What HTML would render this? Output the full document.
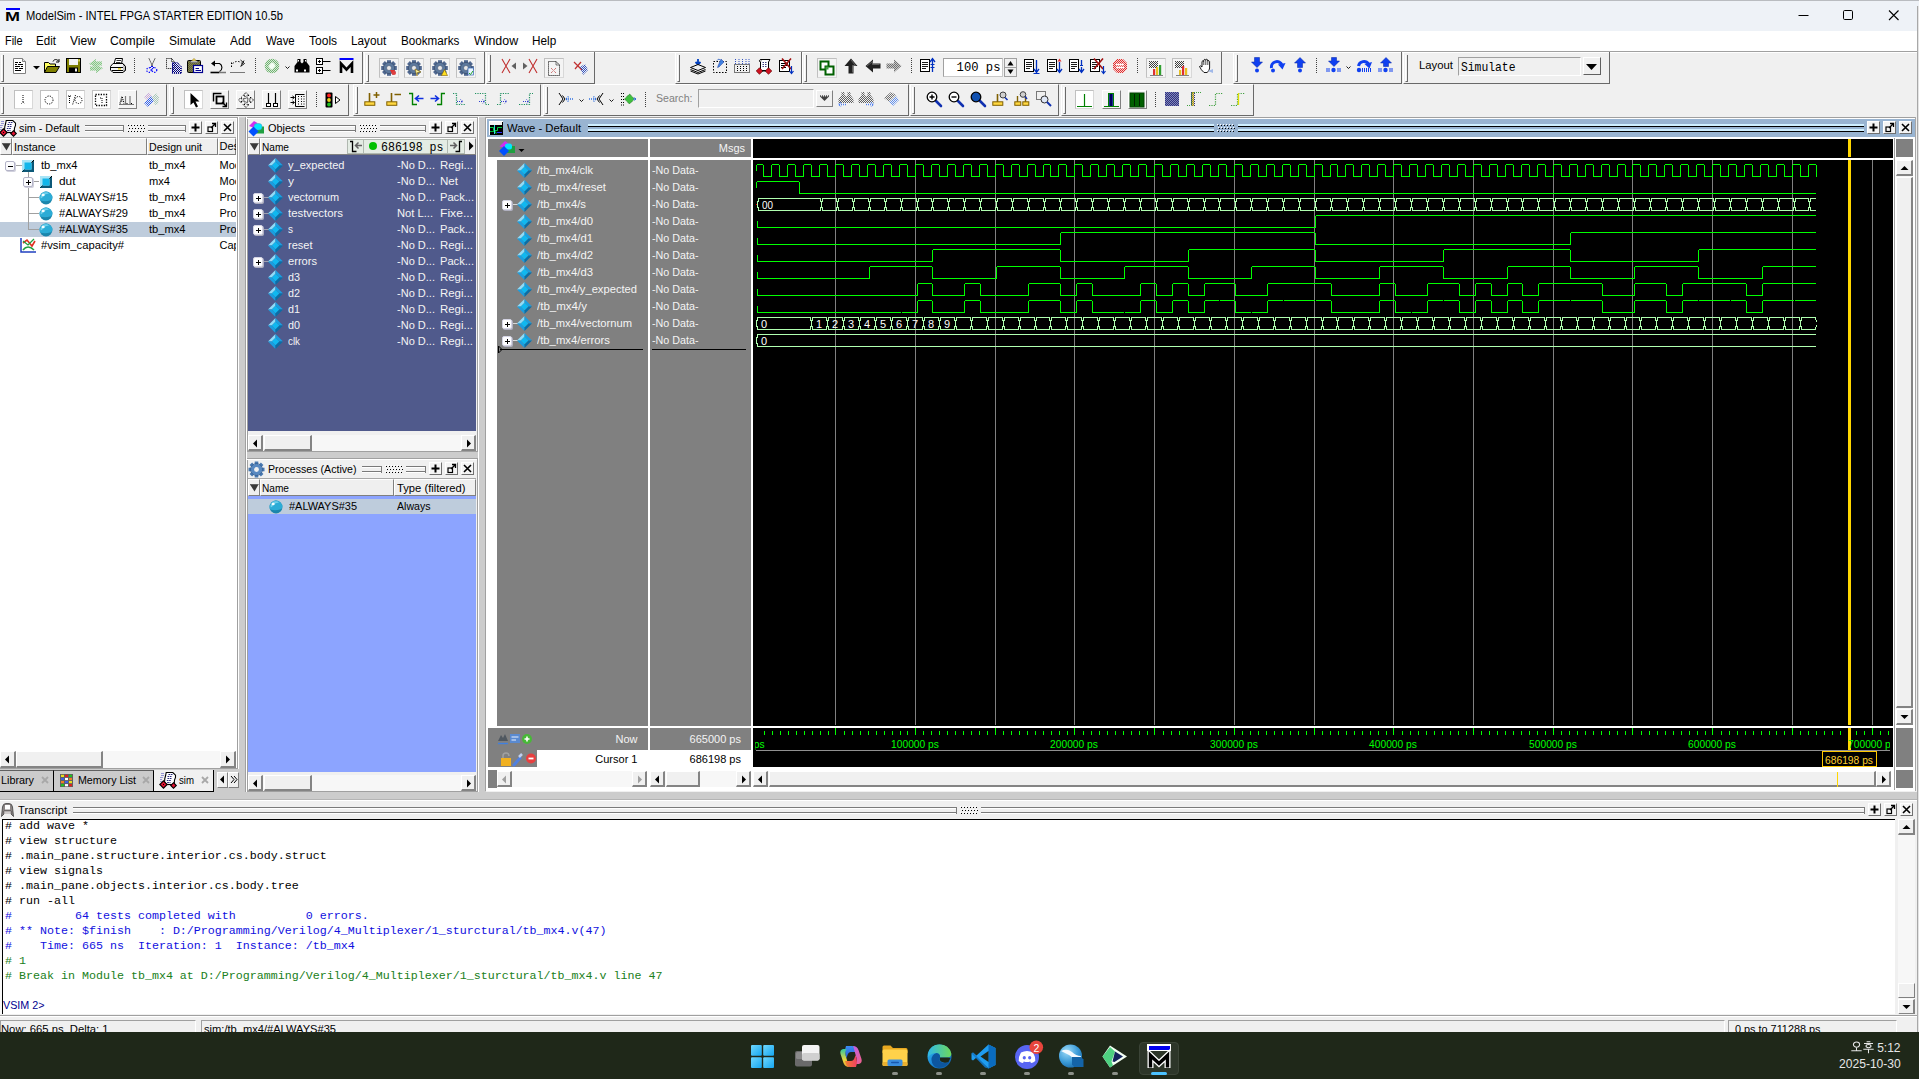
<!DOCTYPE html>
<html><head><meta charset="utf-8"><title>ModelSim</title>
<style>
html,body{margin:0;padding:0;}
body{width:1919px;height:1079px;overflow:hidden;position:relative;background:#f0f0f0;font-family:"Liberation Sans",sans-serif;font-size:11px;}
body div,body span,body svg{position:absolute;box-sizing:border-box;}
span{display:block;}
svg{overflow:visible;}
</style></head><body>
<div style="left:0px;top:0px;width:1919px;height:31px;background:#eef2f7;"></div>
<div style="left:0px;top:0px;width:1919px;height:1px;background:#b9bcc0;"></div>
<div style="left:6px;top:8px;width:14px;height:2px;background:#0000ff;"></div>
<span style="left:5px;top:10px;height:14px;line-height:14px;font-size:13px;color:#000;white-space:pre;font-weight:bold;transform-origin:0 50%;transform:scaleX(1.3852);">M</span>
<span style="left:26px;top:8px;height:16px;line-height:16px;font-size:12px;color:#000;white-space:pre;transform-origin:0 50%;transform:scaleX(0.9294);">ModelSim - INTEL FPGA STARTER EDITION 10.5b</span>
<svg style="left:1790px;top:8px;" width="120" height="16" viewBox="0 0 120 16"><path d="M8.5 7.5H18.5" stroke="#000" stroke-width="1" fill="none"/><rect x="53.5" y="2.5" width="9" height="9" rx="1.2" stroke="#000" stroke-width="1" fill="none"/><path d="M99 2.5L108.5 12M108.5 2.5L99 12" stroke="#000" stroke-width="1.1" fill="none"/></svg>
<div style="left:0px;top:31px;width:1919px;height:20px;background:#ffffff;"></div>
<span style="left:4.5px;top:32px;height:18px;line-height:18px;font-size:12.5px;color:#000;white-space:pre;transform-origin:0 50%;transform:scaleX(0.8689);">File</span>
<span style="left:36.3px;top:32px;height:18px;line-height:18px;font-size:12.5px;color:#000;white-space:pre;transform-origin:0 50%;transform:scaleX(0.9239);">Edit</span>
<span style="left:70px;top:32px;height:18px;line-height:18px;font-size:12.5px;color:#000;white-space:pre;transform-origin:0 50%;transform:scaleX(0.9677);">View</span>
<span style="left:110.3px;top:32px;height:18px;line-height:18px;font-size:12.5px;color:#000;white-space:pre;transform-origin:0 50%;transform:scaleX(0.9750);">Compile</span>
<span style="left:169.2px;top:32px;height:18px;line-height:18px;font-size:12.5px;color:#000;white-space:pre;transform-origin:0 50%;transform:scaleX(0.9624);">Simulate</span>
<span style="left:230.2px;top:32px;height:18px;line-height:18px;font-size:12.5px;color:#000;white-space:pre;transform-origin:0 50%;transform:scaleX(0.9532);">Add</span>
<span style="left:265.9px;top:32px;height:18px;line-height:18px;font-size:12.5px;color:#000;white-space:pre;transform-origin:0 50%;transform:scaleX(0.9115);">Wave</span>
<span style="left:308.8px;top:32px;height:18px;line-height:18px;font-size:12.5px;color:#000;white-space:pre;transform-origin:0 50%;transform:scaleX(0.9630);">Tools</span>
<span style="left:351.4px;top:32px;height:18px;line-height:18px;font-size:12.5px;color:#000;white-space:pre;transform-origin:0 50%;transform:scaleX(0.9406);">Layout</span>
<span style="left:401.2px;top:32px;height:18px;line-height:18px;font-size:12.5px;color:#000;white-space:pre;transform-origin:0 50%;transform:scaleX(0.9326);">Bookmarks</span>
<span style="left:473.7px;top:32px;height:18px;line-height:18px;font-size:12.5px;color:#000;white-space:pre;transform-origin:0 50%;transform:scaleX(0.9920);">Window</span>
<span style="left:532.3px;top:32px;height:18px;line-height:18px;font-size:12.5px;color:#000;white-space:pre;transform-origin:0 50%;transform:scaleX(0.9414);">Help</span>
<div style="left:0px;top:51px;width:1919px;height:65px;background:#f0f0f0;"></div>
<div style="left:0px;top:51px;width:1919px;height:1px;background:#a0a0a0;"></div>
<div style="left:0px;top:52px;width:1919px;height:1px;background:#ffffff;"></div>
<div style="left:-1px;top:52px;width:364px;height:32px;border-right:1px solid #696969;border-bottom:1px solid #696969;border-left:1px solid #fff;"></div>
<div style="left:1px;top:55px;width:3px;height:27px;border-right:1px solid #696969;border-left:1px solid #fff;border-bottom:1px solid #696969;"></div>
<svg style="left:12px;top:58px;" width="16" height="16" viewBox="0 0 16 16"><path d="M1.5 0.5H10.5L13.5 3.5V15.5H1.5Z" fill="#fff" stroke="#808080"/><path d="M10.5 0.5V3.5H13.5" fill="#e0e0e0" stroke="#808080"/><path d="M3 4.5H6M7 4.5H9M3 6.5H5M6 6.5H11M3 8.5H8M9 8.5H11M3 10.5H6M7 10.5H11M3 12.5H9" stroke="#000" shape-rendering="crispEdges"/></svg>
<svg style="left:44px;top:58px;" width="16" height="16" viewBox="0 0 16 16"><path d="M9 3.5C10 1 13 1 14.5 3" stroke="#000" fill="none"/><path d="M15 1V4H12" stroke="#000" fill="none"/><path d="M0.5 14.5V4.5H4.5L6 6H11.5V8.5" fill="#ffff60" stroke="#000"/><path d="M0.5 14.5L3.5 8.5H15.5L12 14.5Z" fill="#808000" stroke="#000"/></svg>
<svg style="left:66px;top:58px;" width="16" height="16" viewBox="0 0 16 16"><rect x="0.5" y="0.5" width="14" height="14" fill="#808000" stroke="#000"/><rect x="3" y="1" width="9" height="6" fill="#f4f4f4"/><rect x="3" y="9.5" width="9" height="5" fill="#000"/><rect x="9" y="10.5" width="2" height="3" fill="#f4f4f4"/><rect x="12.5" y="1.5" width="1.2" height="2" fill="#ffff80"/></svg>
<svg style="left:88px;top:58px;" width="16" height="16" viewBox="0 0 16 16"><defs><pattern id="u4dg" width="2" height="2" patternUnits="userSpaceOnUse"><rect width="2" height="2" fill="none"/><rect width="1" height="1" fill="#80c080"/><rect x="1" y="1" width="1" height="1" fill="#80c080"/></pattern></defs><path d="M1 6L8 1V3.5H14V7.5H8V9Z" fill="url(#u4dg)"/><path d="M15 10L8 15V12.5H2V8.5H8V7Z" fill="url(#u4dg)"/><path d="M1 6L8 1V3.5H14V7.5H8V9ZM15 10L8 15V12.5H2V8.5H8V7Z" fill="#90d090" opacity=".35"/></svg>
<svg style="left:110px;top:58px;" width="16" height="16" viewBox="0 0 16 16"><path d="M4 6L5.5 0.5H12.5L11.5 6" fill="#fff" stroke="#000"/><path d="M6.5 2.5H11M6 4.5H10.5" stroke="#000" stroke-width=".8"/><path d="M0.5 8.5L3 5.5H13L15.5 8.5V12L13 14.5H3L0.5 12Z" fill="#f4f4f4" stroke="#000"/><path d="M0.5 9.5H15.5" stroke="#000"/><path d="M2 12.5H13" stroke="#000"/><rect x="8" y="10.2" width="3" height="1.3" fill="#e8d000"/><path d="M13 6L15.5 8.5V12L13 14.5" fill="#c0c0c0" stroke="#000"/></svg>
<svg style="left:144px;top:58px;" width="16" height="16" viewBox="0 0 16 16"><path d="M5 0.5L8.5 8M11 0.5L7.5 8" stroke="#000" stroke-dasharray="1.2 1" fill="none"/><circle cx="5" cy="12" r="2.3" fill="none" stroke="#0000ff" stroke-dasharray="1.2 1.2" stroke-width="1.2"/><circle cx="10.5" cy="12" r="2.3" fill="none" stroke="#0000ff" stroke-dasharray="1.2 1.2" stroke-width="1.2"/><path d="M8 8L6 10M8 8L10 10" stroke="#0000ff"/></svg>
<svg style="left:166px;top:58px;" width="16" height="16" viewBox="0 0 16 16"><defs><pattern id="u7db" width="2" height="2" patternUnits="userSpaceOnUse"><rect width="2" height="2" fill="none"/><rect width="1" height="1" fill="#000080"/><rect x="1" y="1" width="1" height="1" fill="#000080"/></pattern></defs><path d="M0.5 0.5H5.5L8.5 3.5V10.5H0.5Z" fill="none" stroke="#000" stroke-dasharray="1 1"/><path d="M5.5 0.5V3.5H8.5" fill="none" stroke="#000" stroke-dasharray="1 1"/><path d="M6 5H11L15 9V15H6Z" fill="url(#u7db)"/><path d="M6.5 4.5H11.5L15.5 8.5V15.5H6.5Z" fill="none" stroke="#000080" stroke-dasharray="1 1"/></svg>
<svg style="left:187px;top:58px;" width="16" height="16" viewBox="0 0 16 16"><rect x="0.5" y="2.5" width="13" height="12" rx="1" fill="#808050" stroke="#000"/><defs><pattern id="u8dp" width="2" height="2" patternUnits="userSpaceOnUse"><rect width="2" height="2" fill="none"/><rect width="1" height="1" fill="#606030"/><rect x="1" y="1" width="1" height="1" fill="#606030"/></pattern></defs><rect x="1" y="3" width="12" height="11" fill="url(#u8dp)"/><path d="M4 3.5L7 0.5L10 3.5Z" fill="#ffe860" stroke="#806000" stroke-width=".6"/><rect x="3.5" y="3" width="7" height="1.6" fill="#e0e0e0" stroke="#404040" stroke-width=".5"/><rect x="6.5" y="7.5" width="9" height="7" fill="#fff" stroke="#000090" stroke-width="1.2"/><path d="M8.5 10.5H12M8.5 12.5H14" stroke="#000090"/></svg>
<svg style="left:210px;top:58px;" width="16" height="16" viewBox="0 0 16 16"><path d="M3.5 5.5H9.5A4.5 4.5 0 0 1 9.5 13.5" fill="none" stroke="#000" stroke-width="1.1"/><path d="M1 5.5L5 2.5V8.5Z" fill="#000"/><path d="M0.5 14.5H9.5" stroke="#000" stroke-width="1.6"/><path d="M10.5 14.5H15.5" stroke="#000" stroke-width="1.6" stroke-dasharray="1 1"/></svg>
<svg style="left:230px;top:58px;" width="16" height="16" viewBox="0 0 16 16"><path d="M12 5.5A5.5 4.5 0 0 0 2 7" fill="none" stroke="#000" stroke-dasharray="1.5 1.5"/><path d="M10.5 2L14.5 5.5L10.5 8.5M14 2.5L11 8" stroke="#000" fill="none" stroke-width=".9"/><path d="M0.5 14.5H15" stroke="#000" stroke-dasharray="1 1"/><path d="M1.5 4.5V6M1.5 7.5V9" stroke="#000"/></svg>
<svg style="left:264px;top:58px;" width="16" height="16" viewBox="0 0 16 16"><defs><pattern id="u11dgc" width="2" height="2" patternUnits="userSpaceOnUse"><rect width="2" height="2" fill="#d8ecd8"/><rect width="1" height="1" fill="#70b070"/><rect x="1" y="1" width="1" height="1" fill="#70b070"/></pattern></defs><circle cx="8" cy="8" r="7.3" fill="url(#u11dgc)"/><rect x="5" y="5.5" width="6" height="5" rx="1" fill="#f4fff4" transform="rotate(-45 8 8)"/></svg>
<svg style="left:294px;top:58px;" width="16" height="16" viewBox="0 0 16 16"><path d="M3.5 1H6.5V4L8 5.5V14.5H0.5V8L3.5 4Z" fill="#000"/><path d="M12.5 1H9.5V4L8 5.5V14.5H15.5V8L12.5 4Z" fill="#000"/><rect x="6.5" y="6" width="3" height="3" fill="#000"/><rect x="2" y="11.5" width="2" height="2" fill="#fff"/><rect x="10" y="11.5" width="2" height="2" fill="#fff"/><rect x="4" y="2" width="1" height="1.5" fill="#fff"/><rect x="11" y="2" width="1" height="1.5" fill="#fff"/></svg>
<svg style="left:316px;top:58px;" width="16" height="16" viewBox="0 0 16 16"><rect x="0.5" y="0.5" width="6" height="6" fill="#fff" stroke="#000"/><rect x="0.5" y="9.5" width="6" height="6" fill="#fff" stroke="#000"/><path d="M2 3.5H5M3.5 2V5M2 12.5H5M3.5 11V14" stroke="#000"/><path d="M6.5 3.5H14.5M6.5 12.5H14.5" stroke="#000"/></svg>
<svg style="left:339px;top:58px;" width="16" height="16" viewBox="0 0 16 16"><rect x="0.5" y="0" width="14" height="2" fill="#0000ff"/><path d="M2 15V5.5L7.5 11.5L13 5.5V15" stroke="#000" stroke-width="2.6" fill="none" stroke-linejoin="miter"/></svg>
<svg style="left:32.5px;top:66px;" width="7" height="4" viewBox="0 0 7 4"><path d="M0 0H7L3.5 3.5Z" fill="#000"/></svg>
<div style="left:134px;top:58px;width:1px;height:16px;background-image:linear-gradient(#404040 50%,transparent 50%);background-size:1px 2px;"></div>
<div style="left:255px;top:58px;width:1px;height:16px;background-image:linear-gradient(#404040 50%,transparent 50%);background-size:1px 2px;"></div>
<svg style="left:284.5px;top:66px;" width="5" height="4" viewBox="0 0 5 4"><path d="M0.5 0.5L2.5 2.5L4.5 0.5" stroke="#000" fill="none" stroke-width=".9"/></svg>
<div style="left:364px;top:52px;width:121px;height:32px;border-right:1px solid #696969;border-bottom:1px solid #696969;border-left:1px solid #fff;"></div>
<div style="left:366px;top:55px;width:3px;height:27px;border-right:1px solid #696969;border-left:1px solid #fff;border-bottom:1px solid #696969;"></div>
<div style="left:379px;top:58px;width:20px;height:20px;background:#f4f4f4;border:1px solid #d8d8d8;border-top-color:#c0c0c0;border-left-color:#c0c0c0;"></div>
<svg style="left:381px;top:60px;" width="16" height="16" viewBox="0 0 16 16"><rect x="-2" y="-7.8" width="4" height="4" fill="#506890" transform="translate(8 8) rotate(0)"/><rect x="-2" y="-7.8" width="4" height="4" fill="#506890" transform="translate(8 8) rotate(45)"/><rect x="-2" y="-7.8" width="4" height="4" fill="#506890" transform="translate(8 8) rotate(90)"/><rect x="-2" y="-7.8" width="4" height="4" fill="#506890" transform="translate(8 8) rotate(135)"/><rect x="-2" y="-7.8" width="4" height="4" fill="#506890" transform="translate(8 8) rotate(180)"/><rect x="-2" y="-7.8" width="4" height="4" fill="#506890" transform="translate(8 8) rotate(225)"/><rect x="-2" y="-7.8" width="4" height="4" fill="#506890" transform="translate(8 8) rotate(270)"/><rect x="-2" y="-7.8" width="4" height="4" fill="#506890" transform="translate(8 8) rotate(315)"/><circle cx="8" cy="8" r="5.6" fill="#5c789c" stroke="#3c5070" stroke-width=".8"/><circle cx="8" cy="8" r="2.5" fill="#e8e8e8" stroke="#3c5070" stroke-width=".6"/><path d="M9 10L14 10L11.5 15Z" fill="#e03030"/><circle cx="13" cy="13" r="2" fill="#e04040"/></svg>
<div style="left:404px;top:58px;width:20px;height:20px;background:#f4f4f4;border:1px solid #d8d8d8;border-top-color:#c0c0c0;border-left-color:#c0c0c0;"></div>
<svg style="left:406px;top:60px;" width="16" height="16" viewBox="0 0 16 16"><rect x="-2" y="-7.8" width="4" height="4" fill="#506890" transform="translate(8 8) rotate(0)"/><rect x="-2" y="-7.8" width="4" height="4" fill="#506890" transform="translate(8 8) rotate(45)"/><rect x="-2" y="-7.8" width="4" height="4" fill="#506890" transform="translate(8 8) rotate(90)"/><rect x="-2" y="-7.8" width="4" height="4" fill="#506890" transform="translate(8 8) rotate(135)"/><rect x="-2" y="-7.8" width="4" height="4" fill="#506890" transform="translate(8 8) rotate(180)"/><rect x="-2" y="-7.8" width="4" height="4" fill="#506890" transform="translate(8 8) rotate(225)"/><rect x="-2" y="-7.8" width="4" height="4" fill="#506890" transform="translate(8 8) rotate(270)"/><rect x="-2" y="-7.8" width="4" height="4" fill="#506890" transform="translate(8 8) rotate(315)"/><circle cx="8" cy="8" r="5.6" fill="#5c789c" stroke="#3c5070" stroke-width=".8"/><circle cx="8" cy="8" r="2.5" fill="#e8e8e8" stroke="#3c5070" stroke-width=".6"/><path d="M9 9L15 12L11.5 12.5L11 16Z" fill="#fff8a0" stroke="#806000" stroke-width=".6"/></svg>
<div style="left:430px;top:58px;width:20px;height:20px;background:#f4f4f4;border:1px solid #d8d8d8;border-top-color:#c0c0c0;border-left-color:#c0c0c0;"></div>
<svg style="left:432px;top:60px;" width="16" height="16" viewBox="0 0 16 16"><rect x="-2" y="-7.8" width="4" height="4" fill="#506890" transform="translate(8 8) rotate(0)"/><rect x="-2" y="-7.8" width="4" height="4" fill="#506890" transform="translate(8 8) rotate(45)"/><rect x="-2" y="-7.8" width="4" height="4" fill="#506890" transform="translate(8 8) rotate(90)"/><rect x="-2" y="-7.8" width="4" height="4" fill="#506890" transform="translate(8 8) rotate(135)"/><rect x="-2" y="-7.8" width="4" height="4" fill="#506890" transform="translate(8 8) rotate(180)"/><rect x="-2" y="-7.8" width="4" height="4" fill="#506890" transform="translate(8 8) rotate(225)"/><rect x="-2" y="-7.8" width="4" height="4" fill="#506890" transform="translate(8 8) rotate(270)"/><rect x="-2" y="-7.8" width="4" height="4" fill="#506890" transform="translate(8 8) rotate(315)"/><circle cx="8" cy="8" r="5.6" fill="#5c789c" stroke="#3c5070" stroke-width=".8"/><circle cx="8" cy="8" r="2.5" fill="#e8e8e8" stroke="#3c5070" stroke-width=".6"/><path d="M9.5 15.5L12.5 9.5L15.5 15.5Z" fill="#ffe020" stroke="#806000" stroke-width=".6"/></svg>
<div style="left:456px;top:58px;width:20px;height:20px;background:#f4f4f4;border:1px solid #d8d8d8;border-top-color:#c0c0c0;border-left-color:#c0c0c0;"></div>
<svg style="left:458px;top:60px;" width="16" height="16" viewBox="0 0 16 16"><rect x="-2" y="-7.8" width="4" height="4" fill="#506890" transform="translate(8 8) rotate(0)"/><rect x="-2" y="-7.8" width="4" height="4" fill="#506890" transform="translate(8 8) rotate(45)"/><rect x="-2" y="-7.8" width="4" height="4" fill="#506890" transform="translate(8 8) rotate(90)"/><rect x="-2" y="-7.8" width="4" height="4" fill="#506890" transform="translate(8 8) rotate(135)"/><rect x="-2" y="-7.8" width="4" height="4" fill="#506890" transform="translate(8 8) rotate(180)"/><rect x="-2" y="-7.8" width="4" height="4" fill="#506890" transform="translate(8 8) rotate(225)"/><rect x="-2" y="-7.8" width="4" height="4" fill="#506890" transform="translate(8 8) rotate(270)"/><rect x="-2" y="-7.8" width="4" height="4" fill="#506890" transform="translate(8 8) rotate(315)"/><circle cx="8" cy="8" r="5.6" fill="#5c789c" stroke="#3c5070" stroke-width=".8"/><circle cx="8" cy="8" r="2.5" fill="#e8e8e8" stroke="#3c5070" stroke-width=".6"/><rect x="10" y="8" width="5.5" height="7" fill="#e8f4ff" stroke="#3060b0" stroke-width=".7"/><path d="M11 13L12.5 14.5L15 11" stroke="#20a020" fill="none"/></svg>
<div style="left:486px;top:52px;width:109px;height:32px;border-right:1px solid #696969;border-bottom:1px solid #696969;border-left:1px solid #fff;"></div>
<div style="left:488px;top:55px;width:3px;height:27px;border-right:1px solid #696969;border-left:1px solid #fff;border-bottom:1px solid #696969;"></div>
<svg style="left:501px;top:58px;" width="16" height="16" viewBox="0 0 16 16"><path d="M1 1L9 15M9 1L1 15" stroke="#c03030" stroke-width="1.1"/><path d="M15 4.5V11.5L10.5 8Z" fill="#606060"/></svg>
<svg style="left:522px;top:58px;" width="16" height="16" viewBox="0 0 16 16"><path d="M7 1L15 15M15 1L7 15" stroke="#c03030" stroke-width="1.1"/><path d="M1 4.5V11.5L5.5 8Z" fill="#606060"/></svg>
<div style="left:544px;top:58px;width:20px;height:20px;background:#f4f4f4;border:1px solid #d8d8d8;border-top-color:#c0c0c0;border-left-color:#c0c0c0;"></div>
<svg style="left:546px;top:60px;" width="16" height="16" viewBox="0 0 16 16"><path d="M2.5 1.5H10L13.5 5V15.5H2.5Z" fill="none" stroke="#000" stroke-dasharray="1 1"/><path d="M10 1.5V5H13.5" fill="none" stroke="#000" stroke-dasharray="1 1"/><path d="M5 8L10 13M10 8L5 13" stroke="#c04040" stroke-dasharray="1 1"/></svg>
<svg style="left:573px;top:60px;" width="16" height="16" viewBox="0 0 16 16"><defs><pattern id="u22dpx" width="2" height="2" patternUnits="userSpaceOnUse"><rect width="2" height="2" fill="none"/><rect width="1" height="1" fill="#3050c0"/><rect x="1" y="1" width="1" height="1" fill="#3050c0"/></pattern></defs><path d="M1 2L9 10M8 2L2 9" stroke="#c03030" stroke-width="1.2"/><path d="M7 7L12 4L15 10L10 15Z" fill="url(#u22dpx)"/></svg>
<div style="left:675px;top:52px;width:127px;height:32px;border-right:1px solid #696969;border-bottom:1px solid #696969;border-left:1px solid #fff;"></div>
<div style="left:677px;top:55px;width:3px;height:27px;border-right:1px solid #696969;border-left:1px solid #fff;border-bottom:1px solid #696969;"></div>
<svg style="left:690px;top:58px;" width="16" height="16" viewBox="0 0 16 16"><path d="M8 1V6M5.5 4L8 6.5L10.5 4" stroke="#0040c0" stroke-width="1.8" fill="none"/><path d="M0.5 9.5L8 6.5L15.5 9.5L8 12.5Z" fill="#f0f0f0" stroke="#000"/><path d="M0.5 11.5L8 14.5L15.5 11.5" fill="none" stroke="#000"/><path d="M0.5 13L8 16L15.5 13" fill="none" stroke="#000"/></svg>
<svg style="left:712px;top:58px;" width="16" height="16" viewBox="0 0 16 16"><rect x="1.5" y="3.5" width="13" height="11" fill="none" stroke="#000" stroke-dasharray="1.5 1.5"/><path d="M9 1L12 4L7 9L5.5 9.5L6 8Z" fill="#4080e0" stroke="#2040a0" stroke-width=".5"/><path d="M5 2.5C6 1 7.5 1 8 2" stroke="#3060c0" fill="none"/></svg>
<svg style="left:734px;top:58px;" width="16" height="16" viewBox="0 0 16 16"><path d="M1.5 1V6M5 1V6M8.5 1V6M12 1V6M15 1V6" stroke="#3050c0" stroke-dasharray="1 1"/><rect x="0.5" y="6.5" width="15" height="8" fill="none" stroke="#000" stroke-dasharray="1 1"/><path d="M3.5 8V14M6.5 8V14M9.5 8V14M12.5 8V14" stroke="#000" stroke-dasharray="1 1"/></svg>
<svg style="left:756px;top:58px;" width="16" height="16" viewBox="0 0 16 16"><path d="M5 1.5H14L12.5 4V12.5H4.5V4Z" fill="#fff" stroke="#000"/><path d="M6.5 4.5H11M6.5 6.5H11M6.5 8.5H11" stroke="#404080" stroke-dasharray="1.5 1"/><path d="M5 1.5C3 1.5 3 4 4.5 4" fill="#fff" stroke="#000"/><rect x="1.2" y="10.7" width="4.6" height="4.6" transform="rotate(45 3.5 13)" fill="#d01020" stroke="#600" stroke-width=".7"/><rect x="10.2" y="10.7" width="4.6" height="4.6" transform="rotate(45 12.5 13)" fill="#d01020" stroke="#600" stroke-width=".7"/><path d="M6 13H10" stroke="#000"/></svg>
<svg style="left:778px;top:58px;" width="16" height="16" viewBox="0 0 16 16"><rect x="1.5" y="2.5" width="10" height="11" fill="#fff" stroke="#000"/><path d="M3 5.5H10M3 7.5H10M3 9.5H8" stroke="#000"/><path d="M4 0.5L13 11M13 0.5L4 11" stroke="#a01010" stroke-width="1.6"/><path d="M13.5 8V15M11.5 13L13.5 15.5L15.5 13" stroke="#0030c0" fill="none" stroke-width="1.2"/></svg>
<div style="left:802px;top:52px;width:420px;height:32px;border-right:1px solid #696969;border-bottom:1px solid #696969;border-left:1px solid #fff;"></div>
<div style="left:804px;top:55px;width:3px;height:27px;border-right:1px solid #696969;border-left:1px solid #fff;border-bottom:1px solid #696969;"></div>
<div style="left:817px;top:58px;width:20px;height:20px;background:#f4f4f4;border:1px solid #d8d8d8;border-top-color:#c0c0c0;border-left-color:#c0c0c0;"></div>
<svg style="left:819px;top:60px;" width="16" height="16" viewBox="0 0 16 16"><rect x="1.5" y="1.5" width="8" height="8" fill="#fff" stroke="#006000" stroke-width="2"/><rect x="6.5" y="6.5" width="8" height="8" fill="#fff" stroke="#006000" stroke-width="2"/><rect x="6.5" y="6.5" width="3" height="3" fill="#40a040"/></svg>
<svg style="left:843px;top:58px;" width="16" height="16" viewBox="0 0 16 16"><path d="M8 0.5L14.5 8H10.5V15.5H5.5V8H1.5Z" fill="#202020"/><path d="M8 2L12.5 7.5H9.5V14.5" fill="none" stroke="#707070" stroke-width=".8"/></svg>
<svg style="left:865px;top:58px;" width="16" height="16" viewBox="0 0 16 16"><path d="M0.5 8L8 1.5V5.5H15.5V10.5H8V14.5Z" fill="#202020"/><path d="M2 8L7.5 3.5V6.5H14.5" fill="none" stroke="#707070" stroke-width=".8"/></svg>
<svg style="left:886px;top:58px;" width="16" height="16" viewBox="0 0 16 16"><defs><pattern id="u31dar" width="2" height="2" patternUnits="userSpaceOnUse"><rect width="2" height="2" fill="#c8c8c8"/><rect width="1" height="1" fill="#707070"/><rect x="1" y="1" width="1" height="1" fill="#707070"/></pattern></defs><path d="M15.5 8L8 1.5V5.5H0.5V10.5H8V14.5Z" fill="url(#u31dar)"/></svg>
<div style="left:911px;top:58px;width:1px;height:16px;background-image:linear-gradient(#404040 50%,transparent 50%);background-size:1px 2px;"></div>
<svg style="left:920px;top:58px;" width="16" height="16" viewBox="0 0 16 16"><rect x="0.5" y="1.5" width="9" height="12" fill="#fff" stroke="#000"/><path d="M2 4.5H8M2 6.5H8M2 8.5H8M2 10.5H6" stroke="#000" stroke-width=".9"/><path d="M12.5 14V1M10 4L12.5 0.5L15 4" stroke="#0030c0" fill="none" stroke-width="1.3"/><path d="M10.5 6.5H14.5M10.5 9.5H14.5" stroke="#0030c0"/></svg>
<div style="left:943px;top:58px;width:60px;height:19px;background:#fff;border:1px solid #c8c8c8;border-top-color:#a0a0a0;border-left-color:#a0a0a0;"></div>
<span style="right:918.5px;top:60px;height:17px;line-height:17px;font-size:12.2px;color:#000;white-space:pre;font-family:'Liberation Mono',monospace;">100 ps</span>
<div style="left:1004px;top:58px;width:13px;height:19px;background:#f0f0f0;border:1px solid #a0a0a0;"></div>
<div style="left:1004px;top:67px;width:13px;height:1px;background:#a0a0a0;"></div>
<svg style="left:1004px;top:58px;" width="13" height="19" viewBox="0 0 13 19"><path d="M3.5 7.5H9.5L6.5 3Z" fill="#000"/><path d="M3.5 11.5H9.5L6.5 16Z" fill="#000"/></svg>
<svg style="left:1024px;top:58px;" width="16" height="16" viewBox="0 0 16 16"><rect x="0.5" y="1.5" width="9" height="12" fill="#fff" stroke="#000"/><path d="M2 4.5H8M2 6.5H8M2 8.5H8M2 10.5H6" stroke="#000" stroke-width=".9"/><path d="M12.5 2V14M10 11L12.5 14.5L15 11" stroke="#0030c0" fill="none" stroke-width="1.3"/><path d="M9.5 15.5H15.5" stroke="#0030c0"/></svg>
<svg style="left:1047px;top:58px;" width="16" height="16" viewBox="0 0 16 16"><rect x="0.5" y="1.5" width="9" height="12" fill="#fff" stroke="#000"/><path d="M2 4.5H8M2 6.5H8M2 8.5H8M2 10.5H6" stroke="#000" stroke-width=".9"/><path d="M12.5 4V14M10 11L12.5 14.5L15 11" stroke="#0030c0" fill="none" stroke-width="1.3"/><path d="M12.5 0.5L14.5 3.5H10.5Z" fill="#e03030"/></svg>
<svg style="left:1069px;top:58px;" width="16" height="16" viewBox="0 0 16 16"><rect x="0.5" y="1.5" width="9" height="12" fill="#fff" stroke="#000"/><path d="M2 4.5H8M2 6.5H8M2 8.5H8M2 10.5H6" stroke="#000" stroke-width=".9"/><path d="M12.5 2V8M12.5 9V14M10 11L12.5 14.5L15 11" stroke="#0030c0" fill="none" stroke-width="1.3"/><path d="M11 7.5H14" stroke="#0030c0"/></svg>
<svg style="left:1090px;top:58px;" width="16" height="16" viewBox="0 0 16 16"><rect x="0.5" y="1.5" width="9" height="12" fill="#fff" stroke="#000"/><path d="M2 4.5H8M2 6.5H8M2 8.5H8M2 10.5H6" stroke="#000" stroke-width=".9"/><path d="M4 0.5L13 11M13 0.5L4 11" stroke="#a01010" stroke-width="1.6"/><path d="M13.5 8V15M11.5 13L13.5 15.5L15.5 13" stroke="#0030c0" fill="none" stroke-width="1.2"/></svg>
<svg style="left:1112px;top:58px;" width="16" height="16" viewBox="0 0 16 16"><defs><pattern id="u37dst" width="2" height="2" patternUnits="userSpaceOnUse"><rect width="2" height="2" fill="#f8d0d0"/><rect width="1" height="1" fill="#e03030"/><rect x="1" y="1" width="1" height="1" fill="#e03030"/></pattern></defs><path d="M5 1H11L15 5V11L11 15H5L1 11V5Z" fill="url(#u37dst)"/><path d="M4 6.5H12M4 9.5H12" stroke="#fff" stroke-width="1.5"/></svg>
<div style="left:1137px;top:58px;width:1px;height:16px;background-image:linear-gradient(#404040 50%,transparent 50%);background-size:1px 2px;"></div>
<div style="left:1146px;top:58px;width:20px;height:20px;background:#f4f4f4;border:1px solid #d8d8d8;border-top-color:#c0c0c0;border-left-color:#c0c0c0;"></div>
<svg style="left:1148px;top:60px;" width="16" height="16" viewBox="0 0 16 16"><defs><pattern id="u38dpf" width="2" height="2" patternUnits="userSpaceOnUse"><rect width="2" height="2" fill="none"/><rect width="1" height="1" fill="#404040"/><rect x="1" y="1" width="1" height="1" fill="#404040"/></pattern></defs><rect x="1" y="1" width="9" height="7" fill="url(#u38dpf)"/><rect x="5" y="9" width="2.2" height="6" fill="#e03030"/><rect x="8" y="7" width="2.2" height="8" fill="#e8c020"/><rect x="11" y="5" width="2.2" height="10" fill="#30a030"/><path d="M2 15.5H15" stroke="#808080"/></svg>
<div style="left:1172px;top:58px;width:20px;height:20px;background:#f4f4f4;border:1px solid #d8d8d8;border-top-color:#c0c0c0;border-left-color:#c0c0c0;"></div>
<svg style="left:1174px;top:60px;" width="16" height="16" viewBox="0 0 16 16"><defs><pattern id="u39dpf2" width="2" height="2" patternUnits="userSpaceOnUse"><rect width="2" height="2" fill="none"/><rect width="1" height="1" fill="#404040"/><rect x="1" y="1" width="1" height="1" fill="#404040"/></pattern></defs><rect x="1" y="1" width="9" height="7" fill="url(#u39dpf2)"/><rect x="5" y="10" width="2.2" height="5" fill="#e8c020"/><rect x="8" y="6" width="2.2" height="9" fill="#e03030"/><rect x="11" y="8" width="2.2" height="7" fill="#e8c020"/><path d="M2 15.5H15" stroke="#808080"/></svg>
<svg style="left:1198px;top:58px;" width="16" height="16" viewBox="0 0 16 16"><path d="M4 8V3.5Q4.8 2.2 5.8 3.5V2Q6.8 0.6 7.8 2V1.8Q8.8 0.5 9.8 2V3Q11 2 11.6 3.5V10Q11.5 13 9 14.5H6Q3 12 1.5 8.5Q2.5 7 4 9Z" fill="#fff" stroke="#000" stroke-width=".9"/><path d="M5.8 3.5V7M7.8 2V7M9.8 2.5V7" stroke="#000" stroke-width=".7"/><path d="M10 13L15 11V15Z" fill="#a0b8e8"/></svg>
<div style="left:1233px;top:52px;width:169px;height:32px;border-right:1px solid #696969;border-bottom:1px solid #696969;border-left:1px solid #fff;"></div>
<div style="left:1235px;top:55px;width:3px;height:27px;border-right:1px solid #696969;border-left:1px solid #fff;border-bottom:1px solid #696969;"></div>
<svg style="left:1249px;top:57px;" width="16" height="16" viewBox="0 0 16 16"><path d="M5.5 0.5H10.5V5H13.5L8 10.5L2.5 5H5.5Z" fill="#1040f0" stroke="#0020a0" stroke-width=".5"/><circle cx="8" cy="13.5" r="2" fill="#1040f0"/></svg>
<svg style="left:1270px;top:57px;" width="16" height="16" viewBox="0 0 16 16"><path d="M1.5 11A5.5 5.5 0 0 1 12 8" stroke="#1040f0" stroke-width="3" fill="none"/><path d="M15.5 6L12.5 12.5L8 7.5Z" fill="#1040f0"/><circle cx="3" cy="13.5" r="2" fill="#1040f0"/></svg>
<svg style="left:1292px;top:57px;" width="16" height="16" viewBox="0 0 16 16"><path d="M5.5 10.5H10.5V6H13.5L8 0.5L2.5 6H5.5Z" fill="#1040f0" stroke="#0020a0" stroke-width=".5"/><circle cx="8" cy="13.5" r="2" fill="#1040f0"/></svg>
<svg style="left:1326px;top:57px;" width="16" height="16" viewBox="0 0 16 16"><path d="M5.5 0.5H10.5V4H13.5L8 9.5L2.5 4H5.5Z" fill="#1040f0" stroke="#0020a0" stroke-width=".5"/><path d="M1 11V15M3 11V15M12 11V15M14 11V15" stroke="#1040f0"/><circle cx="7.5" cy="13" r="2.2" fill="#1040f0"/></svg>
<svg style="left:1356px;top:57px;" width="16" height="16" viewBox="0 0 16 16"><path d="M2.5 9A5.5 5.5 0 0 1 12.5 7" stroke="#1040f0" stroke-width="3" fill="none"/><path d="M16 5L13.5 11.5L8.5 7Z" fill="#1040f0"/><circle cx="3" cy="13" r="2.2" fill="#1040f0"/><path d="M6.5 11V15M8.5 11V15M10.5 11V15M12.5 11V15M14.5 11V15" stroke="#1040f0"/></svg>
<svg style="left:1378px;top:57px;" width="16" height="16" viewBox="0 0 16 16"><path d="M5.5 9.5H10.5V6H13.5L8 0.5L2.5 6H5.5Z" fill="#1040f0" stroke="#0020a0" stroke-width=".5"/><path d="M1 11V15M3 11V15M12 11V15M14 11V15" stroke="#1040f0"/><circle cx="7.5" cy="13" r="2.2" fill="#1040f0"/></svg>
<div style="left:1316px;top:58px;width:1px;height:16px;background-image:linear-gradient(#404040 50%,transparent 50%);background-size:1px 2px;"></div>
<svg style="left:1345.5px;top:66px;" width="5" height="4" viewBox="0 0 5 4"><path d="M0.5 0.5L2.5 2.5L4.5 0.5" stroke="#000" fill="none" stroke-width=".9"/></svg>
<div style="left:1403px;top:52px;width:207px;height:32px;border-right:1px solid #696969;border-bottom:1px solid #696969;border-left:1px solid #fff;"></div>
<div style="left:1405px;top:55px;width:3px;height:27px;border-right:1px solid #696969;border-left:1px solid #fff;border-bottom:1px solid #696969;"></div>
<span style="left:1419px;top:57px;height:17px;line-height:17px;font-size:11px;color:#000;white-space:pre;transform-origin:0 50%;transform:scaleX(1.0296);">Layout</span>
<div style="left:1458px;top:57px;width:123px;height:19px;background:#f0f0f0;border:1px solid #fff;border-top-color:#a0a0a0;border-left-color:#a0a0a0;"></div>
<span style="left:1461px;top:59px;height:18px;line-height:18px;font-size:12.2px;color:#000;white-space:pre;font-family:'Liberation Mono',monospace;transform-origin:0 50%;transform:scaleX(0.9304);">Simulate</span>
<div style="left:1583px;top:57px;width:18px;height:18px;background:#f0f0f0;border-right:1px solid #606060;border-bottom:1px solid #606060;border-top:1px solid #fff;border-left:1px solid #fff;"></div>
<svg style="left:1583px;top:57px;" width="18" height="18" viewBox="0 0 18 18"><path d="M3 7H14L8.5 13Z" fill="#000"/></svg>
<div style="left:-1px;top:84px;width:168px;height:32px;border-right:1px solid #696969;border-bottom:1px solid #696969;border-left:1px solid #fff;border-top:1px solid #fff;"></div>
<div style="left:1px;top:87px;width:3px;height:27px;border-right:1px solid #696969;border-left:1px solid #fff;border-bottom:1px solid #696969;"></div>
<div style="left:14px;top:90px;width:19px;height:19px;background:#fff;border:1px solid #d8d8d8;border-top-color:#c0c0c0;border-left-color:#c0c0c0;"></div>
<svg style="left:15px;top:92px;" width="16" height="16" viewBox="0 0 16 16"><path d="M8 3V11M6.5 11.5L8 10L9.5 11.5" stroke="#000" stroke-dasharray="1 1" fill="none"/></svg>
<div style="left:40px;top:90px;width:19px;height:19px;background:#fff;border:1px solid #d8d8d8;border-top-color:#c0c0c0;border-left-color:#c0c0c0;"></div>
<svg style="left:41px;top:92px;" width="16" height="16" viewBox="0 0 16 16"><circle cx="8" cy="8" r="4" stroke="#000" stroke-dasharray="1.2 1.2" fill="none"/></svg>
<div style="left:66px;top:90px;width:19px;height:19px;background:#fff;border:1px solid #d8d8d8;border-top-color:#c0c0c0;border-left-color:#c0c0c0;"></div>
<svg style="left:67px;top:92px;" width="16" height="16" viewBox="0 0 16 16"><path d="M2.5 4V12M1 4H4M8.5 3L5.5 13" stroke="#000" stroke-dasharray="1 1" fill="none"/><circle cx="11.5" cy="8" r="3.5" stroke="#000" stroke-dasharray="1.2 1.2" fill="none"/></svg>
<div style="left:92px;top:90px;width:19px;height:19px;background:#fff;border:1px solid #d8d8d8;border-top-color:#c0c0c0;border-left-color:#c0c0c0;"></div>
<svg style="left:93px;top:92px;" width="16" height="16" viewBox="0 0 16 16"><rect x="2.5" y="2.5" width="11" height="11" stroke="#000" stroke-dasharray="1.3 1.3" fill="none" stroke-width="1.3"/><path d="M7 6H9V11" stroke="#000" stroke-dasharray="1 1" fill="none"/></svg>
<div style="left:118px;top:90px;width:19px;height:19px;background:#f4f4f4;border-right:1px solid #808080;border-bottom:1px solid #808080;border-top:1px solid #fff;border-left:1px solid #fff;"></div>
<svg style="left:119px;top:92px;" width="16" height="16" viewBox="0 0 16 16"><path d="M1 11.5L3 4.5L5 11.5M2 9H4M6.5 4.5V11.5H9.5M11 4.5V11.5H14" stroke="#000" stroke-dasharray="1 1" fill="none" stroke-width="1.2"/><path d="M0.5 12.5H15" stroke="#000" stroke-dasharray="1 1"/></svg>
<svg style="left:143px;top:92px;" width="16" height="16" viewBox="0 0 16 16"><defs><pattern id="u52dp1" width="2" height="2" patternUnits="userSpaceOnUse"><rect width="2" height="2" fill="none"/><rect width="1" height="1" fill="#3060f0"/><rect x="1" y="1" width="1" height="1" fill="#3060f0"/></pattern><pattern id="u52dp2" width="2" height="2" patternUnits="userSpaceOnUse"><rect width="2" height="2" fill="none"/><rect width="1" height="1" fill="#c8a8d8"/><rect x="1" y="1" width="1" height="1" fill="#c8a8d8"/></pattern><pattern id="u52dp3" width="2" height="2" patternUnits="userSpaceOnUse"><rect width="2" height="2" fill="none"/><rect width="1" height="1" fill="#a8c8b8"/><rect x="1" y="1" width="1" height="1" fill="#a8c8b8"/></pattern></defs><path d="M1 11L8 4L12 8L5 15Z" fill="url(#u52dp1)"/><path d="M1 5L6 0.5L9 3.5L4 8Z" fill="url(#u52dp2)"/><path d="M9 5L13 1L16 5L15 12L12 13Z" fill="url(#u52dp3)"/></svg>
<div style="left:169px;top:84px;width:180px;height:32px;border-right:1px solid #696969;border-bottom:1px solid #696969;border-left:1px solid #fff;border-top:1px solid #fff;"></div>
<div style="left:171px;top:87px;width:3px;height:27px;border-right:1px solid #696969;border-left:1px solid #fff;border-bottom:1px solid #696969;"></div>
<div style="left:184px;top:90px;width:19px;height:19px;background:#fff;border:1px solid #d8d8d8;border-top-color:#c0c0c0;border-left-color:#c0c0c0;"></div>
<svg style="left:186px;top:92px;" width="16" height="16" viewBox="0 0 16 16"><path d="M4.5 1V13L7.5 10.5L10 15.5L12 14.5L9.5 9.5H13.5Z" fill="#000"/></svg>
<div style="left:210px;top:90px;width:19px;height:19px;background:#f4f4f4;border-right:1px solid #808080;border-bottom:1px solid #808080;border-top:1px solid #fff;border-left:1px solid #fff;"></div>
<svg style="left:212px;top:92px;" width="16" height="16" viewBox="0 0 16 16"><path d="M1.5 9.5V1.5H9.5" stroke="#000" stroke-width="1.4" fill="none"/><rect x="4.5" y="4.5" width="7" height="7" stroke="#000" stroke-width="1.8" fill="none"/><path d="M10 10L14.5 14.5M14.5 10.5V14.5H10.5" stroke="#000" stroke-width="1.3" fill="none"/></svg>
<div style="left:236px;top:90px;width:19px;height:19px;background:#f4f4f4;border-right:1px solid #808080;border-bottom:1px solid #808080;border-top:1px solid #fff;border-left:1px solid #fff;"></div>
<svg style="left:238px;top:92px;" width="16" height="16" viewBox="0 0 16 16"><path d="M8 0.5L11 3.5H9V7H12.5V5L15.5 8L12.5 11V9H9V12.5H11L8 15.5L5 12.5H7V9H3.5V11L0.5 8L3.5 5V7H7V3.5H5Z" fill="none" stroke="#000" stroke-dasharray="1.2 0.8"/></svg>
<div style="left:262px;top:90px;width:19px;height:19px;background:#f4f4f4;border-right:1px solid #808080;border-bottom:1px solid #808080;border-top:1px solid #fff;border-left:1px solid #fff;"></div>
<svg style="left:264px;top:92px;" width="16" height="16" viewBox="0 0 16 16"><path d="M4.5 1V12M11.5 1V12" stroke="#000" stroke-width="1.2"/><rect x="2.5" y="11.5" width="4" height="3" fill="#fff" stroke="#000"/><rect x="9.5" y="11.5" width="4" height="3" fill="#fff" stroke="#000"/></svg>
<div style="left:288px;top:90px;width:19px;height:19px;background:#f4f4f4;border-right:1px solid #808080;border-bottom:1px solid #808080;border-top:1px solid #fff;border-left:1px solid #fff;"></div>
<svg style="left:290px;top:92px;" width="16" height="16" viewBox="0 0 16 16"><path d="M5.5 2.5H14.5M5.5 2.5V14.5H14.5" stroke="#000" fill="none"/><path d="M0.5 5.5H4M0.5 10.5H4M2.5 4L4.5 5.5L2.5 7M2.5 9L4.5 10.5L2.5 12" stroke="#000" fill="none"/><path d="M8.5 4V13M11.5 4V13M14 4V13" stroke="#000" stroke-dasharray="1 1.5"/></svg>
<div style="left:316px;top:92px;width:1px;height:16px;background-image:linear-gradient(#404040 50%,transparent 50%);background-size:1px 2px;"></div>
<svg style="left:325px;top:92px;" width="16" height="16" viewBox="0 0 16 16"><rect x="0.5" y="0.5" width="7" height="15" rx="1" fill="#000"/><circle cx="4" cy="3.5" r="1.9" fill="#ff2020"/><circle cx="4" cy="8" r="1.9" fill="#e8d020"/><circle cx="4" cy="12.5" r="1.9" fill="#20c020"/><path d="M10.5 4.5V11.5L15 8Z" fill="#fff" stroke="#000"/></svg>
<div style="left:353px;top:84px;width:188px;height:32px;border-right:1px solid #696969;border-bottom:1px solid #696969;border-left:1px solid #fff;border-top:1px solid #fff;"></div>
<div style="left:355px;top:87px;width:3px;height:27px;border-right:1px solid #696969;border-left:1px solid #fff;border-bottom:1px solid #696969;"></div>
<svg style="left:364px;top:91px;" width="16" height="16" viewBox="0 0 16 16"><path d="M5.5 2V11" stroke="#806000" stroke-width="1.6"/><rect x="0.8" y="10.8" width="10" height="3.5" fill="#ffd840" stroke="#806000"/><path d="M12.5 1V7M9.5 4H15.5" stroke="#806000" stroke-width="1.5"/></svg>
<svg style="left:386px;top:91px;" width="16" height="16" viewBox="0 0 16 16"><path d="M5.5 2V11" stroke="#806000" stroke-width="1.6"/><rect x="0.8" y="10.8" width="10" height="3.5" fill="#ffd840" stroke="#806000"/><path d="M8.5 3.5H15" stroke="#806000" stroke-width="1.5"/></svg>
<svg style="left:408px;top:91px;" width="16" height="16" viewBox="0 0 16 16"><path d="M1 2.5H4.5V13.5H9" stroke="#008000" stroke-width="1.4" fill="none"/><path d="M15.5 7.5H8M11 4.5L7.5 7.5L11 10.5" stroke="#1030e0" stroke-width="1.6" fill="none"/></svg>
<svg style="left:430px;top:91px;" width="16" height="16" viewBox="0 0 16 16"><path d="M15 2.5H11.5V13.5H7" stroke="#008000" stroke-width="1.4" fill="none"/><path d="M0.5 7.5H8M5 4.5L8.5 7.5L5 10.5" stroke="#1030e0" stroke-width="1.6" fill="none"/></svg>
<svg style="left:452px;top:91px;" width="16" height="16" viewBox="0 0 16 16"><path d="M1 2.5H4.5V13.5H14" stroke="#209060" stroke-dasharray="1.2 1.2" fill="none" stroke-width="1.2"/><path d="M5 10.5H11M8.5 8.5L11 10.5L8.5 12.5" stroke="#3040d0" stroke-dasharray="1 1" fill="none"/></svg>
<svg style="left:474px;top:91px;" width="16" height="16" viewBox="0 0 16 16"><path d="M1 2.5H11.5V13.5H15" stroke="#209060" stroke-dasharray="1.2 1.2" fill="none" stroke-width="1.2"/><path d="M5 10.5H11M8.5 8.5L11 10.5L8.5 12.5" stroke="#3040d0" stroke-dasharray="1 1" fill="none"/></svg>
<svg style="left:496px;top:91px;" width="16" height="16" viewBox="0 0 16 16"><path d="M1 13.5H4.5V2.5H14" stroke="#209060" stroke-dasharray="1.2 1.2" fill="none" stroke-width="1.2"/><path d="M5 10.5H11M8.5 8.5L11 10.5L8.5 12.5" stroke="#3040d0" stroke-dasharray="1 1" fill="none"/></svg>
<svg style="left:518px;top:91px;" width="16" height="16" viewBox="0 0 16 16"><path d="M1 13.5H11.5V2.5H15" stroke="#209060" stroke-dasharray="1.2 1.2" fill="none" stroke-width="1.2"/><path d="M5 10.5H11M8.5 8.5L11 10.5L8.5 12.5" stroke="#3040d0" stroke-dasharray="1 1" fill="none"/></svg>
<div style="left:543px;top:84px;width:366px;height:32px;border-right:1px solid #696969;border-bottom:1px solid #696969;border-left:1px solid #fff;border-top:1px solid #fff;"></div>
<div style="left:545px;top:87px;width:3px;height:27px;border-right:1px solid #696969;border-left:1px solid #fff;border-bottom:1px solid #696969;"></div>
<svg style="left:558px;top:91px;" width="16" height="16" viewBox="0 0 16 16"><path d="M1 2L5 8L1 14M4.5 4.5L7 8L4.5 11.5" stroke="#000" fill="none"/><path d="M15 8H8M10.5 5.5L8 8L10.5 10.5" stroke="#3070e0" stroke-dasharray="1 1" fill="none" stroke-width="1.4"/></svg>
<svg style="left:578.5px;top:99px;" width="5" height="4" viewBox="0 0 5 4"><path d="M0.5 0.5L2.5 2.5L4.5 0.5" stroke="#000" fill="none" stroke-width=".9"/></svg>
<svg style="left:588px;top:91px;" width="16" height="16" viewBox="0 0 16 16"><path d="M15 2L11 8L15 14M11.5 4.5L9 8L11.5 11.5" stroke="#000" fill="none"/><path d="M1 8H8M5.5 5.5L8 8L5.5 10.5" stroke="#3070e0" stroke-dasharray="1 1" fill="none" stroke-width="1.4"/></svg>
<svg style="left:609px;top:99px;" width="5" height="4" viewBox="0 0 5 4"><path d="M0.5 0.5L2.5 2.5L4.5 0.5" stroke="#000" fill="none" stroke-width=".9"/></svg>
<svg style="left:620px;top:91px;" width="16" height="16" viewBox="0 0 16 16"><path d="M1 2.5H4M1 5.5H4M1 8.5H4M1 11.5H4M1 14H4" stroke="#000" stroke-dasharray="1 1"/><path d="M9.5 3L14.5 8L9.5 13L4.5 8Z" fill="#40c040" stroke="#207020" stroke-dasharray="1 1"/><path d="M13 8H16M14.5 6.5L16 8L14.5 9.5" stroke="#3070e0" fill="none"/></svg>
<div style="left:645px;top:92px;width:1px;height:16px;background-image:linear-gradient(#404040 50%,transparent 50%);background-size:1px 2px;"></div>
<span style="left:655.5px;top:90px;height:17px;line-height:17px;font-size:11px;color:#808080;white-space:pre;transform-origin:0 50%;transform:scaleX(0.9629);">Search:</span>
<div style="left:698px;top:89px;width:116px;height:19px;background:#f0f0f0;border:1px solid #fff;border-top-color:#a0a0a0;border-left-color:#a0a0a0;"></div>
<div style="left:816px;top:90px;width:17px;height:17px;background:#f0f0f0;border-right:1px solid #808080;border-bottom:1px solid #808080;border-top:1px solid #fff;border-left:1px solid #fff;"></div>
<svg style="left:816px;top:90px;" width="17" height="17" viewBox="0 0 17 17"><path d="M4 6.5H13L8.5 11Z" fill="#404040"/><path d="M4 6H13" stroke="#000" stroke-dasharray="1 1"/></svg>
<svg style="left:838px;top:91px;" width="16" height="16" viewBox="0 0 16 16"><defs><pattern id="u70dbn" width="2" height="2" patternUnits="userSpaceOnUse"><rect width="2" height="2" fill="none"/><rect width="1" height="1" fill="#606060"/><rect x="1" y="1" width="1" height="1" fill="#606060"/></pattern></defs><path d="M3.5 1H6.5V4L8 5.5V12H0.5V8L3.5 4Z" fill="url(#u70dbn)"/><path d="M12.5 1H9.5V4L8 5.5V12H15.5V8L12.5 4Z" fill="url(#u70dbn)"/><path d="M1 13.5H8M3 11.5L0.5 13.5L3 15.5" stroke="#5080f0" fill="none" stroke-dasharray="1 1" stroke-width="1.4"/></svg>
<svg style="left:858px;top:91px;" width="16" height="16" viewBox="0 0 16 16"><defs><pattern id="u71dbn" width="2" height="2" patternUnits="userSpaceOnUse"><rect width="2" height="2" fill="none"/><rect width="1" height="1" fill="#606060"/><rect x="1" y="1" width="1" height="1" fill="#606060"/></pattern></defs><path d="M3.5 1H6.5V4L8 5.5V12H0.5V8L3.5 4Z" fill="url(#u71dbn)"/><path d="M12.5 1H9.5V4L8 5.5V12H15.5V8L12.5 4Z" fill="url(#u71dbn)"/><path d="M8 13.5H15M13 11.5L15.5 13.5L13 15.5" stroke="#5080f0" fill="none" stroke-dasharray="1 1" stroke-width="1.4"/></svg>
<svg style="left:883px;top:91px;" width="16" height="16" viewBox="0 0 16 16"><defs><pattern id="u72dbn3" width="2" height="2" patternUnits="userSpaceOnUse"><rect width="2" height="2" fill="none"/><rect width="1" height="1" fill="#707070"/><rect x="1" y="1" width="1" height="1" fill="#707070"/></pattern><pattern id="u72dbn4" width="2" height="2" patternUnits="userSpaceOnUse"><rect width="2" height="2" fill="none"/><rect width="1" height="1" fill="#6090f0"/><rect x="1" y="1" width="1" height="1" fill="#6090f0"/></pattern></defs><path d="M1 7L8 1L13 4L6 11Z" fill="url(#u72dbn3)"/><path d="M6 11L13 5L16 9L10 15Z" fill="url(#u72dbn4)"/></svg>
<div style="left:910px;top:84px;width:149px;height:32px;border-right:1px solid #696969;border-bottom:1px solid #696969;border-left:1px solid #fff;border-top:1px solid #fff;"></div>
<div style="left:912px;top:87px;width:3px;height:27px;border-right:1px solid #696969;border-left:1px solid #fff;border-bottom:1px solid #696969;"></div>
<svg style="left:926px;top:91px;" width="16" height="16" viewBox="0 0 16 16"><path d="M9.5 9.5L15 15" stroke="#1030b0" stroke-width="2.6" stroke-linecap="round"/><circle cx="6" cy="6" r="4.8" fill="#fff" stroke="#000" stroke-width="1.3"/><path d="M3.5 6H8.5M6 3.5V8.5" stroke="#000" stroke-width="1.4"/></svg>
<svg style="left:948px;top:91px;" width="16" height="16" viewBox="0 0 16 16"><path d="M9.5 9.5L15 15" stroke="#1030b0" stroke-width="2.6" stroke-linecap="round"/><circle cx="6" cy="6" r="4.8" fill="#fff" stroke="#000" stroke-width="1.3"/><path d="M3.5 6H8.5" stroke="#000" stroke-width="1.4"/></svg>
<svg style="left:970px;top:91px;" width="16" height="16" viewBox="0 0 16 16"><path d="M9.5 9.5L15 15" stroke="#1030b0" stroke-width="2.6" stroke-linecap="round"/><circle cx="6" cy="6" r="4.8" fill="#1050b0" stroke="#000" stroke-width="1.3"/></svg>
<svg style="left:992px;top:91px;" width="16" height="16" viewBox="0 0 16 16"><path d="M5.5 3V11" stroke="#806000" stroke-width="1.6"/><rect x="0.8" y="10.8" width="10" height="3.5" fill="#ffd840" stroke="#806000"/><circle cx="11" cy="4" r="3" fill="#d0d0d0" stroke="#404040"/><path d="M13 6.5L15.5 9" stroke="#1030b0" stroke-width="1.6"/></svg>
<svg style="left:1014px;top:91px;" width="16" height="16" viewBox="0 0 16 16"><path d="M3.5 5V11M11.5 5V11" stroke="#806000" stroke-width="1.4"/><rect x="0.8" y="10.8" width="6" height="3.5" fill="#ffd840" stroke="#806000"/><rect x="8.8" y="10.8" width="6" height="3.5" fill="#ffd840" stroke="#806000"/><circle cx="9" cy="3.5" r="2.8" fill="#d0d0d0" stroke="#404040"/><path d="M11 5.5L13 8" stroke="#1030b0" stroke-width="1.5"/></svg>
<svg style="left:1036px;top:91px;" width="16" height="16" viewBox="0 0 16 16"><rect x="0.5" y="0.5" width="9" height="8" fill="none" stroke="#000" stroke-dasharray="1 1"/><circle cx="8.5" cy="8.5" r="3.5" fill="#e0e8f8" stroke="#303030"/><path d="M11 11L15 15" stroke="#1030b0" stroke-width="2"/></svg>
<div style="left:1061px;top:84px;width:193px;height:32px;border-right:1px solid #696969;border-bottom:1px solid #696969;border-left:1px solid #fff;border-top:1px solid #fff;"></div>
<div style="left:1063px;top:87px;width:3px;height:27px;border-right:1px solid #696969;border-left:1px solid #fff;border-bottom:1px solid #696969;"></div>
<div style="left:1075px;top:90px;width:19px;height:19px;background:#fff;border:1px solid #d8d8d8;border-top-color:#c0c0c0;border-left-color:#c0c0c0;"></div>
<svg style="left:1076px;top:92px;" width="16" height="16" viewBox="0 0 16 16"><path d="M8.5 2V14" stroke="#008000" stroke-width="1.2"/><path d="M1 14.5H16" stroke="#008000"/></svg>
<div style="left:1102px;top:90px;width:19px;height:19px;background:#f4f4f4;border-right:1px solid #808080;border-bottom:1px solid #808080;border-top:1px solid #fff;border-left:1px solid #fff;"></div>
<svg style="left:1103px;top:92px;" width="16" height="16" viewBox="0 0 16 16"><path d="M1 14.5H16" stroke="#008000"/><rect x="5.5" y="1.5" width="5" height="13" fill="#203090" stroke="#008000"/><rect x="7" y="2" width="2" height="12" fill="#000060"/></svg>
<div style="left:1128px;top:90px;width:19px;height:19px;background:#f4f4f4;border-right:1px solid #808080;border-bottom:1px solid #808080;border-top:1px solid #fff;border-left:1px solid #fff;"></div>
<svg style="left:1129px;top:92px;" width="16" height="16" viewBox="0 0 16 16"><rect x="1" y="1" width="14" height="14" fill="#006000" stroke="#004000"/><path d="M5.5 2V14M10.5 2V14" stroke="#002000"/></svg>
<div style="left:1155px;top:92px;width:1px;height:16px;background-image:linear-gradient(#404040 50%,transparent 50%);background-size:1px 2px;"></div>
<svg style="left:1164px;top:91px;" width="16" height="16" viewBox="0 0 16 16"><defs><pattern id="u82dw4" width="2" height="2" patternUnits="userSpaceOnUse"><rect width="2" height="2" fill="#8088b8"/><rect width="1" height="1" fill="#303080"/><rect x="1" y="1" width="1" height="1" fill="#303080"/></pattern></defs><rect x="1" y="1" width="14" height="14" fill="url(#u82dw4)"/></svg>
<svg style="left:1186px;top:91px;" width="16" height="16" viewBox="0 0 16 16"><defs><pattern id="u83dw5" width="2" height="2" patternUnits="userSpaceOnUse"><rect width="2" height="2" fill="none"/><rect width="1" height="1" fill="#303080"/><rect x="1" y="1" width="1" height="1" fill="#303080"/></pattern></defs><rect x="5" y="1" width="4" height="14" fill="url(#u83dw5)"/><path d="M1 14.5H5.5V1.5H15" stroke="#40a040" stroke-dasharray="1 1" fill="none"/><path d="M7 1V15" stroke="#e0c000" stroke-width="1.2"/></svg>
<svg style="left:1208px;top:91px;" width="16" height="16" viewBox="0 0 16 16"><path d="M1 14.5H7.5V2.5H15" stroke="#40a040" stroke-dasharray="1.2 1.2" fill="none" stroke-width="1.2"/></svg>
<svg style="left:1230px;top:91px;" width="16" height="16" viewBox="0 0 16 16"><path d="M1 14.5H7.5V2.5H15" stroke="#40a040" stroke-dasharray="1.2 1.2" fill="none" stroke-width="1.2"/><path d="M8.5 2V14" stroke="#e0e000" stroke-width="1.3"/></svg>
<div style="left:238px;top:117px;width:9px;height:675px;background:#cccccc;"></div>
<div style="left:238px;top:117px;width:1px;height:675px;background:#fff;"></div>
<div style="left:245px;top:117px;width:1px;height:675px;background:#a0a0a0;"></div>
<div style="left:246px;top:117px;width:1px;height:675px;background:#fff;"></div>
<div style="left:478px;top:117px;width:8px;height:675px;background:#cccccc;"></div>
<div style="left:478px;top:117px;width:1px;height:675px;background:#fff;"></div>
<div style="left:247px;top:452px;width:231px;height:6px;background:#cccccc;"></div>
<div style="left:0px;top:117px;width:238px;height:675px;background:#fff;border-top:1px solid #a0a0a0;border-right:1px solid #a0a0a0;"></div>
<div style="left:0px;top:119px;width:236px;height:18px;background:#f0f0f0;"></div>
<span style="left:19px;top:119px;height:18px;line-height:18px;font-size:11px;color:#000;white-space:pre;transform-origin:0 50%;transform:scaleX(0.9800);">sim - Default</span>
<div style="left:189px;top:121px;width:13px;height:13px;background:#f4f4f4;border-right:1px solid #707070;border-bottom:1px solid #707070;border-top:1px solid #fff;border-left:1px solid #fff;"></div>
<svg style="left:189px;top:121px;" width="14" height="14" viewBox="0 0 14 14"><path d="M6.5 2.5V10.5M2.5 6.5H10.5" stroke="#000" stroke-width="2" fill="none"/></svg>
<div style="left:205px;top:121px;width:13px;height:13px;background:#f4f4f4;border-right:1px solid #707070;border-bottom:1px solid #707070;border-top:1px solid #fff;border-left:1px solid #fff;"></div>
<svg style="left:205px;top:121px;" width="14" height="14" viewBox="0 0 14 14"><rect x="3" y="6" width="4.5" height="4.5" stroke="#000" stroke-width="1.2" fill="none"/><path d="M6 7L10.5 2.5M7 2.5H10.5V6" stroke="#000" stroke-width="1.3" fill="none"/></svg>
<div style="left:221px;top:121px;width:13px;height:13px;background:#f4f4f4;border-right:1px solid #707070;border-bottom:1px solid #707070;border-top:1px solid #fff;border-left:1px solid #fff;"></div>
<svg style="left:221px;top:121px;" width="14" height="14" viewBox="0 0 14 14"><path d="M3 3L10 10M10 3L3 10" stroke="#000" stroke-width="1.6" fill="none"/></svg>
<div style="left:85px;top:125px;width:39px;height:1px;background:#7a7a7a;"></div>
<div style="left:85px;top:126px;width:39px;height:1px;background:#fff;"></div>
<div style="left:85px;top:130px;width:39px;height:1px;background:#7a7a7a;"></div>
<div style="left:85px;top:131px;width:39px;height:1px;background:#fff;"></div>
<div style="left:123px;top:125px;width:1px;height:7px;background:#7a7a7a;"></div>
<div style="left:148px;top:125px;width:38px;height:1px;background:#7a7a7a;"></div>
<div style="left:148px;top:126px;width:38px;height:1px;background:#fff;"></div>
<div style="left:148px;top:130px;width:38px;height:1px;background:#7a7a7a;"></div>
<div style="left:148px;top:131px;width:38px;height:1px;background:#fff;"></div>
<div style="left:185px;top:125px;width:1px;height:7px;background:#7a7a7a;"></div>
<svg style="left:127px;top:125px;shape-rendering:crispEdges;" width="18" height="8" viewBox="0 0 18 8"><rect x="0" y="-1" width="1" height="1" fill="#fff"/><rect x="1" y="0" width="1" height="1" fill="#000"/><rect x="3" y="-1" width="1" height="1" fill="#fff"/><rect x="4" y="0" width="1" height="1" fill="#000"/><rect x="6" y="-1" width="1" height="1" fill="#fff"/><rect x="7" y="0" width="1" height="1" fill="#000"/><rect x="9" y="-1" width="1" height="1" fill="#fff"/><rect x="10" y="0" width="1" height="1" fill="#000"/><rect x="12" y="-1" width="1" height="1" fill="#fff"/><rect x="13" y="0" width="1" height="1" fill="#000"/><rect x="15" y="-1" width="1" height="1" fill="#fff"/><rect x="16" y="0" width="1" height="1" fill="#000"/><rect x="1" y="2" width="1" height="1" fill="#fff"/><rect x="2" y="3" width="1" height="1" fill="#000"/><rect x="4" y="2" width="1" height="1" fill="#fff"/><rect x="5" y="3" width="1" height="1" fill="#000"/><rect x="7" y="2" width="1" height="1" fill="#fff"/><rect x="8" y="3" width="1" height="1" fill="#000"/><rect x="10" y="2" width="1" height="1" fill="#fff"/><rect x="11" y="3" width="1" height="1" fill="#000"/><rect x="13" y="2" width="1" height="1" fill="#fff"/><rect x="14" y="3" width="1" height="1" fill="#000"/><rect x="16" y="2" width="1" height="1" fill="#fff"/><rect x="17" y="3" width="1" height="1" fill="#000"/><rect x="0" y="5" width="1" height="1" fill="#fff"/><rect x="1" y="6" width="1" height="1" fill="#000"/><rect x="3" y="5" width="1" height="1" fill="#fff"/><rect x="4" y="6" width="1" height="1" fill="#000"/><rect x="6" y="5" width="1" height="1" fill="#fff"/><rect x="7" y="6" width="1" height="1" fill="#000"/><rect x="9" y="5" width="1" height="1" fill="#fff"/><rect x="10" y="6" width="1" height="1" fill="#000"/><rect x="12" y="5" width="1" height="1" fill="#fff"/><rect x="13" y="6" width="1" height="1" fill="#000"/><rect x="15" y="5" width="1" height="1" fill="#fff"/><rect x="16" y="6" width="1" height="1" fill="#000"/></svg>
<svg style="left:0px;top:119px;" width="17" height="18" viewBox="0 0 17 18"><path d="M1 2.5H4M1 4.500H4M0 6.500H2.800M0 8.500H2M0 10.500H1.800" stroke="#9494d4" stroke-width="1"/><path d="M6.2 1.500H12.800L15.500 4.200L15.500 6.500L14.500 9L14.200 13.500H6.500L4.500 11.500L4.800 7.500L5.500 5Z" fill="#fff" stroke="#000" stroke-width="1.1"/><path d="M8.500 3.500H12.500M7.500 5.500H11.500M7.500 7.500H11.500M6.800 9.500H10.800M7.200 11.500H10.500" stroke="#2a2a80" stroke-width="1" stroke-dasharray="1.700 0.600"/><path d="M6 13.500H11" stroke="#000" stroke-width="1.200"/><path d="M3.500 9.800L7.200 13.500L3.500 17.200L-0.200 13.500Z" fill="#e01030" stroke="#000" stroke-width="1.100"/><rect x="3" y="13" width="1" height="1" fill="#000"/><path d="M13.500 11.700L16.300 14.500L13.500 17.300L10.700 14.500Z" fill="#e01030" stroke="#000" stroke-width="1.100"/></svg>
<div style="left:0px;top:137px;width:236px;height:1px;background:#a8a8a8;"></div>
<div style="left:0px;top:138px;width:12px;height:17px;background:#efefef;border-right:1px solid #808080;border-bottom:1px solid #808080;border-top:1px solid #fff;border-left:1px solid #fff;"></div>
<svg style="left:2px;top:143px;" width="9" height="8" viewBox="0 0 9 8"><path d="M0 0.500H8.500L4.500 7.500Z" fill="#383838"/><path d="M0 0.500H8.500" stroke="#606060" stroke-width="1"/></svg>
<div style="left:12px;top:138px;width:135px;height:17px;background:#efefef;border-right:1px solid #808080;border-bottom:1px solid #808080;border-top:1px solid #fff;border-left:1px solid #fff;"></div>
<span style="left:13.5px;top:139px;height:16px;line-height:16px;font-size:11px;color:#000;white-space:pre;transform-origin:0 50%;transform:scaleX(0.9981);">Instance</span>
<div style="left:147px;top:138px;width:71px;height:17px;background:#efefef;border-right:1px solid #808080;border-bottom:1px solid #808080;border-top:1px solid #fff;border-left:1px solid #fff;"></div>
<span style="left:148.5px;top:139px;height:16px;line-height:16px;font-size:11px;color:#000;white-space:pre;transform-origin:0 50%;transform:scaleX(0.9631);">Design unit</span>
<div style="left:218px;top:138px;width:18px;height:17px;background:#efefef;border-right:1px solid #808080;border-bottom:1px solid #808080;border-top:1px solid #fff;border-left:1px solid #fff;"></div>
<div style="left:218px;top:138px;width:18px;height:16px;overflow:hidden;"><span style="left:1.5px;top:0;font-size:11px;line-height:16px;color:#000;white-space:pre;">Desi</span></div>
<div style="left:0px;top:222px;width:236px;height:15px;background:#beccdc;"></div>
<div style="left:14px;top:165px;width:8px;height:1px;background:#a0a0a0;"></div>
<div style="left:28px;top:172px;width:1px;height:58px;background:#a0a0a0;"></div>
<div style="left:34px;top:181px;width:5px;height:1px;background:#a0a0a0;"></div>
<div style="left:28px;top:197px;width:11px;height:1px;background:#a0a0a0;"></div>
<div style="left:28px;top:213px;width:11px;height:1px;background:#a0a0a0;"></div>
<div style="left:28px;top:229px;width:11px;height:1px;background:#a0a0a0;"></div>
<div style="left:5px;top:161px;width:10px;height:10px;background:#fbfbfd;border:1px solid #b4b4c8;border-radius:2px;box-shadow:1px 1px 0 #d0d0dc;"></div>
<div style="left:8px;top:165.5px;width:5px;height:1px;background:#000;"></div>
<div style="left:23px;top:177px;width:10px;height:10px;background:#fbfbfd;border:1px solid #b4b4c8;border-radius:2px;box-shadow:1px 1px 0 #d0d0dc;"></div>
<div style="left:25.5px;top:181.5px;width:5px;height:1px;background:#000;"></div>
<div style="left:27.5px;top:179.5px;width:1px;height:5px;background:#000;"></div>
<svg style="left:22px;top:160px;" width="12" height="12" viewBox="0 0 12 12"><rect x="0" y="0" width="12" height="12" fill="#a8e4f6"/><path d="M0 12L2.5 9.5H9.5V2.5L12 0V12Z" fill="#0c5878"/><rect x="2.5" y="2.5" width="7" height="7" fill="#12b6ea"/><path d="M12 0L9.5 2.5" stroke="#000" stroke-width="1"/><path d="M0 12L2.5 9.5" stroke="#083848" stroke-width="1"/></svg>
<svg style="left:40px;top:176px;" width="12" height="12" viewBox="0 0 12 12"><rect x="0" y="0" width="12" height="12" fill="#a8e4f6"/><path d="M0 12L2.5 9.5H9.5V2.5L12 0V12Z" fill="#0c5878"/><rect x="2.5" y="2.5" width="7" height="7" fill="#12b6ea"/><path d="M12 0L9.5 2.5" stroke="#000" stroke-width="1"/><path d="M0 12L2.5 9.5" stroke="#083848" stroke-width="1"/></svg>
<span style="left:41px;top:157px;height:16px;line-height:16px;font-size:11px;color:#000;white-space:pre;transform-origin:0 50%;transform:scaleX(1.0119);">tb_mx4</span>
<span style="left:148.5px;top:157px;height:16px;line-height:16px;font-size:11px;color:#000;white-space:pre;transform-origin:0 50%;transform:scaleX(1.0119);">tb_mx4</span>
<div style="left:218px;top:157px;width:18px;height:16px;overflow:hidden;"><span style="left:1.5px;top:0;font-size:11px;line-height:16px;color:#000;white-space:pre;">Modu</span></div>
<span style="left:58.5px;top:173px;height:16px;line-height:16px;font-size:11px;color:#000;white-space:pre;transform-origin:0 50%;transform:scaleX(1.0791);">dut</span>
<span style="left:148.5px;top:173px;height:16px;line-height:16px;font-size:11px;color:#000;white-space:pre;transform-origin:0 50%;transform:scaleX(1.0106);">mx4</span>
<div style="left:218px;top:173px;width:18px;height:16px;overflow:hidden;"><span style="left:1.5px;top:0;font-size:11px;line-height:16px;color:#000;white-space:pre;">Modu</span></div>
<span style="left:58.5px;top:189px;height:16px;line-height:16px;font-size:11px;color:#000;white-space:pre;transform-origin:0 50%;transform:scaleX(1.0106);">#ALWAYS#15</span>
<span style="left:148.5px;top:189px;height:16px;line-height:16px;font-size:11px;color:#000;white-space:pre;transform-origin:0 50%;transform:scaleX(1.0119);">tb_mx4</span>
<div style="left:218px;top:189px;width:18px;height:16px;overflow:hidden;"><span style="left:1.5px;top:0;font-size:11px;line-height:16px;color:#000;white-space:pre;">Proc</span></div>
<span style="left:58.5px;top:205px;height:16px;line-height:16px;font-size:11px;color:#000;white-space:pre;transform-origin:0 50%;transform:scaleX(1.0106);">#ALWAYS#29</span>
<span style="left:148.5px;top:205px;height:16px;line-height:16px;font-size:11px;color:#000;white-space:pre;transform-origin:0 50%;transform:scaleX(1.0119);">tb_mx4</span>
<div style="left:218px;top:205px;width:18px;height:16px;overflow:hidden;"><span style="left:1.5px;top:0;font-size:11px;line-height:16px;color:#000;white-space:pre;">Proc</span></div>
<span style="left:58.5px;top:221px;height:16px;line-height:16px;font-size:11px;color:#000;white-space:pre;transform-origin:0 50%;transform:scaleX(1.0106);">#ALWAYS#35</span>
<span style="left:148.5px;top:221px;height:16px;line-height:16px;font-size:11px;color:#000;white-space:pre;transform-origin:0 50%;transform:scaleX(1.0119);">tb_mx4</span>
<div style="left:218px;top:221px;width:18px;height:16px;overflow:hidden;"><span style="left:1.5px;top:0;font-size:11px;line-height:16px;color:#000;white-space:pre;">Proc</span></div>
<span style="left:41px;top:237px;height:16px;line-height:16px;font-size:11px;color:#000;white-space:pre;transform-origin:0 50%;transform:scaleX(1.0208);">#vsim_capacity#</span>
<div style="left:218px;top:237px;width:18px;height:16px;overflow:hidden;"><span style="left:1.5px;top:0;font-size:11px;line-height:16px;color:#000;white-space:pre;">Capa</span></div>
<svg style="left:38.5px;top:190.5px;" width="14" height="14" viewBox="0 0 14 14"><circle cx="7" cy="7" r="6.4" fill="#1b86ac"/><path d="M0.6 7A6.4 6.4 0 0 1 13.4 7Q13 9 11 9.6Q6 11 1.2 9.6Q0.6 8.5 0.6 7Z" fill="#2cacd6"/><path d="M1.5 6A5.5 5.5 0 0 1 7 1.2Q9 1.2 10 2.4Q6 2.5 4.5 5Q3.5 7 1.8 7.4Z" fill="#6fd0ec"/><ellipse cx="4.2" cy="4" rx="1.5" ry="1.2" fill="#f4fdff"/></svg>
<svg style="left:38.5px;top:206.5px;" width="14" height="14" viewBox="0 0 14 14"><circle cx="7" cy="7" r="6.4" fill="#1b86ac"/><path d="M0.6 7A6.4 6.4 0 0 1 13.4 7Q13 9 11 9.6Q6 11 1.2 9.6Q0.6 8.5 0.6 7Z" fill="#2cacd6"/><path d="M1.5 6A5.5 5.5 0 0 1 7 1.2Q9 1.2 10 2.4Q6 2.5 4.5 5Q3.5 7 1.8 7.4Z" fill="#6fd0ec"/><ellipse cx="4.2" cy="4" rx="1.5" ry="1.2" fill="#f4fdff"/></svg>
<svg style="left:38.5px;top:222.5px;" width="14" height="14" viewBox="0 0 14 14"><circle cx="7" cy="7" r="6.4" fill="#1b86ac"/><path d="M0.6 7A6.4 6.4 0 0 1 13.4 7Q13 9 11 9.6Q6 11 1.2 9.6Q0.6 8.5 0.6 7Z" fill="#2cacd6"/><path d="M1.5 6A5.5 5.5 0 0 1 7 1.2Q9 1.2 10 2.4Q6 2.5 4.5 5Q3.5 7 1.8 7.4Z" fill="#6fd0ec"/><ellipse cx="4.2" cy="4" rx="1.5" ry="1.2" fill="#f4fdff"/></svg>
<svg style="left:20px;top:238px;" width="16" height="15" viewBox="0 0 16 15"><path d="M1 0V14H16" stroke="#2040c0" stroke-width="1.5" fill="none"/><path d="M3 5L7 2L12 8L15 3" stroke="#e03020" stroke-width="1.6" fill="none"/><path d="M3 3L8 7L14 1" stroke="#20a040" stroke-width="1.3" fill="none"/><path d="M3 12C6 8 10 8 14 12" stroke="#20a040" stroke-width="1.6" fill="none"/></svg>
<div style="left:0px;top:751px;width:236px;height:17px;background:#f7f7f7;"></div>
<div style="left:0px;top:751px;width:16px;height:17px;background:#f0f0f0;border-right:2px solid #848484;border-bottom:2px solid #848484;border-top:1px solid #fff;border-left:1px solid #fff;"></div>
<svg style="left:0px;top:751px;" width="17" height="17" viewBox="0 0 17 17"><path d="M9 4.5V12.5L5 8.5Z" fill="#000"/></svg>
<div style="left:220px;top:751px;width:16px;height:17px;background:#f0f0f0;border-right:2px solid #848484;border-bottom:2px solid #848484;border-top:1px solid #fff;border-left:1px solid #fff;"></div>
<svg style="left:220px;top:751px;" width="17" height="17" viewBox="0 0 17 17"><path d="M6 4.5V12.5L10 8.5Z" fill="#000"/></svg>
<div style="left:16px;top:751px;width:87px;height:17px;background:#f0f0f0;border-right:2px solid #848484;border-bottom:2px solid #848484;border-top:1px solid #fff;border-left:1px solid #fff;"></div>
<div style="left:0px;top:768px;width:238px;height:1px;background:#a0a0a0;"></div>
<div style="left:0px;top:769px;width:238px;height:23px;background:#cccccc;"></div>
<div style="left:237px;top:769px;width:2px;height:23px;background:#cccccc;"></div>
<div style="left:-3px;top:770px;width:57px;height:22px;background:#cbcbcb;border-right:1px solid #000;border-bottom:1px solid #000;border-top:1px solid #606060;"></div>
<div style="left:54px;top:770px;width:100px;height:22px;background:#cbcbcb;border-right:1px solid #000;border-bottom:1px solid #000;border-top:1px solid #606060;"></div>
<div style="left:154px;top:770px;width:60px;height:22px;background:#f0f0f0;border-right:1px solid #000;border-bottom:1px solid #000;"></div>
<span style="left:1px;top:771px;height:19px;line-height:19px;font-size:11px;color:#000;white-space:pre;transform-origin:0 50%;transform:scaleX(0.9815);">Library</span>
<span style="left:78px;top:771px;height:19px;line-height:19px;font-size:11px;color:#000;white-space:pre;transform-origin:0 50%;transform:scaleX(0.9684);">Memory List</span>
<span style="left:179px;top:771px;height:19px;line-height:19px;font-size:11px;color:#000;white-space:pre;transform-origin:0 50%;transform:scaleX(0.8768);">sim</span>
<svg style="left:41px;top:776px;" width="8" height="8" viewBox="0 0 8 8"><path d="M1 1L7 7M7 1L1 7" stroke="#a8a8a8" stroke-width="1.8"/></svg>
<svg style="left:142px;top:776px;" width="8" height="8" viewBox="0 0 8 8"><path d="M1 1L7 7M7 1L1 7" stroke="#a8a8a8" stroke-width="1.8"/></svg>
<svg style="left:201px;top:776px;" width="8" height="8" viewBox="0 0 8 8"><path d="M1 1L7 7M7 1L1 7" stroke="#a8a8a8" stroke-width="1.8"/></svg>
<svg style="left:60px;top:774px;" width="13" height="13" viewBox="0 0 13 13"><rect x="0" y="0" width="13" height="13" fill="#606060"/><rect x="1" y="0.8" width="3" height="2.2" fill="#e8e020"/><rect x="5" y="0.8" width="3" height="2.2" fill="#e02020"/><rect x="9" y="0.8" width="3" height="2.2" fill="#20c020"/><rect x="1" y="3.9" width="3" height="2.2" fill="#4060e0"/><rect x="5" y="3.9" width="3" height="2.2" fill="#fff"/><rect x="9" y="3.9" width="3" height="2.2" fill="#f08020"/><rect x="1" y="7" width="3" height="2.2" fill="#f08020"/><rect x="5" y="7" width="3" height="2.2" fill="#4060e0"/><rect x="9" y="7" width="3" height="2.2" fill="#e8e020"/><rect x="1" y="10.1" width="3" height="2.2" fill="#20c020"/><rect x="5" y="10.1" width="3" height="2.2" fill="#fff"/><rect x="9" y="10.1" width="3" height="2.2" fill="#e02020"/></svg>
<svg style="left:160px;top:771px;" width="17" height="18" viewBox="0 0 17 18"><path d="M1 2.5H4M1 4.500H4M0 6.500H2.800M0 8.500H2M0 10.500H1.800" stroke="#9494d4" stroke-width="1"/><path d="M6.2 1.500H12.800L15.500 4.200L15.500 6.500L14.500 9L14.200 13.500H6.500L4.500 11.500L4.800 7.500L5.500 5Z" fill="#fff" stroke="#000" stroke-width="1.1"/><path d="M8.500 3.500H12.500M7.500 5.500H11.500M7.500 7.500H11.500M6.800 9.500H10.800M7.200 11.500H10.500" stroke="#2a2a80" stroke-width="1" stroke-dasharray="1.700 0.600"/><path d="M6 13.500H11" stroke="#000" stroke-width="1.200"/><path d="M3.500 9.800L7.200 13.500L3.500 17.200L-0.200 13.500Z" fill="#e01030" stroke="#000" stroke-width="1.100"/><rect x="3" y="13" width="1" height="1" fill="#000"/><path d="M13.500 11.700L16.300 14.500L13.500 17.300L10.700 14.500Z" fill="#e01030" stroke="#000" stroke-width="1.100"/></svg>
<div style="left:217px;top:772px;width:11px;height:16px;background:#f0f0f0;border-right:1px solid #808080;border-bottom:1px solid #808080;border-top:1px solid #fff;border-left:1px solid #fff;"></div>
<div style="left:228px;top:772px;width:11px;height:16px;background:#f0f0f0;border-right:1px solid #808080;border-bottom:1px solid #808080;border-top:1px solid #fff;border-left:1px solid #fff;"></div>
<svg style="left:217px;top:772px;" width="22" height="16" viewBox="0 0 22 16"><path d="M7 3.5V11.5L3 7.5Z" fill="#000"/><path d="M14 4L17 7.5L14 11M17 4L20 7.5L17 11" stroke="#000" fill="none"/></svg>
<div style="left:247px;top:117px;width:231px;height:335px;background:#f0f0f0;border:1px solid #a0a0a0;"></div>
<div style="left:247px;top:118px;width:230px;height:1px;background:#fff;"></div>
<div style="left:248px;top:119px;width:228px;height:18px;background:#f0f0f0;"></div>
<span style="left:267.5px;top:119px;height:18px;line-height:18px;font-size:11px;color:#000;white-space:pre;transform-origin:0 50%;transform:scaleX(0.9922);">Objects</span>
<div style="left:429px;top:121px;width:13px;height:13px;background:#f4f4f4;border-right:1px solid #707070;border-bottom:1px solid #707070;border-top:1px solid #fff;border-left:1px solid #fff;"></div>
<svg style="left:429px;top:121px;" width="14" height="14" viewBox="0 0 14 14"><path d="M6.5 2.5V10.5M2.5 6.5H10.5" stroke="#000" stroke-width="2" fill="none"/></svg>
<div style="left:445px;top:121px;width:13px;height:13px;background:#f4f4f4;border-right:1px solid #707070;border-bottom:1px solid #707070;border-top:1px solid #fff;border-left:1px solid #fff;"></div>
<svg style="left:445px;top:121px;" width="14" height="14" viewBox="0 0 14 14"><rect x="3" y="6" width="4.5" height="4.5" stroke="#000" stroke-width="1.2" fill="none"/><path d="M6 7L10.5 2.5M7 2.5H10.5V6" stroke="#000" stroke-width="1.3" fill="none"/></svg>
<div style="left:461px;top:121px;width:13px;height:13px;background:#f4f4f4;border-right:1px solid #707070;border-bottom:1px solid #707070;border-top:1px solid #fff;border-left:1px solid #fff;"></div>
<svg style="left:461px;top:121px;" width="14" height="14" viewBox="0 0 14 14"><path d="M3 3L10 10M10 3L3 10" stroke="#000" stroke-width="1.6" fill="none"/></svg>
<div style="left:310px;top:125px;width:46px;height:1px;background:#7a7a7a;"></div>
<div style="left:310px;top:126px;width:46px;height:1px;background:#fff;"></div>
<div style="left:310px;top:130px;width:46px;height:1px;background:#7a7a7a;"></div>
<div style="left:310px;top:131px;width:46px;height:1px;background:#fff;"></div>
<div style="left:355px;top:125px;width:1px;height:7px;background:#7a7a7a;"></div>
<div style="left:380px;top:125px;width:46px;height:1px;background:#7a7a7a;"></div>
<div style="left:380px;top:126px;width:46px;height:1px;background:#fff;"></div>
<div style="left:380px;top:130px;width:46px;height:1px;background:#7a7a7a;"></div>
<div style="left:380px;top:131px;width:46px;height:1px;background:#fff;"></div>
<div style="left:425px;top:125px;width:1px;height:7px;background:#7a7a7a;"></div>
<svg style="left:359px;top:125px;shape-rendering:crispEdges;" width="18" height="8" viewBox="0 0 18 8"><rect x="0" y="-1" width="1" height="1" fill="#fff"/><rect x="1" y="0" width="1" height="1" fill="#000"/><rect x="3" y="-1" width="1" height="1" fill="#fff"/><rect x="4" y="0" width="1" height="1" fill="#000"/><rect x="6" y="-1" width="1" height="1" fill="#fff"/><rect x="7" y="0" width="1" height="1" fill="#000"/><rect x="9" y="-1" width="1" height="1" fill="#fff"/><rect x="10" y="0" width="1" height="1" fill="#000"/><rect x="12" y="-1" width="1" height="1" fill="#fff"/><rect x="13" y="0" width="1" height="1" fill="#000"/><rect x="15" y="-1" width="1" height="1" fill="#fff"/><rect x="16" y="0" width="1" height="1" fill="#000"/><rect x="1" y="2" width="1" height="1" fill="#fff"/><rect x="2" y="3" width="1" height="1" fill="#000"/><rect x="4" y="2" width="1" height="1" fill="#fff"/><rect x="5" y="3" width="1" height="1" fill="#000"/><rect x="7" y="2" width="1" height="1" fill="#fff"/><rect x="8" y="3" width="1" height="1" fill="#000"/><rect x="10" y="2" width="1" height="1" fill="#fff"/><rect x="11" y="3" width="1" height="1" fill="#000"/><rect x="13" y="2" width="1" height="1" fill="#fff"/><rect x="14" y="3" width="1" height="1" fill="#000"/><rect x="16" y="2" width="1" height="1" fill="#fff"/><rect x="17" y="3" width="1" height="1" fill="#000"/><rect x="0" y="5" width="1" height="1" fill="#fff"/><rect x="1" y="6" width="1" height="1" fill="#000"/><rect x="3" y="5" width="1" height="1" fill="#fff"/><rect x="4" y="6" width="1" height="1" fill="#000"/><rect x="6" y="5" width="1" height="1" fill="#fff"/><rect x="7" y="6" width="1" height="1" fill="#000"/><rect x="9" y="5" width="1" height="1" fill="#fff"/><rect x="10" y="6" width="1" height="1" fill="#000"/><rect x="12" y="5" width="1" height="1" fill="#fff"/><rect x="13" y="6" width="1" height="1" fill="#000"/><rect x="15" y="5" width="1" height="1" fill="#fff"/><rect x="16" y="6" width="1" height="1" fill="#000"/></svg>
<svg style="left:248px;top:120px;" width="17" height="17" viewBox="0 0 17 17"><path d="M1 6L6 1L9.5 3L5 7.5Z" fill="#d030f0"/><rect x="8" y="6.5" width="8" height="7" fill="#20a040"/><rect x="6" y="3.5" width="8" height="6.5" rx="3" fill="#00e8ff" stroke="#5090b0" stroke-width=".5"/><path d="M5.5 6.5L10.5 11.5L5.5 16.5L0.5 11.5Z" fill="#0050ff"/></svg>
<div style="left:248px;top:137px;width:228px;height:1px;background:#a8a8a8;"></div>
<div style="left:248px;top:138px;width:12px;height:17px;background:#efefef;border-right:1px solid #808080;border-bottom:1px solid #808080;border-top:1px solid #fff;border-left:1px solid #fff;"></div>
<svg style="left:250px;top:143px;" width="9" height="8" viewBox="0 0 9 8"><path d="M0 0.500H8.500L4.500 7.500Z" fill="#383838"/><path d="M0 0.500H8.500" stroke="#606060" stroke-width="1"/></svg>
<div style="left:260px;top:138px;width:216px;height:17px;background:#efefef;border-right:1px solid #808080;border-bottom:1px solid #808080;border-top:1px solid #fff;border-left:1px solid #fff;"></div>
<span style="left:261.5px;top:139px;height:16px;line-height:16px;font-size:11px;color:#000;white-space:pre;transform-origin:0 50%;transform:scaleX(0.9202);">Name</span>
<div style="left:346.5px;top:139px;width:118px;height:15px;background:#e4ece4;border:1px solid #b0b8b0;"></div>
<div style="left:363px;top:139px;width:1px;height:15px;background:#b0b8b0;"></div>
<div style="left:447px;top:139px;width:1px;height:15px;background:#b0b8b0;"></div>
<svg style="left:349px;top:140px;" width="14" height="13" viewBox="0 0 14 13"><path d="M1 1.5H3.5V11.5H7.5" stroke="#000" stroke-width="1.3" fill="none"/><path d="M13 5.5H7M9.5 2.5L6.5 5.5L9.5 8.5" stroke="#606060" stroke-width="1.5" fill="none"/></svg>
<svg style="left:449px;top:140px;" width="14" height="13" viewBox="0 0 14 13"><path d="M13 1.5H10.5V11.5H6.5" stroke="#000" stroke-width="1.3" fill="none"/><path d="M1 5.5H7M4.5 2.5L7.5 5.5L4.5 8.5" stroke="#606060" stroke-width="1.5" fill="none"/></svg>
<svg style="left:368px;top:141px;" width="10" height="10" viewBox="0 0 10 10"><circle cx="5" cy="5" r="4" fill="#00c000"/></svg>
<span style="left:381px;top:141px;height:15px;line-height:15px;font-size:12.5px;color:#000;white-space:pre;font-family:'Liberation Mono',monospace;transform-origin:0 50%;transform:scaleX(0.9257);">686198 ps</span>
<svg style="left:468px;top:141px;" width="6" height="11" viewBox="0 0 6 11"><path d="M1 0.5V9.5L5.5 5Z" fill="#000"/></svg>
<div style="left:248px;top:155px;width:228px;height:276px;background:#505a8c;"></div>
<svg style="left:268px;top:158px;" width="15" height="15" viewBox="0 0 15 15"><path d="M7.5 0L0 7.5H3.75L7.5 3.75Z" fill="#90dcf8"/><path d="M7.5 0L15 7.5H11.25L7.5 3.75Z" fill="#1a9ee0"/><path d="M0 7.5L7.5 15V11.25L3.75 7.5Z" fill="#1a9ee0"/><path d="M15 7.5L7.5 15V11.25L11.25 7.5Z" fill="#0a6ea6"/><path d="M7.5 3.75L11.25 7.5L7.5 11.25L3.75 7.5Z" fill="#10b8f0"/></svg>
<span style="left:287.5px;top:157px;height:16px;line-height:16px;font-size:11px;color:#f4f4f4;white-space:pre;transform-origin:0 50%;transform:scaleX(1.0043);">y_expected</span>
<span style="left:397px;top:157px;height:16px;line-height:16px;font-size:11px;color:#f4f4f4;white-space:pre;transform-origin:0 50%;transform:scaleX(1.0029);">-No D...</span>
<span style="left:440px;top:157px;height:16px;line-height:16px;font-size:11px;color:#f4f4f4;white-space:pre;transform-origin:0 50%;transform:scaleX(1.0381);">Regi...</span>
<svg style="left:268px;top:174px;" width="15" height="15" viewBox="0 0 15 15"><path d="M7.5 0L0 7.5H3.75L7.5 3.75Z" fill="#90dcf8"/><path d="M7.5 0L15 7.5H11.25L7.5 3.75Z" fill="#1a9ee0"/><path d="M0 7.5L7.5 15V11.25L3.75 7.5Z" fill="#1a9ee0"/><path d="M15 7.5L7.5 15V11.25L11.25 7.5Z" fill="#0a6ea6"/><path d="M7.5 3.75L11.25 7.5L7.5 11.25L3.75 7.5Z" fill="#10b8f0"/></svg>
<span style="left:287.5px;top:173px;height:16px;line-height:16px;font-size:11px;color:#f4f4f4;white-space:pre;transform-origin:0 50%;transform:scaleX(1.0909);">y</span>
<span style="left:397px;top:173px;height:16px;line-height:16px;font-size:11px;color:#f4f4f4;white-space:pre;transform-origin:0 50%;transform:scaleX(1.0029);">-No D...</span>
<span style="left:440px;top:173px;height:16px;line-height:16px;font-size:11px;color:#f4f4f4;white-space:pre;transform-origin:0 50%;transform:scaleX(1.0516);">Net</span>
<div style="left:263px;top:197px;width:6px;height:1px;background:#a0a0b0;"></div>
<div style="left:253px;top:193px;width:10px;height:10px;background:#fdfdff;border:1px solid #d4d4e4;border-radius:2px;box-shadow:1px 1px 0 #b0b0c0;"></div>
<div style="left:256px;top:198px;width:5px;height:1px;background:#000;"></div>
<div style="left:258px;top:196px;width:1px;height:5px;background:#000;"></div>
<svg style="left:268px;top:190px;" width="15" height="15" viewBox="0 0 15 15"><path d="M7.5 0L0 7.5H3.75L7.5 3.75Z" fill="#90dcf8"/><path d="M7.5 0L15 7.5H11.25L7.5 3.75Z" fill="#1a9ee0"/><path d="M0 7.5L7.5 15V11.25L3.75 7.5Z" fill="#1a9ee0"/><path d="M15 7.5L7.5 15V11.25L11.25 7.5Z" fill="#0a6ea6"/><path d="M7.5 3.75L11.25 7.5L7.5 11.25L3.75 7.5Z" fill="#10b8f0"/></svg>
<span style="left:287.5px;top:189px;height:16px;line-height:16px;font-size:11px;color:#f4f4f4;white-space:pre;transform-origin:0 50%;transform:scaleX(0.9932);">vectornum</span>
<span style="left:397px;top:189px;height:16px;line-height:16px;font-size:11px;color:#f4f4f4;white-space:pre;transform-origin:0 50%;transform:scaleX(1.0029);">-No D...</span>
<span style="left:440px;top:189px;height:16px;line-height:16px;font-size:11px;color:#f4f4f4;white-space:pre;transform-origin:0 50%;transform:scaleX(1.0112);">Pack...</span>
<div style="left:263px;top:213px;width:6px;height:1px;background:#a0a0b0;"></div>
<div style="left:253px;top:209px;width:10px;height:10px;background:#fdfdff;border:1px solid #d4d4e4;border-radius:2px;box-shadow:1px 1px 0 #b0b0c0;"></div>
<div style="left:256px;top:214px;width:5px;height:1px;background:#000;"></div>
<div style="left:258px;top:212px;width:1px;height:5px;background:#000;"></div>
<svg style="left:268px;top:206px;" width="15" height="15" viewBox="0 0 15 15"><path d="M7.5 0L0 7.5H3.75L7.5 3.75Z" fill="#90dcf8"/><path d="M7.5 0L15 7.5H11.25L7.5 3.75Z" fill="#1a9ee0"/><path d="M0 7.5L7.5 15V11.25L3.75 7.5Z" fill="#1a9ee0"/><path d="M15 7.5L7.5 15V11.25L11.25 7.5Z" fill="#0a6ea6"/><path d="M7.5 3.75L11.25 7.5L7.5 11.25L3.75 7.5Z" fill="#10b8f0"/></svg>
<span style="left:287.5px;top:205px;height:16px;line-height:16px;font-size:11px;color:#f4f4f4;white-space:pre;transform-origin:0 50%;transform:scaleX(1.0342);">testvectors</span>
<span style="left:397px;top:205px;height:16px;line-height:16px;font-size:11px;color:#f4f4f4;white-space:pre;transform-origin:0 50%;transform:scaleX(1.0153);">Not L...</span>
<span style="left:440px;top:205px;height:16px;line-height:16px;font-size:11px;color:#f4f4f4;white-space:pre;transform-origin:0 50%;transform:scaleX(1.1019);">Fixe...</span>
<div style="left:263px;top:229px;width:6px;height:1px;background:#a0a0b0;"></div>
<div style="left:253px;top:225px;width:10px;height:10px;background:#fdfdff;border:1px solid #d4d4e4;border-radius:2px;box-shadow:1px 1px 0 #b0b0c0;"></div>
<div style="left:256px;top:230px;width:5px;height:1px;background:#000;"></div>
<div style="left:258px;top:228px;width:1px;height:5px;background:#000;"></div>
<svg style="left:268px;top:222px;" width="15" height="15" viewBox="0 0 15 15"><path d="M7.5 0L0 7.5H3.75L7.5 3.75Z" fill="#90dcf8"/><path d="M7.5 0L15 7.5H11.25L7.5 3.75Z" fill="#1a9ee0"/><path d="M0 7.5L7.5 15V11.25L3.75 7.5Z" fill="#1a9ee0"/><path d="M15 7.5L7.5 15V11.25L11.25 7.5Z" fill="#0a6ea6"/><path d="M7.5 3.75L11.25 7.5L7.5 11.25L3.75 7.5Z" fill="#10b8f0"/></svg>
<span style="left:287.5px;top:221px;height:16px;line-height:16px;font-size:11px;color:#f4f4f4;white-space:pre;transform-origin:0 50%;transform:scaleX(0.9091);">s</span>
<span style="left:397px;top:221px;height:16px;line-height:16px;font-size:11px;color:#f4f4f4;white-space:pre;transform-origin:0 50%;transform:scaleX(1.0029);">-No D...</span>
<span style="left:440px;top:221px;height:16px;line-height:16px;font-size:11px;color:#f4f4f4;white-space:pre;transform-origin:0 50%;transform:scaleX(1.0112);">Pack...</span>
<svg style="left:268px;top:238px;" width="15" height="15" viewBox="0 0 15 15"><path d="M7.5 0L0 7.5H3.75L7.5 3.75Z" fill="#90dcf8"/><path d="M7.5 0L15 7.5H11.25L7.5 3.75Z" fill="#1a9ee0"/><path d="M0 7.5L7.5 15V11.25L3.75 7.5Z" fill="#1a9ee0"/><path d="M15 7.5L7.5 15V11.25L11.25 7.5Z" fill="#0a6ea6"/><path d="M7.5 3.75L11.25 7.5L7.5 11.25L3.75 7.5Z" fill="#10b8f0"/></svg>
<span style="left:287.5px;top:237px;height:16px;line-height:16px;font-size:11px;color:#f4f4f4;white-space:pre;transform-origin:0 50%;transform:scaleX(1.0019);">reset</span>
<span style="left:397px;top:237px;height:16px;line-height:16px;font-size:11px;color:#f4f4f4;white-space:pre;transform-origin:0 50%;transform:scaleX(1.0029);">-No D...</span>
<span style="left:440px;top:237px;height:16px;line-height:16px;font-size:11px;color:#f4f4f4;white-space:pre;transform-origin:0 50%;transform:scaleX(1.0381);">Regi...</span>
<div style="left:263px;top:261px;width:6px;height:1px;background:#a0a0b0;"></div>
<div style="left:253px;top:257px;width:10px;height:10px;background:#fdfdff;border:1px solid #d4d4e4;border-radius:2px;box-shadow:1px 1px 0 #b0b0c0;"></div>
<div style="left:256px;top:262px;width:5px;height:1px;background:#000;"></div>
<div style="left:258px;top:260px;width:1px;height:5px;background:#000;"></div>
<svg style="left:268px;top:254px;" width="15" height="15" viewBox="0 0 15 15"><path d="M7.5 0L0 7.5H3.75L7.5 3.75Z" fill="#90dcf8"/><path d="M7.5 0L15 7.5H11.25L7.5 3.75Z" fill="#1a9ee0"/><path d="M0 7.5L7.5 15V11.25L3.75 7.5Z" fill="#1a9ee0"/><path d="M15 7.5L7.5 15V11.25L11.25 7.5Z" fill="#0a6ea6"/><path d="M7.5 3.75L11.25 7.5L7.5 11.25L3.75 7.5Z" fill="#10b8f0"/></svg>
<span style="left:287.5px;top:253px;height:16px;line-height:16px;font-size:11px;color:#f4f4f4;white-space:pre;transform-origin:0 50%;transform:scaleX(1.0097);">errors</span>
<span style="left:397px;top:253px;height:16px;line-height:16px;font-size:11px;color:#f4f4f4;white-space:pre;transform-origin:0 50%;transform:scaleX(1.0029);">-No D...</span>
<span style="left:440px;top:253px;height:16px;line-height:16px;font-size:11px;color:#f4f4f4;white-space:pre;transform-origin:0 50%;transform:scaleX(1.0112);">Pack...</span>
<svg style="left:268px;top:270px;" width="15" height="15" viewBox="0 0 15 15"><path d="M7.5 0L0 7.5H3.75L7.5 3.75Z" fill="#90dcf8"/><path d="M7.5 0L15 7.5H11.25L7.5 3.75Z" fill="#1a9ee0"/><path d="M0 7.5L7.5 15V11.25L3.75 7.5Z" fill="#1a9ee0"/><path d="M15 7.5L7.5 15V11.25L11.25 7.5Z" fill="#0a6ea6"/><path d="M7.5 3.75L11.25 7.5L7.5 11.25L3.75 7.5Z" fill="#10b8f0"/></svg>
<span style="left:287.5px;top:269px;height:16px;line-height:16px;font-size:11px;color:#f4f4f4;white-space:pre;transform-origin:0 50%;transform:scaleX(0.9809);">d3</span>
<span style="left:397px;top:269px;height:16px;line-height:16px;font-size:11px;color:#f4f4f4;white-space:pre;transform-origin:0 50%;transform:scaleX(1.0029);">-No D...</span>
<span style="left:440px;top:269px;height:16px;line-height:16px;font-size:11px;color:#f4f4f4;white-space:pre;transform-origin:0 50%;transform:scaleX(1.0381);">Regi...</span>
<svg style="left:268px;top:286px;" width="15" height="15" viewBox="0 0 15 15"><path d="M7.5 0L0 7.5H3.75L7.5 3.75Z" fill="#90dcf8"/><path d="M7.5 0L15 7.5H11.25L7.5 3.75Z" fill="#1a9ee0"/><path d="M0 7.5L7.5 15V11.25L3.75 7.5Z" fill="#1a9ee0"/><path d="M15 7.5L7.5 15V11.25L11.25 7.5Z" fill="#0a6ea6"/><path d="M7.5 3.75L11.25 7.5L7.5 11.25L3.75 7.5Z" fill="#10b8f0"/></svg>
<span style="left:287.5px;top:285px;height:16px;line-height:16px;font-size:11px;color:#f4f4f4;white-space:pre;transform-origin:0 50%;transform:scaleX(0.9809);">d2</span>
<span style="left:397px;top:285px;height:16px;line-height:16px;font-size:11px;color:#f4f4f4;white-space:pre;transform-origin:0 50%;transform:scaleX(1.0029);">-No D...</span>
<span style="left:440px;top:285px;height:16px;line-height:16px;font-size:11px;color:#f4f4f4;white-space:pre;transform-origin:0 50%;transform:scaleX(1.0381);">Regi...</span>
<svg style="left:268px;top:302px;" width="15" height="15" viewBox="0 0 15 15"><path d="M7.5 0L0 7.5H3.75L7.5 3.75Z" fill="#90dcf8"/><path d="M7.5 0L15 7.5H11.25L7.5 3.75Z" fill="#1a9ee0"/><path d="M0 7.5L7.5 15V11.25L3.75 7.5Z" fill="#1a9ee0"/><path d="M15 7.5L7.5 15V11.25L11.25 7.5Z" fill="#0a6ea6"/><path d="M7.5 3.75L11.25 7.5L7.5 11.25L3.75 7.5Z" fill="#10b8f0"/></svg>
<span style="left:287.5px;top:301px;height:16px;line-height:16px;font-size:11px;color:#f4f4f4;white-space:pre;transform-origin:0 50%;transform:scaleX(0.9809);">d1</span>
<span style="left:397px;top:301px;height:16px;line-height:16px;font-size:11px;color:#f4f4f4;white-space:pre;transform-origin:0 50%;transform:scaleX(1.0029);">-No D...</span>
<span style="left:440px;top:301px;height:16px;line-height:16px;font-size:11px;color:#f4f4f4;white-space:pre;transform-origin:0 50%;transform:scaleX(1.0381);">Regi...</span>
<svg style="left:268px;top:318px;" width="15" height="15" viewBox="0 0 15 15"><path d="M7.5 0L0 7.5H3.75L7.5 3.75Z" fill="#90dcf8"/><path d="M7.5 0L15 7.5H11.25L7.5 3.75Z" fill="#1a9ee0"/><path d="M0 7.5L7.5 15V11.25L3.75 7.5Z" fill="#1a9ee0"/><path d="M15 7.5L7.5 15V11.25L11.25 7.5Z" fill="#0a6ea6"/><path d="M7.5 3.75L11.25 7.5L7.5 11.25L3.75 7.5Z" fill="#10b8f0"/></svg>
<span style="left:287.5px;top:317px;height:16px;line-height:16px;font-size:11px;color:#f4f4f4;white-space:pre;transform-origin:0 50%;transform:scaleX(0.9809);">d0</span>
<span style="left:397px;top:317px;height:16px;line-height:16px;font-size:11px;color:#f4f4f4;white-space:pre;transform-origin:0 50%;transform:scaleX(1.0029);">-No D...</span>
<span style="left:440px;top:317px;height:16px;line-height:16px;font-size:11px;color:#f4f4f4;white-space:pre;transform-origin:0 50%;transform:scaleX(1.0381);">Regi...</span>
<svg style="left:268px;top:334px;" width="15" height="15" viewBox="0 0 15 15"><path d="M7.5 0L0 7.5H3.75L7.5 3.75Z" fill="#90dcf8"/><path d="M7.5 0L15 7.5H11.25L7.5 3.75Z" fill="#1a9ee0"/><path d="M0 7.5L7.5 15V11.25L3.75 7.5Z" fill="#1a9ee0"/><path d="M15 7.5L7.5 15V11.25L11.25 7.5Z" fill="#0a6ea6"/><path d="M7.5 3.75L11.25 7.5L7.5 11.25L3.75 7.5Z" fill="#10b8f0"/></svg>
<span style="left:287.5px;top:333px;height:16px;line-height:16px;font-size:11px;color:#f4f4f4;white-space:pre;transform-origin:0 50%;transform:scaleX(0.8926);">clk</span>
<span style="left:397px;top:333px;height:16px;line-height:16px;font-size:11px;color:#f4f4f4;white-space:pre;transform-origin:0 50%;transform:scaleX(1.0029);">-No D...</span>
<span style="left:440px;top:333px;height:16px;line-height:16px;font-size:11px;color:#f4f4f4;white-space:pre;transform-origin:0 50%;transform:scaleX(1.0381);">Regi...</span>
<div style="left:248px;top:435px;width:228px;height:16px;background:#f7f7f7;"></div>
<div style="left:248px;top:435px;width:15px;height:16px;background:#f0f0f0;border-right:2px solid #848484;border-bottom:2px solid #848484;border-top:1px solid #fff;border-left:1px solid #fff;"></div>
<svg style="left:248px;top:435px;" width="16" height="16" viewBox="0 0 16 16"><path d="M9 4.5V12.5L5 8.5Z" fill="#000"/></svg>
<div style="left:461px;top:435px;width:15px;height:16px;background:#f0f0f0;border-right:2px solid #848484;border-bottom:2px solid #848484;border-top:1px solid #fff;border-left:1px solid #fff;"></div>
<svg style="left:461px;top:435px;" width="16" height="16" viewBox="0 0 16 16"><path d="M6 4.5V12.5L10 8.5Z" fill="#000"/></svg>
<div style="left:264px;top:435px;width:48px;height:16px;background:#f0f0f0;border-right:2px solid #848484;border-bottom:2px solid #848484;border-top:1px solid #fff;border-left:1px solid #fff;"></div>
<div style="left:247px;top:458px;width:231px;height:334px;background:#f0f0f0;border:1px solid #a0a0a0;"></div>
<div style="left:247px;top:459px;width:230px;height:1px;background:#fff;"></div>
<div style="left:248px;top:460px;width:228px;height:18px;background:#f0f0f0;"></div>
<span style="left:267.5px;top:460px;height:18px;line-height:18px;font-size:11px;color:#000;white-space:pre;transform-origin:0 50%;transform:scaleX(0.9652);">Processes (Active)</span>
<div style="left:429px;top:462px;width:13px;height:13px;background:#f4f4f4;border-right:1px solid #707070;border-bottom:1px solid #707070;border-top:1px solid #fff;border-left:1px solid #fff;"></div>
<svg style="left:429px;top:462px;" width="14" height="14" viewBox="0 0 14 14"><path d="M6.5 2.5V10.5M2.5 6.5H10.5" stroke="#000" stroke-width="2" fill="none"/></svg>
<div style="left:445px;top:462px;width:13px;height:13px;background:#f4f4f4;border-right:1px solid #707070;border-bottom:1px solid #707070;border-top:1px solid #fff;border-left:1px solid #fff;"></div>
<svg style="left:445px;top:462px;" width="14" height="14" viewBox="0 0 14 14"><rect x="3" y="6" width="4.5" height="4.5" stroke="#000" stroke-width="1.2" fill="none"/><path d="M6 7L10.5 2.5M7 2.5H10.5V6" stroke="#000" stroke-width="1.3" fill="none"/></svg>
<div style="left:461px;top:462px;width:13px;height:13px;background:#f4f4f4;border-right:1px solid #707070;border-bottom:1px solid #707070;border-top:1px solid #fff;border-left:1px solid #fff;"></div>
<svg style="left:461px;top:462px;" width="14" height="14" viewBox="0 0 14 14"><path d="M3 3L10 10M10 3L3 10" stroke="#000" stroke-width="1.6" fill="none"/></svg>
<div style="left:362px;top:466px;width:20px;height:1px;background:#7a7a7a;"></div>
<div style="left:362px;top:467px;width:20px;height:1px;background:#fff;"></div>
<div style="left:362px;top:471px;width:20px;height:1px;background:#7a7a7a;"></div>
<div style="left:362px;top:472px;width:20px;height:1px;background:#fff;"></div>
<div style="left:381px;top:466px;width:1px;height:7px;background:#7a7a7a;"></div>
<div style="left:406px;top:466px;width:20px;height:1px;background:#7a7a7a;"></div>
<div style="left:406px;top:467px;width:20px;height:1px;background:#fff;"></div>
<div style="left:406px;top:471px;width:20px;height:1px;background:#7a7a7a;"></div>
<div style="left:406px;top:472px;width:20px;height:1px;background:#fff;"></div>
<div style="left:425px;top:466px;width:1px;height:7px;background:#7a7a7a;"></div>
<svg style="left:385px;top:466px;shape-rendering:crispEdges;" width="18" height="8" viewBox="0 0 18 8"><rect x="0" y="-1" width="1" height="1" fill="#fff"/><rect x="1" y="0" width="1" height="1" fill="#000"/><rect x="3" y="-1" width="1" height="1" fill="#fff"/><rect x="4" y="0" width="1" height="1" fill="#000"/><rect x="6" y="-1" width="1" height="1" fill="#fff"/><rect x="7" y="0" width="1" height="1" fill="#000"/><rect x="9" y="-1" width="1" height="1" fill="#fff"/><rect x="10" y="0" width="1" height="1" fill="#000"/><rect x="12" y="-1" width="1" height="1" fill="#fff"/><rect x="13" y="0" width="1" height="1" fill="#000"/><rect x="15" y="-1" width="1" height="1" fill="#fff"/><rect x="16" y="0" width="1" height="1" fill="#000"/><rect x="1" y="2" width="1" height="1" fill="#fff"/><rect x="2" y="3" width="1" height="1" fill="#000"/><rect x="4" y="2" width="1" height="1" fill="#fff"/><rect x="5" y="3" width="1" height="1" fill="#000"/><rect x="7" y="2" width="1" height="1" fill="#fff"/><rect x="8" y="3" width="1" height="1" fill="#000"/><rect x="10" y="2" width="1" height="1" fill="#fff"/><rect x="11" y="3" width="1" height="1" fill="#000"/><rect x="13" y="2" width="1" height="1" fill="#fff"/><rect x="14" y="3" width="1" height="1" fill="#000"/><rect x="16" y="2" width="1" height="1" fill="#fff"/><rect x="17" y="3" width="1" height="1" fill="#000"/><rect x="0" y="5" width="1" height="1" fill="#fff"/><rect x="1" y="6" width="1" height="1" fill="#000"/><rect x="3" y="5" width="1" height="1" fill="#fff"/><rect x="4" y="6" width="1" height="1" fill="#000"/><rect x="6" y="5" width="1" height="1" fill="#fff"/><rect x="7" y="6" width="1" height="1" fill="#000"/><rect x="9" y="5" width="1" height="1" fill="#fff"/><rect x="10" y="6" width="1" height="1" fill="#000"/><rect x="12" y="5" width="1" height="1" fill="#fff"/><rect x="13" y="6" width="1" height="1" fill="#000"/><rect x="15" y="5" width="1" height="1" fill="#fff"/><rect x="16" y="6" width="1" height="1" fill="#000"/></svg>
<svg style="left:247.5px;top:460.5px;" width="17" height="17" viewBox="0 0 17 17"><rect x="-1.8" y="-8" width="3.6" height="4" fill="#4878b0" transform="translate(8.5 8.5) rotate(0)"/><rect x="-1.8" y="-8" width="3.6" height="4" fill="#4878b0" transform="translate(8.5 8.5) rotate(45)"/><rect x="-1.8" y="-8" width="3.6" height="4" fill="#4878b0" transform="translate(8.5 8.5) rotate(90)"/><rect x="-1.8" y="-8" width="3.6" height="4" fill="#4878b0" transform="translate(8.5 8.5) rotate(135)"/><rect x="-1.8" y="-8" width="3.6" height="4" fill="#4878b0" transform="translate(8.5 8.5) rotate(180)"/><rect x="-1.8" y="-8" width="3.6" height="4" fill="#4878b0" transform="translate(8.5 8.5) rotate(225)"/><rect x="-1.8" y="-8" width="3.6" height="4" fill="#4878b0" transform="translate(8.5 8.5) rotate(270)"/><rect x="-1.8" y="-8" width="3.6" height="4" fill="#4878b0" transform="translate(8.5 8.5) rotate(315)"/><circle cx="8.5" cy="8.5" r="5.6" fill="#5888c0"/><circle cx="8.5" cy="8.5" r="2.4" fill="#f0f0f0"/><circle cx="8.5" cy="8.5" r="6" fill="none" stroke="#305888" stroke-width=".6"/></svg>
<div style="left:248px;top:478px;width:228px;height:1px;background:#a8a8a8;"></div>
<div style="left:248px;top:479px;width:12px;height:17px;background:#efefef;border-right:1px solid #808080;border-bottom:1px solid #808080;border-top:1px solid #fff;border-left:1px solid #fff;"></div>
<svg style="left:250px;top:484px;" width="9" height="8" viewBox="0 0 9 8"><path d="M0 0.500H8.500L4.500 7.500Z" fill="#383838"/><path d="M0 0.500H8.500" stroke="#606060" stroke-width="1"/></svg>
<div style="left:260px;top:479px;width:134px;height:17px;background:#efefef;border-right:1px solid #808080;border-bottom:1px solid #808080;border-top:1px solid #fff;border-left:1px solid #fff;"></div>
<span style="left:261.5px;top:480px;height:16px;line-height:16px;font-size:11px;color:#000;white-space:pre;transform-origin:0 50%;transform:scaleX(0.9202);">Name</span>
<div style="left:394px;top:479px;width:82px;height:17px;background:#efefef;border-right:1px solid #808080;border-bottom:1px solid #808080;border-top:1px solid #fff;border-left:1px solid #fff;"></div>
<span style="left:396.5px;top:480px;height:16px;line-height:16px;font-size:11px;color:#000;white-space:pre;transform-origin:0 50%;transform:scaleX(1.0187);">Type (filtered)</span>
<div style="left:248px;top:496px;width:228px;height:276px;background:#8ca4ff;"></div>
<div style="left:248px;top:499px;width:228px;height:15px;background:#beccdc;"></div>
<svg style="left:268.5px;top:499.5px;" width="14" height="14" viewBox="0 0 14 14"><circle cx="7" cy="7" r="6.4" fill="#1b86ac"/><path d="M0.6 7A6.4 6.4 0 0 1 13.4 7Q13 9 11 9.6Q6 11 1.2 9.6Q0.6 8.5 0.6 7Z" fill="#2cacd6"/><path d="M1.5 6A5.5 5.5 0 0 1 7 1.2Q9 1.2 10 2.4Q6 2.5 4.5 5Q3.5 7 1.8 7.4Z" fill="#6fd0ec"/><ellipse cx="4.2" cy="4" rx="1.5" ry="1.2" fill="#f4fdff"/></svg>
<span style="left:288.5px;top:499px;height:15px;line-height:15px;font-size:11px;color:#000;white-space:pre;transform-origin:0 50%;transform:scaleX(0.9959);">#ALWAYS#35</span>
<span style="left:396.5px;top:499px;height:15px;line-height:15px;font-size:11px;color:#000;white-space:pre;transform-origin:0 50%;transform:scaleX(0.9615);">Always</span>
<div style="left:248px;top:775px;width:228px;height:16px;background:#f7f7f7;"></div>
<div style="left:248px;top:775px;width:15px;height:16px;background:#f0f0f0;border-right:2px solid #848484;border-bottom:2px solid #848484;border-top:1px solid #fff;border-left:1px solid #fff;"></div>
<svg style="left:248px;top:775px;" width="16" height="16" viewBox="0 0 16 16"><path d="M9 4.5V12.5L5 8.5Z" fill="#000"/></svg>
<div style="left:461px;top:775px;width:15px;height:16px;background:#f0f0f0;border-right:2px solid #848484;border-bottom:2px solid #848484;border-top:1px solid #fff;border-left:1px solid #fff;"></div>
<svg style="left:461px;top:775px;" width="16" height="16" viewBox="0 0 16 16"><path d="M6 4.5V12.5L10 8.5Z" fill="#000"/></svg>
<div style="left:264px;top:775px;width:48px;height:16px;background:#f0f0f0;border-right:2px solid #848484;border-bottom:2px solid #848484;border-top:1px solid #fff;border-left:1px solid #fff;"></div>
<div style="left:485px;top:117px;width:1431px;height:674px;background:#fff;border-left:1px solid #a0a0a0;border-top:1px solid #a0a0a0;"></div>
<div style="left:487px;top:119px;width:1427px;height:18px;background:#99b4d1;"></div>
<span style="left:507px;top:119px;height:18px;line-height:18px;font-size:11px;color:#000;white-space:pre;transform-origin:0 50%;transform:scaleX(1.0230);">Wave - Default</span>
<div style="left:1867px;top:121px;width:13px;height:13px;background:#f4f4f4;border-right:1px solid #707070;border-bottom:1px solid #707070;border-top:1px solid #fff;border-left:1px solid #fff;"></div>
<svg style="left:1867px;top:121px;" width="14" height="14" viewBox="0 0 14 14"><path d="M6.5 2.5V10.5M2.5 6.5H10.5" stroke="#000" stroke-width="2" fill="none"/></svg>
<div style="left:1883px;top:121px;width:13px;height:13px;background:#f4f4f4;border-right:1px solid #707070;border-bottom:1px solid #707070;border-top:1px solid #fff;border-left:1px solid #fff;"></div>
<svg style="left:1883px;top:121px;" width="14" height="14" viewBox="0 0 14 14"><rect x="3" y="6" width="4.5" height="4.5" stroke="#000" stroke-width="1.2" fill="none"/><path d="M6 7L10.5 2.5M7 2.5H10.5V6" stroke="#000" stroke-width="1.3" fill="none"/></svg>
<div style="left:1899px;top:121px;width:13px;height:13px;background:#f4f4f4;border-right:1px solid #707070;border-bottom:1px solid #707070;border-top:1px solid #fff;border-left:1px solid #fff;"></div>
<svg style="left:1899px;top:121px;" width="14" height="14" viewBox="0 0 14 14"><path d="M3 3L10 10M10 3L3 10" stroke="#000" stroke-width="1.6" fill="none"/></svg>
<div style="left:588px;top:124px;width:626px;height:2px;background:#cfefff;"></div>
<div style="left:588px;top:126px;width:626px;height:1px;background:#000;"></div>
<div style="left:588px;top:129px;width:626px;height:2px;background:#cfefff;"></div>
<div style="left:588px;top:131px;width:626px;height:1px;background:#000;"></div>
<div style="left:1238px;top:124px;width:626px;height:2px;background:#cfefff;"></div>
<div style="left:1238px;top:126px;width:626px;height:1px;background:#000;"></div>
<div style="left:1238px;top:129px;width:626px;height:2px;background:#cfefff;"></div>
<div style="left:1238px;top:131px;width:626px;height:1px;background:#000;"></div>
<svg style="left:1217px;top:125px;shape-rendering:crispEdges;" width="18" height="8" viewBox="0 0 18 8"><rect x="0" y="-1" width="1" height="1" fill="#fff"/><rect x="1" y="0" width="1" height="1" fill="#000"/><rect x="3" y="-1" width="1" height="1" fill="#fff"/><rect x="4" y="0" width="1" height="1" fill="#000"/><rect x="6" y="-1" width="1" height="1" fill="#fff"/><rect x="7" y="0" width="1" height="1" fill="#000"/><rect x="9" y="-1" width="1" height="1" fill="#fff"/><rect x="10" y="0" width="1" height="1" fill="#000"/><rect x="12" y="-1" width="1" height="1" fill="#fff"/><rect x="13" y="0" width="1" height="1" fill="#000"/><rect x="15" y="-1" width="1" height="1" fill="#fff"/><rect x="16" y="0" width="1" height="1" fill="#000"/><rect x="1" y="2" width="1" height="1" fill="#fff"/><rect x="2" y="3" width="1" height="1" fill="#000"/><rect x="4" y="2" width="1" height="1" fill="#fff"/><rect x="5" y="3" width="1" height="1" fill="#000"/><rect x="7" y="2" width="1" height="1" fill="#fff"/><rect x="8" y="3" width="1" height="1" fill="#000"/><rect x="10" y="2" width="1" height="1" fill="#fff"/><rect x="11" y="3" width="1" height="1" fill="#000"/><rect x="13" y="2" width="1" height="1" fill="#fff"/><rect x="14" y="3" width="1" height="1" fill="#000"/><rect x="16" y="2" width="1" height="1" fill="#fff"/><rect x="17" y="3" width="1" height="1" fill="#000"/><rect x="0" y="5" width="1" height="1" fill="#fff"/><rect x="1" y="6" width="1" height="1" fill="#000"/><rect x="3" y="5" width="1" height="1" fill="#fff"/><rect x="4" y="6" width="1" height="1" fill="#000"/><rect x="6" y="5" width="1" height="1" fill="#fff"/><rect x="7" y="6" width="1" height="1" fill="#000"/><rect x="9" y="5" width="1" height="1" fill="#fff"/><rect x="10" y="6" width="1" height="1" fill="#000"/><rect x="12" y="5" width="1" height="1" fill="#fff"/><rect x="13" y="6" width="1" height="1" fill="#000"/><rect x="15" y="5" width="1" height="1" fill="#fff"/><rect x="16" y="6" width="1" height="1" fill="#000"/></svg>
<div style="left:489px;top:121px;width:14px;height:14px;background:#000;border-top:1px solid #fff;border-left:1px solid #fff;"></div>
<div style="left:490px;top:122px;width:12px;height:3px;background:#f4f4f4;"></div>
<svg style="left:490px;top:125px;" width="12" height="9" viewBox="0 0 12 9"><path d="M0 2.5H3.5V5.5H7.5V2.5H12" stroke="#00d040" fill="none"/><path d="M0 6.5H5.5V8H7" stroke="#00b030" fill="none"/><path d="M7 7.5H12" stroke="#3030ff" fill="none"/><path d="M4.5 0V9" stroke="#30e0e0" fill="none"/></svg>
<div style="left:488px;top:139px;width:160px;height:18px;background:#808080;"></div>
<div style="left:650px;top:139px;width:101px;height:18px;background:#808080;"></div>
<div style="left:753px;top:139px;width:1140px;height:19px;background:#000;"></div>
<span style="right:1174px;top:140px;height:17px;line-height:17px;font-size:11px;color:#f4f4f4;white-space:pre;">Msgs</span>
<svg style="left:498px;top:140px;" width="20" height="16" viewBox="0 0 20 16"><path d="M1.5 6.5L7 1L10.5 3.5L6 7.5Z" fill="#d030f0"/><rect x="9" y="6" width="8" height="7" fill="#20a040"/><rect x="7" y="3.5" width="7" height="6" rx="2.5" fill="#00e8ff"/><path d="M6 6L11 11L6 16L1 11Z" fill="#0050ff"/></svg>
<svg style="left:518px;top:148px;" width="8" height="5" viewBox="0 0 8 5"><path d="M0.5 1H6.5L3.5 4Z" fill="#000"/></svg>
<div style="left:488px;top:160px;width:9px;height:566px;background:#fff;"></div>
<div style="left:497px;top:160px;width:151px;height:566px;background:#808080;"></div>
<div style="left:650px;top:160px;width:101px;height:566px;background:#808080;"></div>
<div style="left:753px;top:160px;width:1140px;height:566px;background:#000;"></div>
<svg style="left:517px;top:163px;" width="15" height="15" viewBox="0 0 15 15"><path d="M7.5 0L0 7.5H3.75L7.5 3.75Z" fill="#90dcf8"/><path d="M7.5 0L15 7.5H11.25L7.5 3.75Z" fill="#1a9ee0"/><path d="M0 7.5L7.5 15V11.25L3.75 7.5Z" fill="#1a9ee0"/><path d="M15 7.5L7.5 15V11.25L11.25 7.5Z" fill="#0a6ea6"/><path d="M7.5 3.75L11.25 7.5L7.5 11.25L3.75 7.5Z" fill="#10b8f0"/></svg>
<span style="left:537px;top:162px;height:17px;line-height:17px;font-size:11px;color:#f4f4f4;white-space:pre;transform-origin:0 50%;transform:scaleX(1.0067);">/tb_mx4/clk</span>
<span style="left:652px;top:162px;height:17px;line-height:17px;font-size:11px;color:#f4f4f4;white-space:pre;transform-origin:0 50%;transform:scaleX(0.9753);">-No Data-</span>
<svg style="left:517px;top:180px;" width="15" height="15" viewBox="0 0 15 15"><path d="M7.5 0L0 7.5H3.75L7.5 3.75Z" fill="#90dcf8"/><path d="M7.5 0L15 7.5H11.25L7.5 3.75Z" fill="#1a9ee0"/><path d="M0 7.5L7.5 15V11.25L3.75 7.5Z" fill="#1a9ee0"/><path d="M15 7.5L7.5 15V11.25L11.25 7.5Z" fill="#0a6ea6"/><path d="M7.5 3.75L11.25 7.5L7.5 11.25L3.75 7.5Z" fill="#10b8f0"/></svg>
<span style="left:537px;top:179px;height:17px;line-height:17px;font-size:11px;color:#f4f4f4;white-space:pre;transform-origin:0 50%;transform:scaleX(1.0355);">/tb_mx4/reset</span>
<span style="left:652px;top:179px;height:17px;line-height:17px;font-size:11px;color:#f4f4f4;white-space:pre;transform-origin:0 50%;transform:scaleX(0.9753);">-No Data-</span>
<div style="left:512px;top:204px;width:6px;height:1px;background:#d8d8d8;"></div>
<div style="left:502px;top:200px;width:10px;height:10px;background:#fdfdff;border:1px solid #d4d4e4;border-radius:2px;box-shadow:1px 1px 0 #b0b0c0;"></div>
<div style="left:505px;top:205px;width:5px;height:1px;background:#000;"></div>
<div style="left:507px;top:203px;width:1px;height:5px;background:#000;"></div>
<svg style="left:517px;top:197px;" width="15" height="15" viewBox="0 0 15 15"><path d="M7.5 0L0 7.5H3.75L7.5 3.75Z" fill="#90dcf8"/><path d="M7.5 0L15 7.5H11.25L7.5 3.75Z" fill="#1a9ee0"/><path d="M0 7.5L7.5 15V11.25L3.75 7.5Z" fill="#1a9ee0"/><path d="M15 7.5L7.5 15V11.25L11.25 7.5Z" fill="#0a6ea6"/><path d="M7.5 3.75L11.25 7.5L7.5 11.25L3.75 7.5Z" fill="#10b8f0"/></svg>
<span style="left:537px;top:196px;height:17px;line-height:17px;font-size:11px;color:#f4f4f4;white-space:pre;transform-origin:0 50%;transform:scaleX(1.0277);">/tb_mx4/s</span>
<span style="left:652px;top:196px;height:17px;line-height:17px;font-size:11px;color:#f4f4f4;white-space:pre;transform-origin:0 50%;transform:scaleX(0.9753);">-No Data-</span>
<svg style="left:517px;top:214px;" width="15" height="15" viewBox="0 0 15 15"><path d="M7.5 0L0 7.5H3.75L7.5 3.75Z" fill="#90dcf8"/><path d="M7.5 0L15 7.5H11.25L7.5 3.75Z" fill="#1a9ee0"/><path d="M0 7.5L7.5 15V11.25L3.75 7.5Z" fill="#1a9ee0"/><path d="M15 7.5L7.5 15V11.25L11.25 7.5Z" fill="#0a6ea6"/><path d="M7.5 3.75L11.25 7.5L7.5 11.25L3.75 7.5Z" fill="#10b8f0"/></svg>
<span style="left:537px;top:213px;height:17px;line-height:17px;font-size:11px;color:#f4f4f4;white-space:pre;transform-origin:0 50%;transform:scaleX(1.0291);">/tb_mx4/d0</span>
<span style="left:652px;top:213px;height:17px;line-height:17px;font-size:11px;color:#f4f4f4;white-space:pre;transform-origin:0 50%;transform:scaleX(0.9753);">-No Data-</span>
<svg style="left:517px;top:231px;" width="15" height="15" viewBox="0 0 15 15"><path d="M7.5 0L0 7.5H3.75L7.5 3.75Z" fill="#90dcf8"/><path d="M7.5 0L15 7.5H11.25L7.5 3.75Z" fill="#1a9ee0"/><path d="M0 7.5L7.5 15V11.25L3.75 7.5Z" fill="#1a9ee0"/><path d="M15 7.5L7.5 15V11.25L11.25 7.5Z" fill="#0a6ea6"/><path d="M7.5 3.75L11.25 7.5L7.5 11.25L3.75 7.5Z" fill="#10b8f0"/></svg>
<span style="left:537px;top:230px;height:17px;line-height:17px;font-size:11px;color:#f4f4f4;white-space:pre;transform-origin:0 50%;transform:scaleX(1.0291);">/tb_mx4/d1</span>
<span style="left:652px;top:230px;height:17px;line-height:17px;font-size:11px;color:#f4f4f4;white-space:pre;transform-origin:0 50%;transform:scaleX(0.9753);">-No Data-</span>
<svg style="left:517px;top:248px;" width="15" height="15" viewBox="0 0 15 15"><path d="M7.5 0L0 7.5H3.75L7.5 3.75Z" fill="#90dcf8"/><path d="M7.5 0L15 7.5H11.25L7.5 3.75Z" fill="#1a9ee0"/><path d="M0 7.5L7.5 15V11.25L3.75 7.5Z" fill="#1a9ee0"/><path d="M15 7.5L7.5 15V11.25L11.25 7.5Z" fill="#0a6ea6"/><path d="M7.5 3.75L11.25 7.5L7.5 11.25L3.75 7.5Z" fill="#10b8f0"/></svg>
<span style="left:537px;top:247px;height:17px;line-height:17px;font-size:11px;color:#f4f4f4;white-space:pre;transform-origin:0 50%;transform:scaleX(1.0291);">/tb_mx4/d2</span>
<span style="left:652px;top:247px;height:17px;line-height:17px;font-size:11px;color:#f4f4f4;white-space:pre;transform-origin:0 50%;transform:scaleX(0.9753);">-No Data-</span>
<svg style="left:517px;top:265px;" width="15" height="15" viewBox="0 0 15 15"><path d="M7.5 0L0 7.5H3.75L7.5 3.75Z" fill="#90dcf8"/><path d="M7.5 0L15 7.5H11.25L7.5 3.75Z" fill="#1a9ee0"/><path d="M0 7.5L7.5 15V11.25L3.75 7.5Z" fill="#1a9ee0"/><path d="M15 7.5L7.5 15V11.25L11.25 7.5Z" fill="#0a6ea6"/><path d="M7.5 3.75L11.25 7.5L7.5 11.25L3.75 7.5Z" fill="#10b8f0"/></svg>
<span style="left:537px;top:264px;height:17px;line-height:17px;font-size:11px;color:#f4f4f4;white-space:pre;transform-origin:0 50%;transform:scaleX(1.0291);">/tb_mx4/d3</span>
<span style="left:652px;top:264px;height:17px;line-height:17px;font-size:11px;color:#f4f4f4;white-space:pre;transform-origin:0 50%;transform:scaleX(0.9753);">-No Data-</span>
<svg style="left:517px;top:282px;" width="15" height="15" viewBox="0 0 15 15"><path d="M7.5 0L0 7.5H3.75L7.5 3.75Z" fill="#90dcf8"/><path d="M7.5 0L15 7.5H11.25L7.5 3.75Z" fill="#1a9ee0"/><path d="M0 7.5L7.5 15V11.25L3.75 7.5Z" fill="#1a9ee0"/><path d="M15 7.5L7.5 15V11.25L11.25 7.5Z" fill="#0a6ea6"/><path d="M7.5 3.75L11.25 7.5L7.5 11.25L3.75 7.5Z" fill="#10b8f0"/></svg>
<span style="left:537px;top:281px;height:17px;line-height:17px;font-size:11px;color:#f4f4f4;white-space:pre;transform-origin:0 50%;transform:scaleX(1.0159);">/tb_mx4/y_expected</span>
<span style="left:652px;top:281px;height:17px;line-height:17px;font-size:11px;color:#f4f4f4;white-space:pre;transform-origin:0 50%;transform:scaleX(0.9753);">-No Data-</span>
<svg style="left:517px;top:299px;" width="15" height="15" viewBox="0 0 15 15"><path d="M7.5 0L0 7.5H3.75L7.5 3.75Z" fill="#90dcf8"/><path d="M7.5 0L15 7.5H11.25L7.5 3.75Z" fill="#1a9ee0"/><path d="M0 7.5L7.5 15V11.25L3.75 7.5Z" fill="#1a9ee0"/><path d="M15 7.5L7.5 15V11.25L11.25 7.5Z" fill="#0a6ea6"/><path d="M7.5 3.75L11.25 7.5L7.5 11.25L3.75 7.5Z" fill="#10b8f0"/></svg>
<span style="left:537px;top:298px;height:17px;line-height:17px;font-size:11px;color:#f4f4f4;white-space:pre;transform-origin:0 50%;transform:scaleX(1.0486);">/tb_mx4/y</span>
<span style="left:652px;top:298px;height:17px;line-height:17px;font-size:11px;color:#f4f4f4;white-space:pre;transform-origin:0 50%;transform:scaleX(0.9753);">-No Data-</span>
<div style="left:512px;top:323px;width:6px;height:1px;background:#d8d8d8;"></div>
<div style="left:502px;top:319px;width:10px;height:10px;background:#fdfdff;border:1px solid #d4d4e4;border-radius:2px;box-shadow:1px 1px 0 #b0b0c0;"></div>
<div style="left:505px;top:324px;width:5px;height:1px;background:#000;"></div>
<div style="left:507px;top:322px;width:1px;height:5px;background:#000;"></div>
<svg style="left:517px;top:316px;" width="15" height="15" viewBox="0 0 15 15"><path d="M7.5 0L0 7.5H3.75L7.5 3.75Z" fill="#90dcf8"/><path d="M7.5 0L15 7.5H11.25L7.5 3.75Z" fill="#1a9ee0"/><path d="M0 7.5L7.5 15V11.25L3.75 7.5Z" fill="#1a9ee0"/><path d="M15 7.5L7.5 15V11.25L11.25 7.5Z" fill="#0a6ea6"/><path d="M7.5 3.75L11.25 7.5L7.5 11.25L3.75 7.5Z" fill="#10b8f0"/></svg>
<span style="left:537px;top:315px;height:17px;line-height:17px;font-size:11px;color:#f4f4f4;white-space:pre;transform-origin:0 50%;transform:scaleX(1.0157);">/tb_mx4/vectornum</span>
<span style="left:652px;top:315px;height:17px;line-height:17px;font-size:11px;color:#f4f4f4;white-space:pre;transform-origin:0 50%;transform:scaleX(0.9753);">-No Data-</span>
<div style="left:512px;top:340px;width:6px;height:1px;background:#d8d8d8;"></div>
<div style="left:502px;top:336px;width:10px;height:10px;background:#fdfdff;border:1px solid #d4d4e4;border-radius:2px;box-shadow:1px 1px 0 #b0b0c0;"></div>
<div style="left:505px;top:341px;width:5px;height:1px;background:#000;"></div>
<div style="left:507px;top:339px;width:1px;height:5px;background:#000;"></div>
<svg style="left:517px;top:333px;" width="15" height="15" viewBox="0 0 15 15"><path d="M7.5 0L0 7.5H3.75L7.5 3.75Z" fill="#90dcf8"/><path d="M7.5 0L15 7.5H11.25L7.5 3.75Z" fill="#1a9ee0"/><path d="M0 7.5L7.5 15V11.25L3.75 7.5Z" fill="#1a9ee0"/><path d="M15 7.5L7.5 15V11.25L11.25 7.5Z" fill="#0a6ea6"/><path d="M7.5 3.75L11.25 7.5L7.5 11.25L3.75 7.5Z" fill="#10b8f0"/></svg>
<span style="left:537px;top:332px;height:17px;line-height:17px;font-size:11px;color:#f4f4f4;white-space:pre;transform-origin:0 50%;transform:scaleX(1.0296);">/tb_mx4/errors</span>
<span style="left:652px;top:332px;height:17px;line-height:17px;font-size:11px;color:#f4f4f4;white-space:pre;transform-origin:0 50%;transform:scaleX(0.9753);">-No Data-</span>
<div style="left:500px;top:349px;width:143px;height:1px;background:#000;"></div>
<div style="left:652px;top:349px;width:94px;height:1px;background:#000;"></div>
<svg style="left:497px;top:345px;" width="6" height="9" viewBox="0 0 6 9"><path d="M1.5 1L5 4.5L1.5 8Z" fill="none" stroke="#000" stroke-width="1"/></svg>
<div style="left:488px;top:728px;width:160px;height:39px;background:#808080;"></div>
<div style="left:650px;top:728px;width:101px;height:39px;background:#808080;"></div>
<div style="left:537px;top:750px;width:111px;height:17px;background:#fff;"></div>
<div style="left:650px;top:750px;width:101px;height:17px;background:#fff;"></div>
<span style="right:1281.5px;top:730px;height:18px;line-height:18px;font-size:11px;color:#f4f4f4;white-space:pre;">Now</span>
<span style="right:1178px;top:730px;height:18px;line-height:18px;font-size:11px;color:#f4f4f4;white-space:pre;">665000 ps</span>
<span style="right:1281.5px;top:751px;height:17px;line-height:17px;font-size:11px;color:#000;white-space:pre;">Cursor 1</span>
<span style="right:1178px;top:751px;height:17px;line-height:17px;font-size:11px;color:#000;white-space:pre;">686198 ps</span>
<svg style="left:497px;top:732px;" width="40" height="14" viewBox="0 0 40 14"><path d="M1 9L4 3L6 6L8 2L11 9Z" fill="#505860"/><path d="M1 11.5H11" stroke="#4080e0" stroke-width="1.4"/><rect x="13" y="2" width="10" height="9" fill="#5a8ad0"/><path d="M14.5 5H21.5M14.5 8H19" stroke="#e8f0ff"/><circle cx="30" cy="7" r="5" fill="#48b838"/><path d="M27.5 7H32.5M30 4.5V9.5" stroke="#fff" stroke-width="1.6"/></svg>
<svg style="left:497px;top:752px;" width="40" height="16" viewBox="0 0 40 16"><rect x="4" y="6" width="10" height="8" fill="#f0b020"/><path d="M6 6V4A3 3 0 0 1 12 4" stroke="#a0a0a0" stroke-width="1.5" fill="none"/><path d="M17 13L23 6" stroke="#5080e0" stroke-width="3" stroke-linecap="round"/><path d="M22 5L25 2" stroke="#c0d0f0" stroke-width="2.5"/><circle cx="34" cy="6.5" r="5" fill="#e84040"/><path d="M31.5 6.5H36.5" stroke="#fff" stroke-width="1.8"/></svg>
<div style="left:753px;top:728px;width:1140px;height:39px;background:#000;"></div>
<div style="left:756px;top:750px;width:1134px;height:1px;background:#909090;"></div>
<div style="left:488px;top:770px;width:9px;height:18px;background:#808080;"></div>
<div style="left:497px;top:771px;width:150px;height:16px;background:#f7f7f7;"></div>
<div style="left:497px;top:771px;width:15px;height:16px;background:#f0f0f0;border-right:2px solid #848484;border-bottom:2px solid #848484;border-top:1px solid #fff;border-left:1px solid #fff;"></div>
<svg style="left:497px;top:771px;" width="16" height="16" viewBox="0 0 16 16"><path d="M9 4.5V12.5L5 8.5Z" fill="#a0a0a0"/></svg>
<div style="left:632px;top:771px;width:15px;height:16px;background:#f0f0f0;border-right:2px solid #848484;border-bottom:2px solid #848484;border-top:1px solid #fff;border-left:1px solid #fff;"></div>
<svg style="left:632px;top:771px;" width="16" height="16" viewBox="0 0 16 16"><path d="M6 4.5V12.5L10 8.5Z" fill="#a0a0a0"/></svg>
<div style="left:650px;top:771px;width:101px;height:16px;background:#f7f7f7;"></div>
<div style="left:650px;top:771px;width:15px;height:16px;background:#f0f0f0;border-right:2px solid #848484;border-bottom:2px solid #848484;border-top:1px solid #fff;border-left:1px solid #fff;"></div>
<svg style="left:650px;top:771px;" width="16" height="16" viewBox="0 0 16 16"><path d="M9 4.5V12.5L5 8.5Z" fill="#000"/></svg>
<div style="left:736px;top:771px;width:15px;height:16px;background:#f0f0f0;border-right:2px solid #848484;border-bottom:2px solid #848484;border-top:1px solid #fff;border-left:1px solid #fff;"></div>
<svg style="left:736px;top:771px;" width="16" height="16" viewBox="0 0 16 16"><path d="M6 4.5V12.5L10 8.5Z" fill="#000"/></svg>
<div style="left:666px;top:771px;width:34px;height:16px;background:#f0f0f0;border-right:2px solid #848484;border-bottom:2px solid #848484;border-top:1px solid #fff;border-left:1px solid #fff;"></div>
<div style="left:753px;top:771px;width:1138px;height:16px;background:#f7f7f7;"></div>
<div style="left:753px;top:771px;width:15px;height:16px;background:#f0f0f0;border-right:2px solid #848484;border-bottom:2px solid #848484;border-top:1px solid #fff;border-left:1px solid #fff;"></div>
<svg style="left:753px;top:771px;" width="16" height="16" viewBox="0 0 16 16"><path d="M9 4.5V12.5L5 8.5Z" fill="#000"/></svg>
<div style="left:1876px;top:771px;width:15px;height:16px;background:#f0f0f0;border-right:2px solid #848484;border-bottom:2px solid #848484;border-top:1px solid #fff;border-left:1px solid #fff;"></div>
<svg style="left:1876px;top:771px;" width="16" height="16" viewBox="0 0 16 16"><path d="M6 4.5V12.5L10 8.5Z" fill="#000"/></svg>
<div style="left:769px;top:771px;width:1107px;height:16px;background:#f0f0f0;border-right:2px solid #848484;border-bottom:2px solid #848484;border-top:1px solid #fff;border-left:1px solid #fff;"></div>
<div style="left:1837px;top:772px;width:1px;height:15px;background:#ffd700;"></div>
<div style="left:1914px;top:119px;width:1px;height:18px;background:#99b4d1;"></div>
<div style="left:1915px;top:117px;width:1px;height:674px;background:#a8a8a8;"></div>
<div style="left:1894px;top:138px;width:1px;height:652px;background:#a0a0a0;"></div>
<div style="left:1896px;top:139px;width:17px;height:18px;background:#808080;"></div>
<div style="left:1896px;top:160px;width:17px;height:565px;background:#f7f7f7;"></div>
<div style="left:1896px;top:160px;width:17px;height:16px;background:#f0f0f0;border-right:2px solid #848484;border-bottom:2px solid #848484;border-top:1px solid #fff;border-left:1px solid #fff;"></div>
<svg style="left:1896px;top:160px;" width="17" height="17" viewBox="0 0 17 17"><path d="M4.5 10H12.5L8.5 6Z" fill="#000"/></svg>
<div style="left:1896px;top:709px;width:17px;height:16px;background:#f0f0f0;border-right:2px solid #848484;border-bottom:2px solid #848484;border-top:1px solid #fff;border-left:1px solid #fff;"></div>
<svg style="left:1896px;top:709px;" width="17" height="17" viewBox="0 0 17 17"><path d="M4.5 6H12.5L8.5 10Z" fill="#000"/></svg>
<div style="left:1896px;top:177px;width:17px;height:531px;background:#f0f0f0;border-right:2px solid #848484;border-bottom:2px solid #848484;border-top:1px solid #fff;border-left:1px solid #fff;"></div>
<div style="left:1896px;top:728px;width:17px;height:39px;background:#808080;"></div>
<div style="left:1896px;top:770px;width:17px;height:18px;background:#808080;"></div>
<svg style="left:0;top:0;" width="1919" height="800" viewBox="0 0 1919 800" shape-rendering="crispEdges"><path d="M835.5 160V725 M915.5 160V725 M995.5 160V725 M1074.5 160V725 M1154.5 160V725 M1234.5 160V725 M1314.5 160V725 M1393.5 160V725 M1473.5 160V725 M1553.5 160V725 M1632.5 160V725 M1712.5 160V725 M1792.5 160V725 M1872.5 160V725" stroke="#808080" stroke-width="1" fill="none"/><path d="M756.5 165 V171 M757 164.5 H763 M763.5 165 V177 M763 176.5 H772 M771.5 165 V177 M772 164.5 H779 M779.5 165 V177 M779 176.5 H788 M787.5 165 V177 M788 164.5 H795 M795.5 165 V177 M795 176.5 H804 M803.5 165 V177 M804 164.5 H811 M811.5 165 V177 M811 176.5 H820 M819.5 165 V177 M820 164.5 H827 M827.5 165 V177 M827 176.5 H836 M835.5 165 V177 M836 164.5 H843 M843.5 165 V177 M843 176.5 H852 M851.5 165 V177 M852 164.5 H859 M859.5 165 V177 M859 176.5 H868 M867.5 165 V177 M868 164.5 H875 M875.5 165 V177 M875 176.5 H884 M883.5 165 V177 M884 164.5 H891 M891.5 165 V177 M891 176.5 H900 M899.5 165 V177 M900 164.5 H907 M907.5 165 V177 M907 176.5 H916 M915.5 165 V177 M916 164.5 H923 M923.5 165 V177 M923 176.5 H932 M931.5 165 V177 M932 164.5 H939 M939.5 165 V177 M939 176.5 H948 M947.5 165 V177 M948 164.5 H955 M955.5 165 V177 M955 176.5 H964 M963.5 165 V177 M964 164.5 H971 M971.5 165 V177 M971 176.5 H980 M979.5 165 V177 M980 164.5 H987 M987.5 165 V177 M987 176.5 H996 M995.5 165 V177 M996 164.5 H1003 M1003.5 165 V177 M1003 176.5 H1012 M1011.5 165 V177 M1012 164.5 H1019 M1019.5 165 V177 M1019 176.5 H1028 M1027.5 165 V177 M1028 164.5 H1035 M1035.5 165 V177 M1035 176.5 H1044 M1043.5 165 V177 M1044 164.5 H1050 M1050.5 165 V177 M1050 176.5 H1059 M1058.5 165 V177 M1059 164.5 H1066 M1066.5 165 V177 M1066 176.5 H1075 M1074.5 165 V177 M1075 164.5 H1082 M1082.5 165 V177 M1082 176.5 H1091 M1090.5 165 V177 M1091 164.5 H1098 M1098.5 165 V177 M1098 176.5 H1107 M1106.5 165 V177 M1107 164.5 H1114 M1114.5 165 V177 M1114 176.5 H1123 M1122.5 165 V177 M1123 164.5 H1130 M1130.5 165 V177 M1130 176.5 H1139 M1138.5 165 V177 M1139 164.5 H1146 M1146.5 165 V177 M1146 176.5 H1155 M1154.5 165 V177 M1155 164.5 H1162 M1162.5 165 V177 M1162 176.5 H1171 M1170.5 165 V177 M1171 164.5 H1178 M1178.5 165 V177 M1178 176.5 H1187 M1186.5 165 V177 M1187 164.5 H1194 M1194.5 165 V177 M1194 176.5 H1203 M1202.5 165 V177 M1203 164.5 H1210 M1210.5 165 V177 M1210 176.5 H1219 M1218.5 165 V177 M1219 164.5 H1226 M1226.5 165 V177 M1226 176.5 H1235 M1234.5 165 V177 M1235 164.5 H1242 M1242.5 165 V177 M1242 176.5 H1251 M1250.5 165 V177 M1251 164.5 H1258 M1258.5 165 V177 M1258 176.5 H1267 M1266.5 165 V177 M1267 164.5 H1274 M1274.5 165 V177 M1274 176.5 H1283 M1282.5 165 V177 M1283 164.5 H1290 M1290.5 165 V177 M1290 176.5 H1299 M1298.5 165 V177 M1299 164.5 H1306 M1306.5 165 V177 M1306 176.5 H1315 M1314.5 165 V177 M1315 164.5 H1322 M1322.5 165 V177 M1322 176.5 H1331 M1330.5 165 V177 M1331 164.5 H1337 M1337.5 165 V177 M1337 176.5 H1346 M1345.5 165 V177 M1346 164.5 H1353 M1353.5 165 V177 M1353 176.5 H1362 M1361.5 165 V177 M1362 164.5 H1369 M1369.5 165 V177 M1369 176.5 H1378 M1377.5 165 V177 M1378 164.5 H1385 M1385.5 165 V177 M1385 176.5 H1394 M1393.5 165 V177 M1394 164.5 H1401 M1401.5 165 V177 M1401 176.5 H1410 M1409.5 165 V177 M1410 164.5 H1417 M1417.5 165 V177 M1417 176.5 H1426 M1425.5 165 V177 M1426 164.5 H1433 M1433.5 165 V177 M1433 176.5 H1442 M1441.5 165 V177 M1442 164.5 H1449 M1449.5 165 V177 M1449 176.5 H1458 M1457.5 165 V177 M1458 164.5 H1465 M1465.5 165 V177 M1465 176.5 H1474 M1473.5 165 V177 M1474 164.5 H1481 M1481.5 165 V177 M1481 176.5 H1490 M1489.5 165 V177 M1490 164.5 H1497 M1497.5 165 V177 M1497 176.5 H1506 M1505.5 165 V177 M1506 164.5 H1513 M1513.5 165 V177 M1513 176.5 H1522 M1521.5 165 V177 M1522 164.5 H1529 M1529.5 165 V177 M1529 176.5 H1538 M1537.5 165 V177 M1538 164.5 H1545 M1545.5 165 V177 M1545 176.5 H1554 M1553.5 165 V177 M1554 164.5 H1561 M1561.5 165 V177 M1561 176.5 H1570 M1569.5 165 V177 M1570 164.5 H1577 M1577.5 165 V177 M1577 176.5 H1586 M1585.5 165 V177 M1586 164.5 H1593 M1593.5 165 V177 M1593 176.5 H1602 M1601.5 165 V177 M1602 164.5 H1609 M1609.5 165 V177 M1609 176.5 H1618 M1617.5 165 V177 M1618 164.5 H1625 M1625.5 165 V177 M1625 176.5 H1633 M1632.5 165 V177 M1633 164.5 H1640 M1640.5 165 V177 M1640 176.5 H1649 M1648.5 165 V177 M1649 164.5 H1656 M1656.5 165 V177 M1656 176.5 H1665 M1664.5 165 V177 M1665 164.5 H1672 M1672.5 165 V177 M1672 176.5 H1681 M1680.5 165 V177 M1681 164.5 H1688 M1688.5 165 V177 M1688 176.5 H1697 M1696.5 165 V177 M1697 164.5 H1704 M1704.5 165 V177 M1704 176.5 H1713 M1712.5 165 V177 M1713 164.5 H1720 M1720.5 165 V177 M1720 176.5 H1729 M1728.5 165 V177 M1729 164.5 H1736 M1736.5 165 V177 M1736 176.5 H1745 M1744.5 165 V177 M1745 164.5 H1752 M1752.5 165 V177 M1752 176.5 H1761 M1760.5 165 V177 M1761 164.5 H1768 M1768.5 165 V177 M1768 176.5 H1777 M1776.5 165 V177 M1777 164.5 H1784 M1784.5 165 V177 M1784 176.5 H1793 M1792.5 165 V177 M1793 164.5 H1800 M1800.5 165 V177 M1800 176.5 H1809 M1808.5 165 V177 M1809 164.5 H1816 M1816.5 165 V177 M1816 176.5 H1816" stroke="#00ff00" stroke-width="1" fill="none"/><path d="M756.5 182 V188 M757 181.5 H799 M799.5 182 V194 M799 193.5 H1816" stroke="#00ff00" stroke-width="1" fill="none"/><path d="M757.5 221 V228 M757 227.5 H1316 M1315.5 216 V228 M1316 215.5 H1816" stroke="#00ff00" stroke-width="1" fill="none"/><path d="M757.5 238 V245 M757 244.5 H1061 M1060.5 233 V245 M1061 232.5 H1315 M1315.5 233 V245 M1315 244.5 H1571 M1570.5 233 V245 M1571 232.5 H1816" stroke="#00ff00" stroke-width="1" fill="none"/><path d="M757.5 255 V262 M757 261.5 H933 M932.5 250 V262 M933 249.5 H1060 M1060.5 250 V262 M1060 261.5 H1189 M1188.5 250 V262 M1189 249.5 H1315 M1315.5 250 V262 M1315 261.5 H1444 M1443.5 250 V262 M1444 249.5 H1570 M1570.5 250 V262 M1570 261.5 H1699 M1698.5 250 V262 M1699 249.5 H1816" stroke="#00ff00" stroke-width="1" fill="none"/><path d="M757.5 272 V279 M757 278.5 H870 M869.5 267 V279 M870 266.5 H932 M932.5 267 V279 M932 278.5 H997 M996.5 267 V279 M997 266.5 H1060 M1060.5 267 V279 M1060 278.5 H1125 M1124.5 267 V279 M1125 266.5 H1188 M1188.5 267 V279 M1188 278.5 H1252 M1251.5 267 V279 M1252 266.5 H1315 M1315.5 267 V279 M1315 278.5 H1380 M1379.5 267 V279 M1380 266.5 H1443 M1443.5 267 V279 M1443 278.5 H1508 M1507.5 267 V279 M1508 266.5 H1570 M1570.5 267 V279 M1570 278.5 H1635 M1634.5 267 V279 M1635 266.5 H1698 M1698.5 267 V279 M1698 278.5 H1763 M1762.5 267 V279 M1763 266.5 H1816" stroke="#00ff00" stroke-width="1" fill="none"/><path d="M757.5 289 V296 M757 295.5 H918 M917.5 284 V296 M918 283.5 H932 M932.5 284 V296 M932 295.5 H965 M964.5 284 V296 M965 283.5 H980 M980.5 284 V296 M980 295.5 H1029 M1028.5 284 V296 M1029 283.5 H1060 M1060.5 284 V296 M1060 295.5 H1077 M1076.5 284 V296 M1077 283.5 H1092 M1092.5 284 V296 M1092 295.5 H1141 M1140.5 284 V296 M1141 283.5 H1156 M1156.5 284 V296 M1156 295.5 H1173 M1172.5 284 V296 M1173 283.5 H1188 M1188.5 284 V296 M1188 295.5 H1205 M1204.5 284 V296 M1205 283.5 H1235 M1235.5 284 V296 M1235 295.5 H1268 M1267.5 284 V296 M1268 283.5 H1331 M1331.5 284 V296 M1331 295.5 H1380 M1379.5 284 V296 M1380 283.5 H1395 M1395.5 284 V296 M1395 295.5 H1428 M1427.5 284 V296 M1428 283.5 H1459 M1459.5 284 V296 M1459 295.5 H1476 M1475.5 284 V296 M1476 283.5 H1491 M1491.5 284 V296 M1491 295.5 H1508 M1507.5 284 V296 M1508 283.5 H1522 M1522.5 284 V296 M1522 295.5 H1539 M1538.5 284 V296 M1539 283.5 H1602 M1602.5 284 V296 M1602 295.5 H1635 M1634.5 284 V296 M1635 283.5 H1666 M1666.5 284 V296 M1666 295.5 H1683 M1682.5 284 V296 M1683 283.5 H1746 M1746.5 284 V296 M1746 295.5 H1763 M1762.5 284 V296 M1763 283.5 H1816" stroke="#00ff00" stroke-width="1" fill="none"/><path d="M757.5 306 V313 M757 312.5 H918 M917.5 301 V313 M918 300.5 H932 M932.5 301 V313 M932 312.5 H965 M964.5 301 V313 M965 300.5 H980 M980.5 301 V313 M980 312.5 H1029 M1028.5 301 V313 M1029 300.5 H1060 M1060.5 301 V313 M1060 312.5 H1077 M1076.5 301 V313 M1077 300.5 H1092 M1092.5 301 V313 M1092 312.5 H1141 M1140.5 301 V313 M1141 300.5 H1156 M1156.5 301 V313 M1156 312.5 H1173 M1172.5 301 V313 M1173 300.5 H1188 M1188.5 301 V313 M1188 312.5 H1205 M1204.5 301 V313 M1205 300.5 H1235 M1235.5 301 V313 M1235 312.5 H1268 M1267.5 301 V313 M1268 300.5 H1331 M1331.5 301 V313 M1331 312.5 H1380 M1379.5 301 V313 M1380 300.5 H1395 M1395.5 301 V313 M1395 312.5 H1428 M1427.5 301 V313 M1428 300.5 H1459 M1459.5 301 V313 M1459 312.5 H1476 M1475.5 301 V313 M1476 300.5 H1491 M1491.5 301 V313 M1491 312.5 H1508 M1507.5 301 V313 M1508 300.5 H1522 M1522.5 301 V313 M1522 312.5 H1539 M1538.5 301 V313 M1539 300.5 H1602 M1602.5 301 V313 M1602 312.5 H1635 M1634.5 301 V313 M1635 300.5 H1666 M1666.5 301 V313 M1666 312.5 H1683 M1682.5 301 V313 M1683 300.5 H1746 M1746.5 301 V313 M1746 312.5 H1763 M1762.5 301 V313 M1763 300.5 H1816" stroke="#00ff00" stroke-width="1" fill="none"/><path d="M901 312.5 H902 M1124 312.5 H1125 M1219 300.5 H1220 M1251 312.5 H1252 M1283 300.5 H1284 M1315 300.5 H1316 M1411 312.5 H1412 M1443 300.5 H1444 M1570 300.5 H1571 M1698 300.5 H1699 M1730 300.5 H1731 M1794 300.5 H1795" stroke="#000000" stroke-width="1" fill="none"/><path d="M757.5 201 V208 M758.5 198 V202 M758.5 207 V211 M758 198.5 H821 M758 210.5 H821 M820.5 198 V202 M820.5 207 V211 M821.5 201 V208 M822.5 198 V202 M822.5 207 V211 M822 198.5 H837 M822 210.5 H837 M836.5 198 V202 M836.5 207 V211 M837.5 201 V208 M838.5 198 V202 M838.5 207 V211 M838 198.5 H853 M838 210.5 H853 M852.5 198 V202 M852.5 207 V211 M853.5 201 V208 M854.5 198 V202 M854.5 207 V211 M854 198.5 H869 M854 210.5 H869 M868.5 198 V202 M868.5 207 V211 M869.5 201 V208 M870.5 198 V202 M870.5 207 V211 M870 198.5 H885 M870 210.5 H885 M884.5 198 V202 M884.5 207 V211 M885.5 201 V208 M886.5 198 V202 M886.5 207 V211 M886 198.5 H901 M886 210.5 H901 M900.5 198 V202 M900.5 207 V211 M901.5 201 V208 M902.5 198 V202 M902.5 207 V211 M902 198.5 H917 M902 210.5 H917 M916.5 198 V202 M916.5 207 V211 M917.5 201 V208 M918.5 198 V202 M918.5 207 V211 M918 198.5 H932 M918 210.5 H932 M931.5 198 V202 M931.5 207 V211 M932.5 201 V208 M933.5 198 V202 M933.5 207 V211 M933 198.5 H948 M933 210.5 H948 M947.5 198 V202 M947.5 207 V211 M948.5 201 V208 M949.5 198 V202 M949.5 207 V211 M949 198.5 H964 M949 210.5 H964 M963.5 198 V202 M963.5 207 V211 M964.5 201 V208 M965.5 198 V202 M965.5 207 V211 M965 198.5 H980 M965 210.5 H980 M979.5 198 V202 M979.5 207 V211 M980.5 201 V208 M981.5 198 V202 M981.5 207 V211 M981 198.5 H996 M981 210.5 H996 M995.5 198 V202 M995.5 207 V211 M996.5 201 V208 M997.5 198 V202 M997.5 207 V211 M997 198.5 H1012 M997 210.5 H1012 M1011.5 198 V202 M1011.5 207 V211 M1012.5 201 V208 M1013.5 198 V202 M1013.5 207 V211 M1013 198.5 H1028 M1013 210.5 H1028 M1027.5 198 V202 M1027.5 207 V211 M1028.5 201 V208 M1029.5 198 V202 M1029.5 207 V211 M1029 198.5 H1044 M1029 210.5 H1044 M1043.5 198 V202 M1043.5 207 V211 M1044.5 201 V208 M1045.5 198 V202 M1045.5 207 V211 M1045 198.5 H1060 M1045 210.5 H1060 M1059.5 198 V202 M1059.5 207 V211 M1060.5 201 V208 M1061.5 198 V202 M1061.5 207 V211 M1061 198.5 H1076 M1061 210.5 H1076 M1075.5 198 V202 M1075.5 207 V211 M1076.5 201 V208 M1077.5 198 V202 M1077.5 207 V211 M1077 198.5 H1092 M1077 210.5 H1092 M1091.5 198 V202 M1091.5 207 V211 M1092.5 201 V208 M1093.5 198 V202 M1093.5 207 V211 M1093 198.5 H1108 M1093 210.5 H1108 M1107.5 198 V202 M1107.5 207 V211 M1108.5 201 V208 M1109.5 198 V202 M1109.5 207 V211 M1109 198.5 H1124 M1109 210.5 H1124 M1123.5 198 V202 M1123.5 207 V211 M1124.5 201 V208 M1125.5 198 V202 M1125.5 207 V211 M1125 198.5 H1140 M1125 210.5 H1140 M1139.5 198 V202 M1139.5 207 V211 M1140.5 201 V208 M1141.5 198 V202 M1141.5 207 V211 M1141 198.5 H1156 M1141 210.5 H1156 M1155.5 198 V202 M1155.5 207 V211 M1156.5 201 V208 M1157.5 198 V202 M1157.5 207 V211 M1157 198.5 H1172 M1157 210.5 H1172 M1171.5 198 V202 M1171.5 207 V211 M1172.5 201 V208 M1173.5 198 V202 M1173.5 207 V211 M1173 198.5 H1188 M1173 210.5 H1188 M1187.5 198 V202 M1187.5 207 V211 M1188.5 201 V208 M1189.5 198 V202 M1189.5 207 V211 M1189 198.5 H1204 M1189 210.5 H1204 M1203.5 198 V202 M1203.5 207 V211 M1204.5 201 V208 M1205.5 198 V202 M1205.5 207 V211 M1205 198.5 H1219 M1205 210.5 H1219 M1218.5 198 V202 M1218.5 207 V211 M1219.5 201 V208 M1220.5 198 V202 M1220.5 207 V211 M1220 198.5 H1235 M1220 210.5 H1235 M1234.5 198 V202 M1234.5 207 V211 M1235.5 201 V208 M1236.5 198 V202 M1236.5 207 V211 M1236 198.5 H1251 M1236 210.5 H1251 M1250.5 198 V202 M1250.5 207 V211 M1251.5 201 V208 M1252.5 198 V202 M1252.5 207 V211 M1252 198.5 H1267 M1252 210.5 H1267 M1266.5 198 V202 M1266.5 207 V211 M1267.5 201 V208 M1268.5 198 V202 M1268.5 207 V211 M1268 198.5 H1283 M1268 210.5 H1283 M1282.5 198 V202 M1282.5 207 V211 M1283.5 201 V208 M1284.5 198 V202 M1284.5 207 V211 M1284 198.5 H1299 M1284 210.5 H1299 M1298.5 198 V202 M1298.5 207 V211 M1299.5 201 V208 M1300.5 198 V202 M1300.5 207 V211 M1300 198.5 H1315 M1300 210.5 H1315 M1314.5 198 V202 M1314.5 207 V211 M1315.5 201 V208 M1316.5 198 V202 M1316.5 207 V211 M1316 198.5 H1331 M1316 210.5 H1331 M1330.5 198 V202 M1330.5 207 V211 M1331.5 201 V208 M1332.5 198 V202 M1332.5 207 V211 M1332 198.5 H1347 M1332 210.5 H1347 M1346.5 198 V202 M1346.5 207 V211 M1347.5 201 V208 M1348.5 198 V202 M1348.5 207 V211 M1348 198.5 H1363 M1348 210.5 H1363 M1362.5 198 V202 M1362.5 207 V211 M1363.5 201 V208 M1364.5 198 V202 M1364.5 207 V211 M1364 198.5 H1379 M1364 210.5 H1379 M1378.5 198 V202 M1378.5 207 V211 M1379.5 201 V208 M1380.5 198 V202 M1380.5 207 V211 M1380 198.5 H1395 M1380 210.5 H1395 M1394.5 198 V202 M1394.5 207 V211 M1395.5 201 V208 M1396.5 198 V202 M1396.5 207 V211 M1396 198.5 H1411 M1396 210.5 H1411 M1410.5 198 V202 M1410.5 207 V211 M1411.5 201 V208 M1412.5 198 V202 M1412.5 207 V211 M1412 198.5 H1427 M1412 210.5 H1427 M1426.5 198 V202 M1426.5 207 V211 M1427.5 201 V208 M1428.5 198 V202 M1428.5 207 V211 M1428 198.5 H1443 M1428 210.5 H1443 M1442.5 198 V202 M1442.5 207 V211 M1443.5 201 V208 M1444.5 198 V202 M1444.5 207 V211 M1444 198.5 H1459 M1444 210.5 H1459 M1458.5 198 V202 M1458.5 207 V211 M1459.5 201 V208 M1460.5 198 V202 M1460.5 207 V211 M1460 198.5 H1475 M1460 210.5 H1475 M1474.5 198 V202 M1474.5 207 V211 M1475.5 201 V208 M1476.5 198 V202 M1476.5 207 V211 M1476 198.5 H1491 M1476 210.5 H1491 M1490.5 198 V202 M1490.5 207 V211 M1491.5 201 V208 M1492.5 198 V202 M1492.5 207 V211 M1492 198.5 H1507 M1492 210.5 H1507 M1506.5 198 V202 M1506.5 207 V211 M1507.5 201 V208 M1508.5 198 V202 M1508.5 207 V211 M1508 198.5 H1522 M1508 210.5 H1522 M1521.5 198 V202 M1521.5 207 V211 M1522.5 201 V208 M1523.5 198 V202 M1523.5 207 V211 M1523 198.5 H1538 M1523 210.5 H1538 M1537.5 198 V202 M1537.5 207 V211 M1538.5 201 V208 M1539.5 198 V202 M1539.5 207 V211 M1539 198.5 H1554 M1539 210.5 H1554 M1553.5 198 V202 M1553.5 207 V211 M1554.5 201 V208 M1555.5 198 V202 M1555.5 207 V211 M1555 198.5 H1570 M1555 210.5 H1570 M1569.5 198 V202 M1569.5 207 V211 M1570.5 201 V208 M1571.5 198 V202 M1571.5 207 V211 M1571 198.5 H1586 M1571 210.5 H1586 M1585.5 198 V202 M1585.5 207 V211 M1586.5 201 V208 M1587.5 198 V202 M1587.5 207 V211 M1587 198.5 H1602 M1587 210.5 H1602 M1601.5 198 V202 M1601.5 207 V211 M1602.5 201 V208 M1603.5 198 V202 M1603.5 207 V211 M1603 198.5 H1618 M1603 210.5 H1618 M1617.5 198 V202 M1617.5 207 V211 M1618.5 201 V208 M1619.5 198 V202 M1619.5 207 V211 M1619 198.5 H1634 M1619 210.5 H1634 M1633.5 198 V202 M1633.5 207 V211 M1634.5 201 V208 M1635.5 198 V202 M1635.5 207 V211 M1635 198.5 H1650 M1635 210.5 H1650 M1649.5 198 V202 M1649.5 207 V211 M1650.5 201 V208 M1651.5 198 V202 M1651.5 207 V211 M1651 198.5 H1666 M1651 210.5 H1666 M1665.5 198 V202 M1665.5 207 V211 M1666.5 201 V208 M1667.5 198 V202 M1667.5 207 V211 M1667 198.5 H1682 M1667 210.5 H1682 M1681.5 198 V202 M1681.5 207 V211 M1682.5 201 V208 M1683.5 198 V202 M1683.5 207 V211 M1683 198.5 H1698 M1683 210.5 H1698 M1697.5 198 V202 M1697.5 207 V211 M1698.5 201 V208 M1699.5 198 V202 M1699.5 207 V211 M1699 198.5 H1714 M1699 210.5 H1714 M1713.5 198 V202 M1713.5 207 V211 M1714.5 201 V208 M1715.5 198 V202 M1715.5 207 V211 M1715 198.5 H1730 M1715 210.5 H1730 M1729.5 198 V202 M1729.5 207 V211 M1730.5 201 V208 M1731.5 198 V202 M1731.5 207 V211 M1731 198.5 H1746 M1731 210.5 H1746 M1745.5 198 V202 M1745.5 207 V211 M1746.5 201 V208 M1747.5 198 V202 M1747.5 207 V211 M1747 198.5 H1762 M1747 210.5 H1762 M1761.5 198 V202 M1761.5 207 V211 M1762.5 201 V208 M1763.5 198 V202 M1763.5 207 V211 M1763 198.5 H1778 M1763 210.5 H1778 M1777.5 198 V202 M1777.5 207 V211 M1778.5 201 V208 M1779.5 198 V202 M1779.5 207 V211 M1779 198.5 H1794 M1779 210.5 H1794 M1793.5 198 V202 M1793.5 207 V211 M1794.5 201 V208 M1795.5 198 V202 M1795.5 207 V211 M1795 198.5 H1809 M1795 210.5 H1809 M1808.5 198 V202 M1808.5 207 V211 M1809.5 201 V208 M1810.5 198 V202 M1810.5 207 V211 M1810 198.5 H1816 M1810 210.5 H1816" stroke="#b0ffb0" stroke-width="1" fill="none"/><path d="M756.5 320 V327 M757.5 317 V321 M757.5 326 V330 M757 317.5 H811 M757 329.5 H811 M810.5 317 V321 M810.5 326 V330 M811.5 320 V327 M812.5 317 V321 M812.5 326 V330 M812 317.5 H827 M812 329.5 H827 M826.5 317 V321 M826.5 326 V330 M827.5 320 V327 M828.5 317 V321 M828.5 326 V330 M828 317.5 H843 M828 329.5 H843 M842.5 317 V321 M842.5 326 V330 M843.5 320 V327 M844.5 317 V321 M844.5 326 V330 M844 317.5 H859 M844 329.5 H859 M858.5 317 V321 M858.5 326 V330 M859.5 320 V327 M860.5 317 V321 M860.5 326 V330 M860 317.5 H875 M860 329.5 H875 M874.5 317 V321 M874.5 326 V330 M875.5 320 V327 M876.5 317 V321 M876.5 326 V330 M876 317.5 H891 M876 329.5 H891 M890.5 317 V321 M890.5 326 V330 M891.5 320 V327 M892.5 317 V321 M892.5 326 V330 M892 317.5 H907 M892 329.5 H907 M906.5 317 V321 M906.5 326 V330 M907.5 320 V327 M908.5 317 V321 M908.5 326 V330 M908 317.5 H923 M908 329.5 H923 M922.5 317 V321 M922.5 326 V330 M923.5 320 V327 M924.5 317 V321 M924.5 326 V330 M924 317.5 H939 M924 329.5 H939 M938.5 317 V321 M938.5 326 V330 M939.5 320 V327 M940.5 317 V321 M940.5 326 V330 M940 317.5 H955 M940 329.5 H955 M954.5 317 V321 M954.5 326 V330 M955.5 320 V327 M956.5 317 V321 M956.5 326 V330 M956 317.5 H971 M956 329.5 H971 M970.5 317 V321 M970.5 326 V330 M971.5 320 V327 M972.5 317 V321 M972.5 326 V330 M972 317.5 H987 M972 329.5 H987 M986.5 317 V321 M986.5 326 V330 M987.5 320 V327 M988.5 317 V321 M988.5 326 V330 M988 317.5 H1003 M988 329.5 H1003 M1002.5 317 V321 M1002.5 326 V330 M1003.5 320 V327 M1004.5 317 V321 M1004.5 326 V330 M1004 317.5 H1019 M1004 329.5 H1019 M1018.5 317 V321 M1018.5 326 V330 M1019.5 320 V327 M1020.5 317 V321 M1020.5 326 V330 M1020 317.5 H1035 M1020 329.5 H1035 M1034.5 317 V321 M1034.5 326 V330 M1035.5 320 V327 M1036.5 317 V321 M1036.5 326 V330 M1036 317.5 H1050 M1036 329.5 H1050 M1049.5 317 V321 M1049.5 326 V330 M1050.5 320 V327 M1051.5 317 V321 M1051.5 326 V330 M1051 317.5 H1066 M1051 329.5 H1066 M1065.5 317 V321 M1065.5 326 V330 M1066.5 320 V327 M1067.5 317 V321 M1067.5 326 V330 M1067 317.5 H1082 M1067 329.5 H1082 M1081.5 317 V321 M1081.5 326 V330 M1082.5 320 V327 M1083.5 317 V321 M1083.5 326 V330 M1083 317.5 H1098 M1083 329.5 H1098 M1097.5 317 V321 M1097.5 326 V330 M1098.5 320 V327 M1099.5 317 V321 M1099.5 326 V330 M1099 317.5 H1114 M1099 329.5 H1114 M1113.5 317 V321 M1113.5 326 V330 M1114.5 320 V327 M1115.5 317 V321 M1115.5 326 V330 M1115 317.5 H1130 M1115 329.5 H1130 M1129.5 317 V321 M1129.5 326 V330 M1130.5 320 V327 M1131.5 317 V321 M1131.5 326 V330 M1131 317.5 H1146 M1131 329.5 H1146 M1145.5 317 V321 M1145.5 326 V330 M1146.5 320 V327 M1147.5 317 V321 M1147.5 326 V330 M1147 317.5 H1162 M1147 329.5 H1162 M1161.5 317 V321 M1161.5 326 V330 M1162.5 320 V327 M1163.5 317 V321 M1163.5 326 V330 M1163 317.5 H1178 M1163 329.5 H1178 M1177.5 317 V321 M1177.5 326 V330 M1178.5 320 V327 M1179.5 317 V321 M1179.5 326 V330 M1179 317.5 H1194 M1179 329.5 H1194 M1193.5 317 V321 M1193.5 326 V330 M1194.5 320 V327 M1195.5 317 V321 M1195.5 326 V330 M1195 317.5 H1210 M1195 329.5 H1210 M1209.5 317 V321 M1209.5 326 V330 M1210.5 320 V327 M1211.5 317 V321 M1211.5 326 V330 M1211 317.5 H1226 M1211 329.5 H1226 M1225.5 317 V321 M1225.5 326 V330 M1226.5 320 V327 M1227.5 317 V321 M1227.5 326 V330 M1227 317.5 H1242 M1227 329.5 H1242 M1241.5 317 V321 M1241.5 326 V330 M1242.5 320 V327 M1243.5 317 V321 M1243.5 326 V330 M1243 317.5 H1258 M1243 329.5 H1258 M1257.5 317 V321 M1257.5 326 V330 M1258.5 320 V327 M1259.5 317 V321 M1259.5 326 V330 M1259 317.5 H1274 M1259 329.5 H1274 M1273.5 317 V321 M1273.5 326 V330 M1274.5 320 V327 M1275.5 317 V321 M1275.5 326 V330 M1275 317.5 H1290 M1275 329.5 H1290 M1289.5 317 V321 M1289.5 326 V330 M1290.5 320 V327 M1291.5 317 V321 M1291.5 326 V330 M1291 317.5 H1306 M1291 329.5 H1306 M1305.5 317 V321 M1305.5 326 V330 M1306.5 320 V327 M1307.5 317 V321 M1307.5 326 V330 M1307 317.5 H1322 M1307 329.5 H1322 M1321.5 317 V321 M1321.5 326 V330 M1322.5 320 V327 M1323.5 317 V321 M1323.5 326 V330 M1323 317.5 H1337 M1323 329.5 H1337 M1336.5 317 V321 M1336.5 326 V330 M1337.5 320 V327 M1338.5 317 V321 M1338.5 326 V330 M1338 317.5 H1353 M1338 329.5 H1353 M1352.5 317 V321 M1352.5 326 V330 M1353.5 320 V327 M1354.5 317 V321 M1354.5 326 V330 M1354 317.5 H1369 M1354 329.5 H1369 M1368.5 317 V321 M1368.5 326 V330 M1369.5 320 V327 M1370.5 317 V321 M1370.5 326 V330 M1370 317.5 H1385 M1370 329.5 H1385 M1384.5 317 V321 M1384.5 326 V330 M1385.5 320 V327 M1386.5 317 V321 M1386.5 326 V330 M1386 317.5 H1401 M1386 329.5 H1401 M1400.5 317 V321 M1400.5 326 V330 M1401.5 320 V327 M1402.5 317 V321 M1402.5 326 V330 M1402 317.5 H1417 M1402 329.5 H1417 M1416.5 317 V321 M1416.5 326 V330 M1417.5 320 V327 M1418.5 317 V321 M1418.5 326 V330 M1418 317.5 H1433 M1418 329.5 H1433 M1432.5 317 V321 M1432.5 326 V330 M1433.5 320 V327 M1434.5 317 V321 M1434.5 326 V330 M1434 317.5 H1449 M1434 329.5 H1449 M1448.5 317 V321 M1448.5 326 V330 M1449.5 320 V327 M1450.5 317 V321 M1450.5 326 V330 M1450 317.5 H1465 M1450 329.5 H1465 M1464.5 317 V321 M1464.5 326 V330 M1465.5 320 V327 M1466.5 317 V321 M1466.5 326 V330 M1466 317.5 H1481 M1466 329.5 H1481 M1480.5 317 V321 M1480.5 326 V330 M1481.5 320 V327 M1482.5 317 V321 M1482.5 326 V330 M1482 317.5 H1497 M1482 329.5 H1497 M1496.5 317 V321 M1496.5 326 V330 M1497.5 320 V327 M1498.5 317 V321 M1498.5 326 V330 M1498 317.5 H1513 M1498 329.5 H1513 M1512.5 317 V321 M1512.5 326 V330 M1513.5 320 V327 M1514.5 317 V321 M1514.5 326 V330 M1514 317.5 H1529 M1514 329.5 H1529 M1528.5 317 V321 M1528.5 326 V330 M1529.5 320 V327 M1530.5 317 V321 M1530.5 326 V330 M1530 317.5 H1545 M1530 329.5 H1545 M1544.5 317 V321 M1544.5 326 V330 M1545.5 320 V327 M1546.5 317 V321 M1546.5 326 V330 M1546 317.5 H1561 M1546 329.5 H1561 M1560.5 317 V321 M1560.5 326 V330 M1561.5 320 V327 M1562.5 317 V321 M1562.5 326 V330 M1562 317.5 H1577 M1562 329.5 H1577 M1576.5 317 V321 M1576.5 326 V330 M1577.5 320 V327 M1578.5 317 V321 M1578.5 326 V330 M1578 317.5 H1593 M1578 329.5 H1593 M1592.5 317 V321 M1592.5 326 V330 M1593.5 320 V327 M1594.5 317 V321 M1594.5 326 V330 M1594 317.5 H1609 M1594 329.5 H1609 M1608.5 317 V321 M1608.5 326 V330 M1609.5 320 V327 M1610.5 317 V321 M1610.5 326 V330 M1610 317.5 H1625 M1610 329.5 H1625 M1624.5 317 V321 M1624.5 326 V330 M1625.5 320 V327 M1626.5 317 V321 M1626.5 326 V330 M1626 317.5 H1640 M1626 329.5 H1640 M1639.5 317 V321 M1639.5 326 V330 M1640.5 320 V327 M1641.5 317 V321 M1641.5 326 V330 M1641 317.5 H1656 M1641 329.5 H1656 M1655.5 317 V321 M1655.5 326 V330 M1656.5 320 V327 M1657.5 317 V321 M1657.5 326 V330 M1657 317.5 H1672 M1657 329.5 H1672 M1671.5 317 V321 M1671.5 326 V330 M1672.5 320 V327 M1673.5 317 V321 M1673.5 326 V330 M1673 317.5 H1688 M1673 329.5 H1688 M1687.5 317 V321 M1687.5 326 V330 M1688.5 320 V327 M1689.5 317 V321 M1689.5 326 V330 M1689 317.5 H1704 M1689 329.5 H1704 M1703.5 317 V321 M1703.5 326 V330 M1704.5 320 V327 M1705.5 317 V321 M1705.5 326 V330 M1705 317.5 H1720 M1705 329.5 H1720 M1719.5 317 V321 M1719.5 326 V330 M1720.5 320 V327 M1721.5 317 V321 M1721.5 326 V330 M1721 317.5 H1736 M1721 329.5 H1736 M1735.5 317 V321 M1735.5 326 V330 M1736.5 320 V327 M1737.5 317 V321 M1737.5 326 V330 M1737 317.5 H1752 M1737 329.5 H1752 M1751.5 317 V321 M1751.5 326 V330 M1752.5 320 V327 M1753.5 317 V321 M1753.5 326 V330 M1753 317.5 H1768 M1753 329.5 H1768 M1767.5 317 V321 M1767.5 326 V330 M1768.5 320 V327 M1769.5 317 V321 M1769.5 326 V330 M1769 317.5 H1784 M1769 329.5 H1784 M1783.5 317 V321 M1783.5 326 V330 M1784.5 320 V327 M1785.5 317 V321 M1785.5 326 V330 M1785 317.5 H1800 M1785 329.5 H1800 M1799.5 317 V321 M1799.5 326 V330 M1800.5 320 V327 M1801.5 317 V321 M1801.5 326 V330 M1801 317.5 H1816 M1801 329.5 H1816 M1815.5 317 V320 M1815.5 327 V330 M1816.5 320 V322 M1816.5 325 V327" stroke="#b0ffb0" stroke-width="1" fill="none"/><path d="M756.5 337 V344 M757.5 334 V338 M757.5 343 V347 M757 334.5 H1816 M757 346.5 H1816" stroke="#b0ffb0" stroke-width="1" fill="none"/><path d="M764.5 731V735 M772.5 731V735 M780.5 731V735 M788.5 731V735 M796.5 731V735 M804.5 731V735 M812.5 731V735 M820.5 731V735 M828.5 731V735 M835.5 728V735 M844.5 731V735 M852.5 731V735 M860.5 731V735 M868.5 731V735 M876.5 731V735 M884.5 731V735 M892.5 731V735 M900.5 731V735 M907.5 731V735 M915.5 728V735 M923.5 731V735 M931.5 731V735 M939.5 731V735 M947.5 731V735 M955.5 731V735 M963.5 731V735 M971.5 731V735 M979.5 731V735 M987.5 731V735 M995.5 728V735 M1003.5 731V735 M1011.5 731V735 M1019.5 731V735 M1027.5 731V735 M1035.5 731V735 M1043.5 731V735 M1051.5 731V735 M1059.5 731V735 M1067.5 731V735 M1074.5 728V735 M1083.5 731V735 M1091.5 731V735 M1099.5 731V735 M1107.5 731V735 M1115.5 731V735 M1123.5 731V735 M1131.5 731V735 M1139.5 731V735 M1147.5 731V735 M1154.5 728V735 M1163.5 731V735 M1171.5 731V735 M1179.5 731V735 M1187.5 731V735 M1194.5 731V735 M1202.5 731V735 M1210.5 731V735 M1218.5 731V735 M1226.5 731V735 M1234.5 728V735 M1242.5 731V735 M1250.5 731V735 M1258.5 731V735 M1266.5 731V735 M1274.5 731V735 M1282.5 731V735 M1290.5 731V735 M1298.5 731V735 M1306.5 731V735 M1314.5 728V735 M1322.5 731V735 M1330.5 731V735 M1338.5 731V735 M1346.5 731V735 M1354.5 731V735 M1362.5 731V735 M1370.5 731V735 M1378.5 731V735 M1386.5 731V735 M1393.5 728V735 M1402.5 731V735 M1410.5 731V735 M1418.5 731V735 M1426.5 731V735 M1434.5 731V735 M1442.5 731V735 M1450.5 731V735 M1458.5 731V735 M1466.5 731V735 M1473.5 728V735 M1481.5 731V735 M1489.5 731V735 M1497.5 731V735 M1505.5 731V735 M1513.5 731V735 M1521.5 731V735 M1529.5 731V735 M1537.5 731V735 M1545.5 731V735 M1553.5 728V735 M1561.5 731V735 M1569.5 731V735 M1577.5 731V735 M1585.5 731V735 M1593.5 731V735 M1601.5 731V735 M1609.5 731V735 M1617.5 731V735 M1625.5 731V735 M1632.5 728V735 M1641.5 731V735 M1649.5 731V735 M1657.5 731V735 M1665.5 731V735 M1673.5 731V735 M1681.5 731V735 M1689.5 731V735 M1697.5 731V735 M1705.5 731V735 M1712.5 728V735 M1721.5 731V735 M1729.5 731V735 M1737.5 731V735 M1745.5 731V735 M1753.5 731V735 M1761.5 731V735 M1769.5 731V735 M1776.5 731V735 M1784.5 731V735 M1792.5 728V735 M1800.5 731V735 M1808.5 731V735 M1816.5 731V735 M1824.5 731V735 M1832.5 731V735 M1840.5 731V735 M1848.5 731V735 M1856.5 731V735 M1864.5 731V735 M1872.5 728V735 M1880.5 731V735 M1888.5 731V735" stroke="#00ff00" stroke-width="1" fill="none"/><rect x="1848" y="139" width="3" height="18" fill="#ffd700"/><rect x="1848" y="160" width="3" height="565" fill="#ffd700"/><rect x="1848" y="728" width="3" height="22" fill="#ffd700"/><rect x="756" y="204" width="1" height="1" fill="#ff0000"/></svg>
<span style="left:762px;top:198px;height:15px;line-height:15px;font-size:11px;color:#fff;white-space:pre;transform-origin:0 50%;transform:scaleX(0.8991);">00</span>
<span style="left:761px;top:317px;height:15px;line-height:15px;font-size:11px;color:#fff;white-space:pre;">0</span>
<span style="left:816px;top:317px;height:15px;line-height:15px;font-size:11px;color:#fff;white-space:pre;">1</span>
<span style="left:832px;top:317px;height:15px;line-height:15px;font-size:11px;color:#fff;white-space:pre;">2</span>
<span style="left:848px;top:317px;height:15px;line-height:15px;font-size:11px;color:#fff;white-space:pre;">3</span>
<span style="left:864px;top:317px;height:15px;line-height:15px;font-size:11px;color:#fff;white-space:pre;">4</span>
<span style="left:880px;top:317px;height:15px;line-height:15px;font-size:11px;color:#fff;white-space:pre;">5</span>
<span style="left:896px;top:317px;height:15px;line-height:15px;font-size:11px;color:#fff;white-space:pre;">6</span>
<span style="left:912px;top:317px;height:15px;line-height:15px;font-size:11px;color:#fff;white-space:pre;">7</span>
<span style="left:928px;top:317px;height:15px;line-height:15px;font-size:11px;color:#fff;white-space:pre;">8</span>
<span style="left:944px;top:317px;height:15px;line-height:15px;font-size:11px;color:#fff;white-space:pre;">9</span>
<span style="left:761px;top:334px;height:15px;line-height:15px;font-size:11px;color:#fff;white-space:pre;">0</span>
<div style="left:755px;top:737px;width:1135px;height:14px;overflow:hidden;">
<span style="left:-30px;top:0;width:60px;text-align:center;font-size:11px;line-height:14px;color:#00ff00;white-space:pre;transform:scaleX(0.93);">0 ps</span>
<span style="left:130px;top:0;width:60px;text-align:center;font-size:11px;line-height:14px;color:#00ff00;white-space:pre;transform:scaleX(0.93);">100000 ps</span>
<span style="left:289px;top:0;width:60px;text-align:center;font-size:11px;line-height:14px;color:#00ff00;white-space:pre;transform:scaleX(0.93);">200000 ps</span>
<span style="left:449px;top:0;width:60px;text-align:center;font-size:11px;line-height:14px;color:#00ff00;white-space:pre;transform:scaleX(0.93);">300000 ps</span>
<span style="left:608px;top:0;width:60px;text-align:center;font-size:11px;line-height:14px;color:#00ff00;white-space:pre;transform:scaleX(0.93);">400000 ps</span>
<span style="left:768px;top:0;width:60px;text-align:center;font-size:11px;line-height:14px;color:#00ff00;white-space:pre;transform:scaleX(0.93);">500000 ps</span>
<span style="left:927px;top:0;width:60px;text-align:center;font-size:11px;line-height:14px;color:#00ff00;white-space:pre;transform:scaleX(0.93);">600000 ps</span>
<span style="left:1087px;top:0;width:60px;text-align:center;font-size:11px;line-height:14px;color:#00ff00;white-space:pre;transform:scaleX(0.93);">700000 ps</span>
</div>
<div style="left:1822px;top:751px;width:55px;height:16px;background:#000;border:1px solid #ffc800;"></div>
<span style="left:1825px;top:753px;height:15px;line-height:15px;font-size:11px;color:#ffd030;white-space:pre;transform-origin:0 50%;transform:scaleX(0.9343);">686198 ps</span>
<div style="left:0px;top:792px;width:1919px;height:7px;background:#cccccc;"></div>
<div style="left:0px;top:799px;width:1919px;height:1px;background:#b4b4b4;"></div>
<div style="left:0px;top:800px;width:1919px;height:1px;background:#fff;"></div>
<div style="left:0px;top:801px;width:1915px;height:18px;background:#f0f0f0;"></div>
<span style="left:18px;top:801px;height:18px;line-height:18px;font-size:11px;color:#000;white-space:pre;transform-origin:0 50%;transform:scaleX(1.0106);">Transcript</span>
<div style="left:1868px;top:803px;width:13px;height:13px;background:#f4f4f4;border-right:1px solid #707070;border-bottom:1px solid #707070;border-top:1px solid #fff;border-left:1px solid #fff;"></div>
<svg style="left:1868px;top:803px;" width="14" height="14" viewBox="0 0 14 14"><path d="M6.5 2.5V10.5M2.5 6.5H10.5" stroke="#000" stroke-width="2" fill="none"/></svg>
<div style="left:1884px;top:803px;width:13px;height:13px;background:#f4f4f4;border-right:1px solid #707070;border-bottom:1px solid #707070;border-top:1px solid #fff;border-left:1px solid #fff;"></div>
<svg style="left:1884px;top:803px;" width="14" height="14" viewBox="0 0 14 14"><rect x="3" y="6" width="4.5" height="4.5" stroke="#000" stroke-width="1.2" fill="none"/><path d="M6 7L10.5 2.5M7 2.5H10.5V6" stroke="#000" stroke-width="1.3" fill="none"/></svg>
<div style="left:1900px;top:803px;width:13px;height:13px;background:#f4f4f4;border-right:1px solid #707070;border-bottom:1px solid #707070;border-top:1px solid #fff;border-left:1px solid #fff;"></div>
<svg style="left:1900px;top:803px;" width="14" height="14" viewBox="0 0 14 14"><path d="M3 3L10 10M10 3L3 10" stroke="#000" stroke-width="1.6" fill="none"/></svg>
<div style="left:73px;top:807px;width:884px;height:1px;background:#7a7a7a;"></div>
<div style="left:73px;top:808px;width:884px;height:1px;background:#fff;"></div>
<div style="left:73px;top:812px;width:884px;height:1px;background:#7a7a7a;"></div>
<div style="left:73px;top:813px;width:884px;height:1px;background:#fff;"></div>
<div style="left:956px;top:807px;width:1px;height:7px;background:#7a7a7a;"></div>
<div style="left:981px;top:807px;width:884px;height:1px;background:#7a7a7a;"></div>
<div style="left:981px;top:808px;width:884px;height:1px;background:#fff;"></div>
<div style="left:981px;top:812px;width:884px;height:1px;background:#7a7a7a;"></div>
<div style="left:981px;top:813px;width:884px;height:1px;background:#fff;"></div>
<div style="left:1864px;top:807px;width:1px;height:7px;background:#7a7a7a;"></div>
<svg style="left:960px;top:807px;shape-rendering:crispEdges;" width="18" height="8" viewBox="0 0 18 8"><rect x="0" y="-1" width="1" height="1" fill="#fff"/><rect x="1" y="0" width="1" height="1" fill="#000"/><rect x="3" y="-1" width="1" height="1" fill="#fff"/><rect x="4" y="0" width="1" height="1" fill="#000"/><rect x="6" y="-1" width="1" height="1" fill="#fff"/><rect x="7" y="0" width="1" height="1" fill="#000"/><rect x="9" y="-1" width="1" height="1" fill="#fff"/><rect x="10" y="0" width="1" height="1" fill="#000"/><rect x="12" y="-1" width="1" height="1" fill="#fff"/><rect x="13" y="0" width="1" height="1" fill="#000"/><rect x="15" y="-1" width="1" height="1" fill="#fff"/><rect x="16" y="0" width="1" height="1" fill="#000"/><rect x="1" y="2" width="1" height="1" fill="#fff"/><rect x="2" y="3" width="1" height="1" fill="#000"/><rect x="4" y="2" width="1" height="1" fill="#fff"/><rect x="5" y="3" width="1" height="1" fill="#000"/><rect x="7" y="2" width="1" height="1" fill="#fff"/><rect x="8" y="3" width="1" height="1" fill="#000"/><rect x="10" y="2" width="1" height="1" fill="#fff"/><rect x="11" y="3" width="1" height="1" fill="#000"/><rect x="13" y="2" width="1" height="1" fill="#fff"/><rect x="14" y="3" width="1" height="1" fill="#000"/><rect x="16" y="2" width="1" height="1" fill="#fff"/><rect x="17" y="3" width="1" height="1" fill="#000"/><rect x="0" y="5" width="1" height="1" fill="#fff"/><rect x="1" y="6" width="1" height="1" fill="#000"/><rect x="3" y="5" width="1" height="1" fill="#fff"/><rect x="4" y="6" width="1" height="1" fill="#000"/><rect x="6" y="5" width="1" height="1" fill="#fff"/><rect x="7" y="6" width="1" height="1" fill="#000"/><rect x="9" y="5" width="1" height="1" fill="#fff"/><rect x="10" y="6" width="1" height="1" fill="#000"/><rect x="12" y="5" width="1" height="1" fill="#fff"/><rect x="13" y="6" width="1" height="1" fill="#000"/><rect x="15" y="5" width="1" height="1" fill="#fff"/><rect x="16" y="6" width="1" height="1" fill="#000"/></svg>
<svg style="left:1px;top:803px;" width="14" height="14" viewBox="0 0 14 14"><path d="M0.5 13.5L1.5 4Q2 0.5 5 0.5H8Q11 0.5 11.5 4L12.5 13.5L10 11V8H3V11Z" fill="#8a8484" stroke="#404040" stroke-width=".8"/><rect x="4" y="2" width="5" height="4.5" fill="#fff"/><rect x="3" y="8" width="7" height="3" fill="#b8b0b0" opacity=".6"/></svg>
<div style="left:0px;top:819px;width:2px;height:196px;background:#f8f8f8;"></div>
<div style="left:2px;top:819px;width:1893px;height:195px;background:#fff;border-top:1px solid #000;border-left:1px solid #000;"></div>
<span style="left:5px;top:819px;height:15px;line-height:15px;font-size:11.67px;color:#000;white-space:pre;font-family:'Liberation Mono',monospace;"># add wave *</span>
<span style="left:5px;top:834px;height:15px;line-height:15px;font-size:11.67px;color:#000;white-space:pre;font-family:'Liberation Mono',monospace;"># view structure</span>
<span style="left:5px;top:849px;height:15px;line-height:15px;font-size:11.67px;color:#000;white-space:pre;font-family:'Liberation Mono',monospace;"># .main_pane.structure.interior.cs.body.struct</span>
<span style="left:5px;top:864px;height:15px;line-height:15px;font-size:11.67px;color:#000;white-space:pre;font-family:'Liberation Mono',monospace;"># view signals</span>
<span style="left:5px;top:879px;height:15px;line-height:15px;font-size:11.67px;color:#000;white-space:pre;font-family:'Liberation Mono',monospace;"># .main_pane.objects.interior.cs.body.tree</span>
<span style="left:5px;top:894px;height:15px;line-height:15px;font-size:11.67px;color:#000;white-space:pre;font-family:'Liberation Mono',monospace;"># run -all</span>
<span style="left:5px;top:909px;height:15px;line-height:15px;font-size:11.67px;color:#1010e0;white-space:pre;font-family:'Liberation Mono',monospace;">#         64 tests completed with          0 errors.</span>
<span style="left:5px;top:924px;height:15px;line-height:15px;font-size:11.67px;color:#1010e0;white-space:pre;font-family:'Liberation Mono',monospace;"># ** Note: $finish    : D:/Programming/Verilog/4_Multiplexer/1_sturctural/tb_mx4.v(47)</span>
<span style="left:5px;top:939px;height:15px;line-height:15px;font-size:11.67px;color:#1010e0;white-space:pre;font-family:'Liberation Mono',monospace;">#    Time: 665 ns  Iteration: 1  Instance: /tb_mx4</span>
<span style="left:5px;top:954px;height:15px;line-height:15px;font-size:11.67px;color:#208020;white-space:pre;font-family:'Liberation Mono',monospace;"># 1</span>
<span style="left:5px;top:969px;height:15px;line-height:15px;font-size:11.67px;color:#208020;white-space:pre;font-family:'Liberation Mono',monospace;"># Break in Module tb_mx4 at D:/Programming/Verilog/4_Multiplexer/1_sturctural/tb_mx4.v line 47</span>
<span style="left:3px;top:997px;height:16px;line-height:16px;font-size:11px;color:#000090;white-space:pre;transform-origin:0 50%;transform:scaleX(0.9767);">VSIM 2&gt;</span>
<div style="left:1898px;top:819px;width:17px;height:196px;background:#f7f7f7;"></div>
<div style="left:1898px;top:819px;width:17px;height:16px;background:#f0f0f0;border-right:2px solid #848484;border-bottom:2px solid #848484;border-top:1px solid #fff;border-left:1px solid #fff;"></div>
<svg style="left:1898px;top:819px;" width="17" height="17" viewBox="0 0 17 17"><path d="M4.5 10H12.5L8.5 6Z" fill="#000"/></svg>
<div style="left:1898px;top:999px;width:17px;height:16px;background:#f0f0f0;border-right:2px solid #848484;border-bottom:2px solid #848484;border-top:1px solid #fff;border-left:1px solid #fff;"></div>
<svg style="left:1898px;top:999px;" width="17" height="17" viewBox="0 0 17 17"><path d="M4.5 6H12.5L8.5 10Z" fill="#000"/></svg>
<div style="left:1898px;top:836px;width:17px;height:150px;background:#f7f7f7;"></div>
<div style="left:1898px;top:983px;width:17px;height:15px;background:#f0f0f0;border-right:1px solid #808080;border-bottom:1px solid #808080;border-top:1px solid #fff;border-left:1px solid #fff;"></div>
<div style="left:0px;top:1014px;width:1919px;height:5px;background:#f0f0f0;"></div>
<div style="left:0px;top:1014px;width:1919px;height:18px;background:#f0f0f0;"></div>
<div style="left:0px;top:1015px;width:1919px;height:1px;background:#a0a0a0;"></div>
<div style="left:0px;top:1016px;width:1919px;height:1px;background:#fff;"></div>
<div style="left:0px;top:1020px;width:196px;height:13px;background:#f0f0f0;border-top:1px solid #a0a0a0;border-left:1px solid #a0a0a0;border-right:1px solid #fff;"></div>
<div style="left:201px;top:1020px;width:1524px;height:13px;background:#f0f0f0;border-top:1px solid #a0a0a0;border-left:1px solid #a0a0a0;border-right:1px solid #fff;"></div>
<div style="left:1728px;top:1020px;width:169px;height:13px;background:#f0f0f0;border-top:1px solid #a0a0a0;border-left:1px solid #a0a0a0;border-right:1px solid #fff;"></div>
<span style="left:1px;top:1021px;height:16px;line-height:16px;font-size:11px;color:#000;white-space:pre;transform-origin:0 50%;transform:scaleX(1.0223);">Now: 665 ns  Delta: 1</span>
<span style="left:203.5px;top:1021px;height:16px;line-height:16px;font-size:11px;color:#000;white-space:pre;transform-origin:0 50%;transform:scaleX(1.0106);">sim:/tb_mx4/#ALWAYS#35</span>
<span style="left:1735px;top:1021px;height:16px;line-height:16px;font-size:11px;color:#000;white-space:pre;transform-origin:0 50%;transform:scaleX(0.9869);">0 ps to 711288 ps</span>
<div style="left:1917px;top:6px;width:1px;height:1026px;background:#a8a8a8;"></div>
<div style="left:1918px;top:6px;width:1px;height:1026px;background:#e4e4e4;"></div>
<div style="left:0px;top:1032px;width:1919px;height:47px;background:#1f2819;"></div>
<svg style="left:1851px;top:1041px;" width="24" height="13" viewBox="0 0 24 13"><g fill="none" stroke="#e6e6e6" stroke-width="1.05"><ellipse cx="5.5" cy="3.6" rx="3.1" ry="2.6"/><path d="M5.5 6.4V9.6M0.3 9.8H10.7"/><path d="M15.6 0.7H19.4M13 2.5H22"/><ellipse cx="17.5" cy="5.1" rx="2.5" ry="1.6"/><path d="M12.3 8.3H22.7M17.5 8.3V12.3"/></g></svg>
<span style="right:18.5px;top:1040px;height:16px;line-height:16px;font-size:12px;color:#e6e6e6;white-space:pre;">5:12</span>
<span style="left:1838.7px;top:1056px;height:16px;line-height:16px;font-size:12px;color:#e6e6e6;white-space:pre;transform-origin:0 50%;transform:scaleX(1.0069);">2025-10-30</span>
<svg style="left:751px;top:1045px;" width="23" height="23" viewBox="0 0 23 23"><defs><linearGradient id="wl" x1="0" y1="0" x2="1" y2="1"><stop offset="0" stop-color="#6fd8ff"/><stop offset="1" stop-color="#15a6f0"/></linearGradient></defs><rect x="0" y="0" width="10.8" height="10.8" rx="1" fill="url(#wl)"/><rect x="12.2" y="0" width="10.8" height="10.8" rx="1" fill="url(#wl)"/><rect x="0" y="12.2" width="10.8" height="10.8" rx="1" fill="url(#wl)"/><rect x="12.2" y="12.2" width="10.8" height="10.8" rx="1" fill="url(#wl)"/></svg>
<svg style="left:795px;top:1045px;" width="25" height="22" viewBox="0 0 25 22"><rect x="0" y="6" width="17" height="15.5" rx="2" fill="#6a6a6a"/><rect x="1" y="7" width="15" height="7" rx="1.5" fill="#8a8a8a"/><rect x="7" y="0" width="17.5" height="15.5" rx="2" fill="#f4f4f4"/><rect x="7" y="8" width="17.5" height="7.5" rx="2" fill="#d0d0d0"/></svg>
<svg style="left:839px;top:1045px;" width="24" height="23" viewBox="0 0 24 23"><defs><linearGradient id="cpa" x1="0" y1="0" x2="0" y2="1"><stop offset="0" stop-color="#3a8cf0"/><stop offset="1" stop-color="#2a60d8"/></linearGradient><linearGradient id="cpb" x1="0" y1="0" x2="1" y2="1"><stop offset="0" stop-color="#c060e8"/><stop offset="1" stop-color="#f06088"/></linearGradient><linearGradient id="cpc" x1="0" y1="0" x2="0" y2="1"><stop offset="0" stop-color="#30c8a0"/><stop offset=".6" stop-color="#e8d840"/><stop offset="1" stop-color="#f0a030"/></linearGradient><linearGradient id="cpd" x1="0" y1="0" x2="1" y2="0"><stop offset="0" stop-color="#f08030"/><stop offset="1" stop-color="#f04060"/></linearGradient></defs><path d="M7 1H13Q16 1 17 4L18 7H12Q9.5 7 8.5 10L7.5 13Q5 6 7 1Z" fill="url(#cpa)"/><path d="M14 1Q18 1 19.5 5L22.5 14Q23.5 18 20 19H16.5Q18.5 16 17.5 13L15.5 6Q15 3 14 1Z" fill="url(#cpb)"/><path d="M10 22Q6 22 4.500 18L1.5 9Q0.5 5 4 4H7.500Q5.500 7 6.500 10L8.500 17Q9 20 10 22Z" fill="url(#cpc)"/><path d="M17 22H11Q8 22 7 19L6 16H12Q14.500 16 15.500 13L16.500 10Q19 17 17 22Z" fill="url(#cpd)"/></svg>
<svg style="left:882px;top:1045px;" width="26" height="22" viewBox="0 0 26 22"><path d="M0.5 2Q0.5 0.5 2 0.5H8.5L11 3H24Q25.5 3 25.5 4.5V8H0.5Z" fill="#e8a820"/><rect x="0.5" y="4.5" width="25" height="16.5" rx="1.5" fill="#ffd24a"/><rect x="0.5" y="17" width="25" height="4" rx="1.5" fill="#e8b030"/><rect x="5.5" y="14.5" width="15" height="6.5" rx="1.5" fill="#3a8ee0"/><rect x="9" y="16.8" width="8" height="1.4" rx=".7" fill="#1858b0"/></svg>
<svg style="left:927px;top:1044px;" width="25" height="25" viewBox="0 0 25 25"><defs><linearGradient id="eg1" x1="0" y1="0" x2="1" y2="1"><stop offset="0" stop-color="#35c1f1"/><stop offset=".5" stop-color="#1b88d8"/><stop offset="1" stop-color="#0c59a4"/></linearGradient><linearGradient id="eg2" x1="0" y1="0" x2="1" y2="0"><stop offset="0" stop-color="#2fb8e8"/><stop offset="1" stop-color="#6ed95a"/></linearGradient></defs><circle cx="12.5" cy="12.5" r="12" fill="url(#eg1)"/><path d="M1 10Q3 0.5 12.5 0.5Q22 0.5 24.3 9.5Q24.5 13 21 13.5H13Q13.5 9.5 9.5 9Q4 9 1 13Z" fill="url(#eg2)"/><path d="M9.5 9Q5.5 10.5 6 15.5Q7 21.5 14 22Q19 22 22 18.5Q17 20.5 13.5 17.5Q11.5 15.5 13 13.5H21Q16 13 13 13Q13.5 9.5 9.5 9Z" fill="#1f2819" opacity=".0"/><path d="M13 13.5Q11.5 15.5 13.5 17.5Q17 20.5 22.5 17.5Q19 24 12 24Q5 23 4.5 16Q4.5 10.5 9.5 9Q13.5 9.5 13 13.5Z" fill="#0d56a0"/><path d="M13 13.5Q12 15.5 14 17.5Q17 19.5 21.5 18L23.5 14Q22 13.5 21 13.5Z" fill="#1f2819"/></svg>
<svg style="left:971px;top:1044px;" width="25" height="25" viewBox="0 0 25 25"><path d="M17.5 0.5L24.5 4V21L17.5 24.5L5.5 13.5L2 16.5L0.5 15.5V9.5L2 8.5L5.5 11.5Z" fill="#1f9cf0"/><path d="M17.5 0.5L24.5 4V21L17.5 24.5Z" fill="#0a6cc0"/><path d="M17.5 7L9.5 12.5L17.5 18Z" fill="#1f2819"/><path d="M0.5 9.5L2 8.5L17.5 24.5L14 23.5Z" fill="#1478c8" opacity=".9"/></svg>
<svg style="left:1015px;top:1044px;" width="28" height="25" viewBox="0 0 28 25"><circle cx="12" cy="13" r="12" fill="#5865f2"/><path d="M6 8.5Q9 7 12 7Q15 7 18 8.5Q20.5 12.5 20.3 17Q18 18.8 16 19L15.2 17.5Q12 18.5 8.8 17.5L8 19Q6 18.8 3.7 17Q3.5 12.5 6 8.5Z" fill="#fff"/><ellipse cx="9.3" cy="13.7" rx="1.6" ry="1.8" fill="#5865f2"/><ellipse cx="14.7" cy="13.7" rx="1.6" ry="1.8" fill="#5865f2"/><circle cx="21.3" cy="3.2" r="6.8" fill="#e8453c"/></svg>
<span style="left:1033.6px;top:1040.5px;height:14px;line-height:14px;font-size:10.5px;color:#fff;white-space:pre;">2</span>
<svg style="left:1059px;top:1044px;" width="25" height="25" viewBox="0 0 25 25"><defs><radialGradient id="gb" cx="35%" cy="30%" r="80%"><stop offset="0" stop-color="#9fdcf8"/><stop offset=".6" stop-color="#3a9ad8"/><stop offset="1" stop-color="#1868a8"/></radialGradient></defs><circle cx="11.5" cy="12" r="11.5" fill="url(#gb)"/><path d="M2 7Q8 4 13 8Q17 12 22 12Q20 20 13 20Q16 14 10 11Q6 9 2 7Z" fill="#f4faff"/><path d="M13 13H22L24.5 15.5V23H15.5L13 20.5Z" fill="#1464a8"/></svg>
<svg style="left:1102px;top:1045px;" width="26" height="23" viewBox="0 0 26 23"><path d="M8 0.5L25 11.5L8 22.5L0.5 11.5Z" fill="#f4fff4"/><path d="M8 2L13 6.5L9.5 16.5L11 20.5L8 22.5L0.5 11.5Z" fill="#4ed080"/><path d="M13 6.5L21 11.5L12.5 17L10.5 16.5Z" fill="#14245c"/></svg>
<div style="left:1139px;top:1042px;width:40px;height:33px;background:#2d3629;border-radius:4px;border:1px solid #3b4437;"></div>
<div style="left:1147px;top:1044px;width:24px;height:7px;background:#fff;"></div>
<div style="left:1148.5px;top:1045.5px;width:21px;height:4px;background:#0000f0;"></div>
<svg style="left:1147px;top:1052px;" width="24" height="16" viewBox="0 0 24 16"><path d="M3.5 16V3.5L12 11.5L20.5 3.5V16" stroke="#fff" stroke-width="6" fill="none" stroke-linejoin="miter"/><rect x="0" y="0" width="24" height="17" fill="#fff" opacity=".0"/><path d="M3.5 15.5V3.5L12 11.5L20.5 3.5V15.5" stroke="#000" stroke-width="3.4" fill="none"/></svg>
<div style="left:892px;top:1072px;width:6px;height:3px;background:#8c9088;border-radius:1.5px;"></div>
<div style="left:936px;top:1072px;width:6px;height:3px;background:#8c9088;border-radius:1.5px;"></div>
<div style="left:980px;top:1072px;width:6px;height:3px;background:#8c9088;border-radius:1.5px;"></div>
<div style="left:1024px;top:1072px;width:6px;height:3px;background:#8c9088;border-radius:1.5px;"></div>
<div style="left:1068px;top:1072px;width:6px;height:3px;background:#8c9088;border-radius:1.5px;"></div>
<div style="left:1112px;top:1072px;width:6px;height:3px;background:#8c9088;border-radius:1.5px;"></div>
<div style="left:1151px;top:1072px;width:16px;height:3px;background:#4cc2ff;border-radius:1.5px;"></div>
</body></html>
